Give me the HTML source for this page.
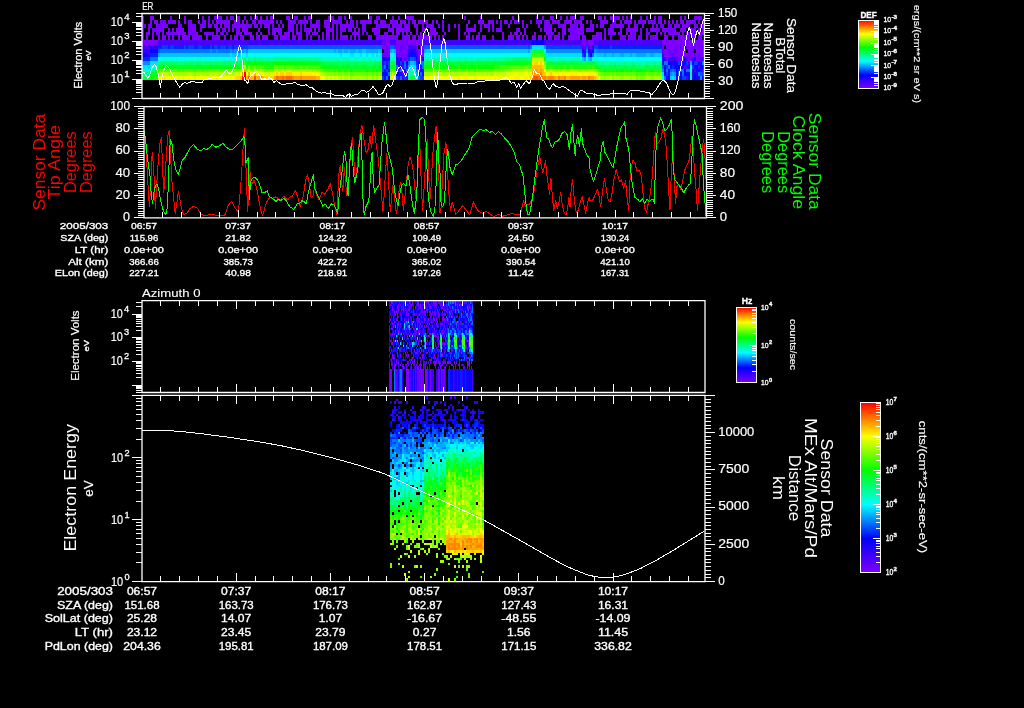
<!DOCTYPE html>
<html><head><meta charset="utf-8"><title>plot</title>
<style>html,body{margin:0;padding:0;background:#000;overflow:hidden}svg{display:block}text{font-family:"Liberation Sans",sans-serif}</style></head><body>
<svg width="1024" height="708" viewBox="0 0 1024 708">
<defs><linearGradient id="rb" x1="0" y1="0" x2="0" y2="1"><stop offset="0" stop-color="#ff0000"/><stop offset="0.2" stop-color="#ffff00"/><stop offset="0.4" stop-color="#00ff00"/><stop offset="0.6" stop-color="#00ffff"/><stop offset="0.8" stop-color="#0000ff"/><stop offset="1" stop-color="#8000ff"/></linearGradient></defs>
<rect width="1024" height="708" fill="#000"/>
<g shape-rendering="crispEdges">
<path fill="#8000ff" d="M142 15.7H144V19.7H142zM150 15.7H154V19.7H150zM184 15.7H186V19.7H184zM208 15.7H210V19.7H208zM236 15.7H240V19.7H236zM256 15.7H258V19.7H256zM260 15.7H262V19.7H260zM266 15.7H268V19.7H266zM270 15.7H272V19.7H270zM286 15.7H290V19.7H286zM308 15.7H310V19.7H308zM328 15.7H332V19.7H328zM344 15.7H346V19.7H344zM368 15.7H370V19.7H368zM410 15.7H412V19.7H410zM480 15.7H482V19.7H480zM512 15.7H514V19.7H512zM542 15.7H544V19.7H542zM550 15.7H552V19.7H550zM560 15.7H562V19.7H560zM566 15.7H568V19.7H566zM572 15.7H574V19.7H572zM580 15.7H584V19.7H580zM598 15.7H600V19.7H598zM604 15.7H606V19.7H604zM612 15.7H614V19.7H612zM618 15.7H620V19.7H618zM622 15.7H624V19.7H622zM626 15.7H628V19.7H626zM630 15.7H632V19.7H630zM654 15.7H656V19.7H654zM660 15.7H662V19.7H660zM680 15.7H682V19.7H680zM684 15.7H686V19.7H684zM696 15.7H700V19.7H696zM142 19.7H144V23.6H142zM150 19.7H152V23.6H150zM154 19.7H158V23.6H154zM168 19.7H170V23.6H168zM172 19.7H176V23.6H172zM178 19.7H180V23.6H178zM184 19.7H186V23.6H184zM198 19.7H200V23.6H198zM204 19.7H206V23.6H204zM216 19.7H218V23.6H216zM220 19.7H222V23.6H220zM224 19.7H226V23.6H224zM228 19.7H230V23.6H228zM234 19.7H236V23.6H234zM238 19.7H240V23.6H238zM242 19.7H244V23.6H242zM254 19.7H256V23.6H254zM258 19.7H262V23.6H258zM270 19.7H274V23.6H270zM290 19.7H292V23.6H290zM306 19.7H308V23.6H306zM310 19.7H312V23.6H310zM316 19.7H318V23.6H316zM324 19.7H326V23.6H324zM328 19.7H330V23.6H328zM334 19.7H336V23.6H334zM346 19.7H348V23.6H346zM356 19.7H358V23.6H356zM360 19.7H366V23.6H360zM368 19.7H372V23.6H368zM374 19.7H378V23.6H374zM380 19.7H384V23.6H380zM390 19.7H392V23.6H390zM396 19.7H398V23.6H396zM400 19.7H402V23.6H400zM404 19.7H406V23.6H404zM414 19.7H416V23.6H414zM418 19.7H420V23.6H418zM422 19.7H424V23.6H422zM426 19.7H428V23.6H426zM468 19.7H470V23.6H468zM478 19.7H480V23.6H478zM482 19.7H484V23.6H482zM488 19.7H490V23.6H488zM504 19.7H506V23.6H504zM522 19.7H524V23.6H522zM540 19.7H542V23.6H540zM546 19.7H548V23.6H546zM552 19.7H554V23.6H552zM558 19.7H560V23.6H558zM566 19.7H572V23.6H566zM574 19.7H576V23.6H574zM580 19.7H582V23.6H580zM586 19.7H588V23.6H586zM600 19.7H604V23.6H600zM606 19.7H608V23.6H606zM620 19.7H622V23.6H620zM626 19.7H628V23.6H626zM630 19.7H632V23.6H630zM644 19.7H646V23.6H644zM648 19.7H650V23.6H648zM660 19.7H662V23.6H660zM664 19.7H666V23.6H664zM668 19.7H670V23.6H668zM672 19.7H674V23.6H672zM676 19.7H678V23.6H676zM680 19.7H684V23.6H680zM686 19.7H688V23.6H686zM690 19.7H692V23.6H690zM156 23.6H158V27.5H156zM162 23.6H166V27.5H162zM178 23.6H180V27.5H178zM190 23.6H192V27.5H190zM194 23.6H196V27.5H194zM202 23.6H204V27.5H202zM208 23.6H210V27.5H208zM214 23.6H216V27.5H214zM220 23.6H222V27.5H220zM228 23.6H230V27.5H228zM234 23.6H236V27.5H234zM238 23.6H240V27.5H238zM242 23.6H246V27.5H242zM256 23.6H258V27.5H256zM268 23.6H270V27.5H268zM282 23.6H284V27.5H282zM288 23.6H290V27.5H288zM296 23.6H298V27.5H296zM312 23.6H314V27.5H312zM316 23.6H318V27.5H316zM326 23.6H330V27.5H326zM332 23.6H334V27.5H332zM340 23.6H342V27.5H340zM344 23.6H346V27.5H344zM362 23.6H364V27.5H362zM376 23.6H378V27.5H376zM382 23.6H386V27.5H382zM388 23.6H390V27.5H388zM392 23.6H394V27.5H392zM400 23.6H402V27.5H400zM406 23.6H408V27.5H406zM416 23.6H418V27.5H416zM426 23.6H428V27.5H426zM430 23.6H432V27.5H430zM442 23.6H444V27.5H442zM448 23.6H450V27.5H448zM454 23.6H456V27.5H454zM466 23.6H468V27.5H466zM484 23.6H486V27.5H484zM492 23.6H494V27.5H492zM508 23.6H510V27.5H508zM526 23.6H528V27.5H526zM538 23.6H540V27.5H538zM546 23.6H548V27.5H546zM562 23.6H566V27.5H562zM572 23.6H574V27.5H572zM580 23.6H584V27.5H580zM592 23.6H594V27.5H592zM600 23.6H604V27.5H600zM616 23.6H622V27.5H616zM628 23.6H630V27.5H628zM634 23.6H636V27.5H634zM642 23.6H644V27.5H642zM656 23.6H658V27.5H656zM674 23.6H680V27.5H674zM682 23.6H684V27.5H682zM686 23.6H688V27.5H686zM694 23.6H696V27.5H694zM700 23.6H704V27.5H700zM158 27.5H164V31.5H158zM168 27.5H170V31.5H168zM172 27.5H174V31.5H172zM176 27.5H184V31.5H176zM192 27.5H196V31.5H192zM216 27.5H218V31.5H216zM228 27.5H230V31.5H228zM232 27.5H234V31.5H232zM238 27.5H240V31.5H238zM242 27.5H248V31.5H242zM274 27.5H282V31.5H274zM292 27.5H294V31.5H292zM306 27.5H312V31.5H306zM314 27.5H316V31.5H314zM318 27.5H320V31.5H318zM328 27.5H330V31.5H328zM332 27.5H334V31.5H332zM344 27.5H346V31.5H344zM350 27.5H352V31.5H350zM354 27.5H356V31.5H354zM358 27.5H360V31.5H358zM372 27.5H380V31.5H372zM390 27.5H394V31.5H390zM396 27.5H404V31.5H396zM406 27.5H410V31.5H406zM416 27.5H418V31.5H416zM422 27.5H424V31.5H422zM430 27.5H432V31.5H430zM434 27.5H436V31.5H434zM448 27.5H450V31.5H448zM470 27.5H476V31.5H470zM480 27.5H482V31.5H480zM488 27.5H490V31.5H488zM498 27.5H500V31.5H498zM518 27.5H520V31.5H518zM540 27.5H542V31.5H540zM544 27.5H546V31.5H544zM548 27.5H552V31.5H548zM554 27.5H556V31.5H554zM562 27.5H566V31.5H562zM572 27.5H574V31.5H572zM576 27.5H582V31.5H576zM586 27.5H590V31.5H586zM592 27.5H594V31.5H592zM610 27.5H612V31.5H610zM620 27.5H622V31.5H620zM628 27.5H636V31.5H628zM652 27.5H656V31.5H652zM662 27.5H668V31.5H662zM674 27.5H676V31.5H674zM680 27.5H684V31.5H680zM694 27.5H696V31.5H694zM702 27.5H704V31.5H702zM146 31.5H150V35.4H146zM152 31.5H154V35.4H152zM162 31.5H164V35.4H162zM168 31.5H170V35.4H168zM172 31.5H174V35.4H172zM176 31.5H180V35.4H176zM182 31.5H184V35.4H182zM188 31.5H190V35.4H188zM196 31.5H198V35.4H196zM206 31.5H208V35.4H206zM236 31.5H238V35.4H236zM240 31.5H242V35.4H240zM244 31.5H248V35.4H244zM250 31.5H252V35.4H250zM256 31.5H258V35.4H256zM268 31.5H270V35.4H268zM274 31.5H276V35.4H274zM284 31.5H286V35.4H284zM288 31.5H290V35.4H288zM296 31.5H300V35.4H296zM314 31.5H318V35.4H314zM322 31.5H324V35.4H322zM326 31.5H330V35.4H326zM332 31.5H334V35.4H332zM340 31.5H342V35.4H340zM354 31.5H358V35.4H354zM374 31.5H376V35.4H374zM392 31.5H394V35.4H392zM398 31.5H400V35.4H398zM406 31.5H408V35.4H406zM410 31.5H412V35.4H410zM416 31.5H418V35.4H416zM420 31.5H422V35.4H420zM424 31.5H426V35.4H424zM432 31.5H438V35.4H432zM458 31.5H460V35.4H458zM464 31.5H466V35.4H464zM514 31.5H518V35.4H514zM520 31.5H522V35.4H520zM524 31.5H526V35.4H524zM534 31.5H536V35.4H534zM546 31.5H548V35.4H546zM558 31.5H560V35.4H558zM564 31.5H566V35.4H564zM574 31.5H580V35.4H574zM582 31.5H584V35.4H582zM596 31.5H598V35.4H596zM600 31.5H602V35.4H600zM608 31.5H610V35.4H608zM614 31.5H616V35.4H614zM620 31.5H622V35.4H620zM626 31.5H628V35.4H626zM630 31.5H632V35.4H630zM634 31.5H636V35.4H634zM640 31.5H642V35.4H640zM656 31.5H658V35.4H656zM660 31.5H662V35.4H660zM668 31.5H670V35.4H668zM674 31.5H676V35.4H674zM678 31.5H680V35.4H678zM682 31.5H684V35.4H682zM686 31.5H688V35.4H686zM690 31.5H692V35.4H690zM700 31.5H704V35.4H700zM146 35.4H148V40.4H146zM152 35.4H154V40.4H152zM158 35.4H160V40.4H158zM162 35.4H166V40.4H162zM168 35.4H170V40.4H168zM172 35.4H174V40.4H172zM178 35.4H180V40.4H178zM182 35.4H188V40.4H182zM194 35.4H200V40.4H194zM206 35.4H208V40.4H206zM218 35.4H220V40.4H218zM224 35.4H226V40.4H224zM230 35.4H232V40.4H230zM242 35.4H244V40.4H242zM250 35.4H254V40.4H250zM258 35.4H260V40.4H258zM262 35.4H268V40.4H262zM276 35.4H278V40.4H276zM280 35.4H282V40.4H280zM292 35.4H294V40.4H292zM298 35.4H300V40.4H298zM322 35.4H324V40.4H322zM344 35.4H348V40.4H344zM354 35.4H356V40.4H354zM368 35.4H370V40.4H368zM382 35.4H384V40.4H382zM386 35.4H390V40.4H386zM404 35.4H410V40.4H404zM414 35.4H416V40.4H414zM426 35.4H432V40.4H426zM442 35.4H444V40.4H442zM466 35.4H468V40.4H466zM476 35.4H478V40.4H476zM482 35.4H484V40.4H482zM502 35.4H504V40.4H502zM508 35.4H512V40.4H508zM522 35.4H524V40.4H522zM532 35.4H534V40.4H532zM538 35.4H540V40.4H538zM544 35.4H546V40.4H544zM548 35.4H550V40.4H548zM554 35.4H556V40.4H554zM558 35.4H560V40.4H558zM572 35.4H574V40.4H572zM578 35.4H580V40.4H578zM582 35.4H584V40.4H582zM600 35.4H602V40.4H600zM604 35.4H606V40.4H604zM622 35.4H624V40.4H622zM628 35.4H630V40.4H628zM646 35.4H648V40.4H646zM656 35.4H658V40.4H656zM664 35.4H668V40.4H664zM672 35.4H674V40.4H672zM680 35.4H684V40.4H680zM686 35.4H688V40.4H686zM142 40.4H158V45H142zM386 40.4H388V45H386zM396 40.4H400V45H396zM404 40.4H406V45H404zM408 40.4H420V45H408zM582 40.4H586V45H582zM588 40.4H594V45H588zM662 40.4H666V45H662zM668 40.4H680V45H668zM682 40.4H684V45H682zM688 40.4H698V45H688zM700 40.4H704V45H700zM382 45H386V49H382zM388 45H390V49H388zM396 45H400V49H396zM406 45H408V49H406zM422 45H424V49H422zM666 45H676V49H666zM678 45H680V49H678zM682 45H684V49H682zM688 45H692V49H688zM696 45H698V49H696zM700 45H702V49H700zM388 49H390V52.9H388zM396 49H400V52.9H396zM402 49H406V52.9H402zM418 49H420V52.9H418zM664 49H668V52.9H664zM678 49H680V52.9H678zM682 49H684V52.9H682zM688 49H692V52.9H688zM696 49H698V52.9H696zM700 49H704V52.9H700zM388 52.9H390V56.8H388zM400 52.9H402V56.8H400zM404 52.9H406V56.8H404zM418 52.9H420V56.8H418zM422 52.9H424V56.8H422zM664 52.9H670V56.8H664zM676 52.9H688V56.8H676zM690 52.9H694V56.8H690zM696 52.9H698V56.8H696zM702 52.9H704V56.8H702z"/>
<path fill="#7300ff" d="M170 15.7H172V19.7H170zM202 15.7H204V19.7H202zM214 15.7H222V19.7H214zM226 15.7H228V19.7H226zM230 15.7H234V19.7H230zM244 15.7H246V19.7H244zM250 15.7H252V19.7H250zM254 15.7H256V19.7H254zM272 15.7H274V19.7H272zM294 15.7H298V19.7H294zM304 15.7H306V19.7H304zM310 15.7H312V19.7H310zM332 15.7H334V19.7H332zM338 15.7H342V19.7H338zM350 15.7H352V19.7H350zM370 15.7H372V19.7H370zM376 15.7H380V19.7H376zM392 15.7H394V19.7H392zM398 15.7H400V19.7H398zM406 15.7H410V19.7H406zM412 15.7H414V19.7H412zM464 15.7H466V19.7H464zM518 15.7H520V19.7H518zM536 15.7H538V19.7H536zM552 15.7H554V19.7H552zM570 15.7H572V19.7H570zM574 15.7H576V19.7H574zM600 15.7H602V19.7H600zM610 15.7H612V19.7H610zM614 15.7H618V19.7H614zM640 15.7H642V19.7H640zM646 15.7H648V19.7H646zM658 15.7H660V19.7H658zM694 15.7H696V19.7H694zM700 15.7H702V19.7H700zM160 19.7H166V23.6H160zM170 19.7H172V23.6H170zM188 19.7H192V23.6H188zM202 19.7H204V23.6H202zM208 19.7H210V23.6H208zM212 19.7H214V23.6H212zM218 19.7H220V23.6H218zM222 19.7H224V23.6H222zM226 19.7H228V23.6H226zM236 19.7H238V23.6H236zM246 19.7H248V23.6H246zM252 19.7H254V23.6H252zM262 19.7H270V23.6H262zM276 19.7H278V23.6H276zM280 19.7H282V23.6H280zM288 19.7H290V23.6H288zM292 19.7H296V23.6H292zM298 19.7H306V23.6H298zM318 19.7H320V23.6H318zM326 19.7H328V23.6H326zM332 19.7H334V23.6H332zM336 19.7H342V23.6H336zM350 19.7H354V23.6H350zM366 19.7H368V23.6H366zM384 19.7H386V23.6H384zM392 19.7H396V23.6H392zM402 19.7H404V23.6H402zM408 19.7H410V23.6H408zM412 19.7H414V23.6H412zM420 19.7H422V23.6H420zM424 19.7H426V23.6H424zM432 19.7H434V23.6H432zM436 19.7H438V23.6H436zM442 19.7H444V23.6H442zM480 19.7H482V23.6H480zM490 19.7H494V23.6H490zM496 19.7H498V23.6H496zM500 19.7H502V23.6H500zM506 19.7H508V23.6H506zM510 19.7H512V23.6H510zM514 19.7H520V23.6H514zM530 19.7H532V23.6H530zM536 19.7H540V23.6H536zM544 19.7H546V23.6H544zM548 19.7H550V23.6H548zM554 19.7H558V23.6H554zM564 19.7H566V23.6H564zM576 19.7H580V23.6H576zM590 19.7H592V23.6H590zM604 19.7H606V23.6H604zM612 19.7H616V23.6H612zM624 19.7H626V23.6H624zM628 19.7H630V23.6H628zM634 19.7H636V23.6H634zM638 19.7H644V23.6H638zM650 19.7H656V23.6H650zM658 19.7H660V23.6H658zM688 19.7H690V23.6H688zM692 19.7H696V23.6H692zM698 19.7H700V23.6H698zM702 19.7H704V23.6H702zM142 23.6H146V27.5H142zM148 23.6H152V27.5H148zM158 23.6H162V27.5H158zM166 23.6H168V27.5H166zM180 23.6H182V27.5H180zM188 23.6H190V27.5H188zM192 23.6H194V27.5H192zM200 23.6H202V27.5H200zM204 23.6H206V27.5H204zM210 23.6H212V27.5H210zM216 23.6H218V27.5H216zM224 23.6H228V27.5H224zM232 23.6H234V27.5H232zM236 23.6H238V27.5H236zM240 23.6H242V27.5H240zM246 23.6H252V27.5H246zM254 23.6H256V27.5H254zM260 23.6H262V27.5H260zM264 23.6H268V27.5H264zM272 23.6H274V27.5H272zM278 23.6H280V27.5H278zM290 23.6H294V27.5H290zM300 23.6H302V27.5H300zM304 23.6H306V27.5H304zM310 23.6H312V27.5H310zM314 23.6H316V27.5H314zM318 23.6H320V27.5H318zM324 23.6H326V27.5H324zM336 23.6H338V27.5H336zM342 23.6H344V27.5H342zM346 23.6H354V27.5H346zM356 23.6H358V27.5H356zM364 23.6H366V27.5H364zM378 23.6H382V27.5H378zM386 23.6H388V27.5H386zM394 23.6H400V27.5H394zM404 23.6H406V27.5H404zM408 23.6H410V27.5H408zM414 23.6H416V27.5H414zM422 23.6H424V27.5H422zM428 23.6H430V27.5H428zM432 23.6H434V27.5H432zM438 23.6H440V27.5H438zM458 23.6H460V27.5H458zM474 23.6H476V27.5H474zM480 23.6H482V27.5H480zM486 23.6H490V27.5H486zM500 23.6H502V27.5H500zM522 23.6H524V27.5H522zM544 23.6H546V27.5H544zM548 23.6H552V27.5H548zM558 23.6H562V27.5H558zM570 23.6H572V27.5H570zM574 23.6H578V27.5H574zM590 23.6H592V27.5H590zM596 23.6H598V27.5H596zM610 23.6H616V27.5H610zM622 23.6H624V27.5H622zM636 23.6H638V27.5H636zM652 23.6H654V27.5H652zM660 23.6H664V27.5H660zM668 23.6H672V27.5H668zM684 23.6H686V27.5H684zM688 23.6H690V27.5H688zM696 23.6H698V27.5H696zM142 27.5H144V31.5H142zM148 27.5H150V31.5H148zM152 27.5H158V31.5H152zM188 27.5H192V31.5H188zM200 27.5H202V31.5H200zM218 27.5H220V31.5H218zM222 27.5H226V31.5H222zM236 27.5H238V31.5H236zM258 27.5H260V31.5H258zM268 27.5H270V31.5H268zM272 27.5H274V31.5H272zM288 27.5H292V31.5H288zM296 27.5H298V31.5H296zM300 27.5H302V31.5H300zM304 27.5H306V31.5H304zM326 27.5H328V31.5H326zM330 27.5H332V31.5H330zM336 27.5H338V31.5H336zM340 27.5H344V31.5H340zM348 27.5H350V31.5H348zM362 27.5H366V31.5H362zM388 27.5H390V31.5H388zM404 27.5H406V31.5H404zM424 27.5H426V31.5H424zM432 27.5H434V31.5H432zM442 27.5H444V31.5H442zM458 27.5H460V31.5H458zM466 27.5H470V31.5H466zM492 27.5H494V31.5H492zM496 27.5H498V31.5H496zM500 27.5H502V31.5H500zM516 27.5H518V31.5H516zM524 27.5H526V31.5H524zM546 27.5H548V31.5H546zM568 27.5H572V31.5H568zM574 27.5H576V31.5H574zM582 27.5H584V31.5H582zM590 27.5H592V31.5H590zM604 27.5H606V31.5H604zM608 27.5H610V31.5H608zM612 27.5H614V31.5H612zM626 27.5H628V31.5H626zM636 27.5H638V31.5H636zM640 27.5H642V31.5H640zM646 27.5H648V31.5H646zM650 27.5H652V31.5H650zM656 27.5H660V31.5H656zM668 27.5H674V31.5H668zM684 27.5H686V31.5H684zM690 27.5H694V31.5H690zM698 27.5H700V31.5H698zM142 31.5H144V35.4H142zM156 31.5H160V35.4H156zM166 31.5H168V35.4H166zM170 31.5H172V35.4H170zM174 31.5H176V35.4H174zM180 31.5H182V35.4H180zM184 31.5H186V35.4H184zM190 31.5H196V35.4H190zM204 31.5H206V35.4H204zM208 31.5H214V35.4H208zM216 31.5H218V35.4H216zM220 31.5H224V35.4H220zM226 31.5H228V35.4H226zM238 31.5H240V35.4H238zM248 31.5H250V35.4H248zM260 31.5H262V35.4H260zM272 31.5H274V35.4H272zM278 31.5H282V35.4H278zM286 31.5H288V35.4H286zM292 31.5H294V35.4H292zM300 31.5H302V35.4H300zM306 31.5H310V35.4H306zM312 31.5H314V35.4H312zM336 31.5H338V35.4H336zM352 31.5H354V35.4H352zM358 31.5H360V35.4H358zM362 31.5H364V35.4H362zM366 31.5H368V35.4H366zM376 31.5H380V35.4H376zM384 31.5H388V35.4H384zM396 31.5H398V35.4H396zM402 31.5H404V35.4H402zM428 31.5H432V35.4H428zM444 31.5H446V35.4H444zM468 31.5H470V35.4H468zM478 31.5H480V35.4H478zM502 31.5H504V35.4H502zM510 31.5H512V35.4H510zM548 31.5H554V35.4H548zM562 31.5H564V35.4H562zM570 31.5H574V35.4H570zM580 31.5H582V35.4H580zM598 31.5H600V35.4H598zM604 31.5H606V35.4H604zM610 31.5H614V35.4H610zM618 31.5H620V35.4H618zM632 31.5H634V35.4H632zM646 31.5H650V35.4H646zM664 31.5H666V35.4H664zM670 31.5H674V35.4H670zM676 31.5H678V35.4H676zM688 31.5H690V35.4H688zM692 31.5H696V35.4H692zM142 35.4H144V40.4H142zM188 35.4H190V40.4H188zM192 35.4H194V40.4H192zM200 35.4H202V40.4H200zM212 35.4H218V40.4H212zM234 35.4H238V40.4H234zM240 35.4H242V40.4H240zM256 35.4H258V40.4H256zM274 35.4H276V40.4H274zM282 35.4H290V40.4H282zM294 35.4H296V40.4H294zM300 35.4H302V40.4H300zM306 35.4H308V40.4H306zM310 35.4H312V40.4H310zM318 35.4H320V40.4H318zM326 35.4H330V40.4H326zM332 35.4H334V40.4H332zM336 35.4H338V40.4H336zM340 35.4H344V40.4H340zM350 35.4H352V40.4H350zM358 35.4H360V40.4H358zM370 35.4H372V40.4H370zM376 35.4H382V40.4H376zM384 35.4H386V40.4H384zM390 35.4H398V40.4H390zM402 35.4H404V40.4H402zM412 35.4H414V40.4H412zM418 35.4H426V40.4H418zM434 35.4H436V40.4H434zM438 35.4H440V40.4H438zM458 35.4H460V40.4H458zM468 35.4H470V40.4H468zM472 35.4H474V40.4H472zM478 35.4H480V40.4H478zM484 35.4H486V40.4H484zM492 35.4H494V40.4H492zM512 35.4H514V40.4H512zM516 35.4H520V40.4H516zM526 35.4H528V40.4H526zM534 35.4H536V40.4H534zM540 35.4H542V40.4H540zM550 35.4H552V40.4H550zM556 35.4H558V40.4H556zM562 35.4H564V40.4H562zM568 35.4H572V40.4H568zM574 35.4H578V40.4H574zM584 35.4H586V40.4H584zM592 35.4H600V40.4H592zM610 35.4H612V40.4H610zM620 35.4H622V40.4H620zM624 35.4H626V40.4H624zM630 35.4H636V40.4H630zM638 35.4H642V40.4H638zM650 35.4H656V40.4H650zM678 35.4H680V40.4H678zM684 35.4H686V40.4H684zM688 35.4H690V40.4H688zM692 35.4H696V40.4H692zM698 35.4H702V40.4H698zM388 40.4H390V45H388zM400 40.4H404V45H400zM420 40.4H422V45H420zM666 40.4H668V45H666zM680 40.4H682V45H680zM684 40.4H688V45H684zM404 45H406V49H404zM416 45H418V49H416zM590 45H592V49H590zM662 45H664V49H662zM676 45H678V49H676zM686 45H688V49H686zM698 45H700V49H698zM386 49H388V52.9H386zM406 49H408V52.9H406zM670 49H676V52.9H670zM680 49H682V52.9H680zM684 49H686V52.9H684zM698 49H700V52.9H698zM420 52.9H422V56.8H420zM688 52.9H690V56.8H688zM700 52.9H702V56.8H700zM402 56.8H404V60.7H402zM406 56.8H408V60.7H406zM418 56.8H422V60.7H418zM666 56.8H668V60.7H666zM678 56.8H684V60.7H678zM688 56.8H692V60.7H688zM696 56.8H700V60.7H696z"/>
<path fill="#6500ff" d="M382 40.4H386V45H382zM406 40.4H408V45H406zM422 40.4H424V45H422zM698 40.4H700V45H698zM386 45H388V49H386zM400 45H404V49H400zM420 45H422V49H420zM584 45H586V49H584zM680 45H682V49H680zM692 45H696V49H692zM702 45H704V49H702zM384 49H386V52.9H384zM400 49H402V52.9H400zM420 49H424V52.9H420zM668 49H670V52.9H668zM676 49H678V52.9H676zM692 49H694V52.9H692zM382 52.9H388V56.8H382zM396 52.9H400V56.8H396zM402 52.9H404V56.8H402zM406 52.9H408V56.8H406zM670 52.9H672V56.8H670zM694 52.9H696V56.8H694zM698 52.9H700V56.8H698z"/>
<path fill="#5800ff" d="M582 45H584V49H582zM662 49H664V52.9H662zM672 52.9H676V56.8H672zM700 56.8H702V60.7H700z"/>
<path fill="#4b00ff" d="M158 40.4H246V45H158zM546 40.4H582V45H546zM586 40.4H588V45H586zM594 40.4H662V45H594zM142 45H150V49H142zM408 45H410V49H408zM588 45H590V49H588zM416 49H418V52.9H416zM382 60.7H384V64.6H382zM386 60.7H388V64.6H386zM688 60.7H690V64.6H688zM402 64.6H404V68.5H402zM406 64.6H408V68.5H406zM420 64.6H422V68.5H420zM684 64.6H688V68.5H684zM698 64.6H700V68.5H698zM396 68.5H400V72.4H396zM402 68.5H404V72.4H402zM694 68.5H696V72.4H694zM702 68.5H704V72.4H702zM402 72.4H408V76.3H402zM398 76.3H400V79.7H398zM402 76.3H404V79.7H402zM406 76.3H408V79.7H406zM686 76.3H688V79.7H686z"/>
<path fill="#3d00ff" d="M246 40.4H382V45H246zM390 40.4H396V45H390zM424 40.4H530V45H424zM410 45H416V49H410zM416 52.9H418V56.8H416zM662 52.9H664V56.8H662zM398 56.8H400V60.7H398zM404 56.8H406V60.7H404zM668 56.8H678V60.7H668zM686 56.8H688V60.7H686zM692 56.8H694V60.7H692z"/>
<path fill="#3000ff" d="M530 40.4H532V45H530zM544 40.4H546V45H544zM150 45H158V49H150zM592 45H594V49H592zM142 49H150V52.9H142zM584 49H586V52.9H584zM590 49H592V52.9H590zM700 60.7H702V64.6H700z"/>
<path fill="#2300ff" d="M408 49H410V52.9H408zM582 49H584V52.9H582zM416 56.8H418V60.7H416zM662 56.8H664V60.7H662zM396 60.7H400V64.6H396zM402 60.7H404V64.6H402zM676 60.7H678V64.6H676zM682 60.7H684V64.6H682zM692 60.7H694V64.6H692zM688 64.6H690V68.5H688zM694 64.6H696V68.5H694zM388 68.5H390V72.4H388zM404 68.5H406V72.4H404zM420 68.5H422V72.4H420zM400 72.4H402V76.3H400zM680 72.4H682V76.3H680zM692 72.4H694V76.3H692zM696 72.4H698V76.3H696zM666 76.3H668V79.7H666zM676 76.3H678V79.7H676zM688 76.3H690V79.7H688zM698 76.3H700V79.7H698z"/>
<path fill="#1500ff" d="M152 49H154V52.9H152zM410 49H416V52.9H410zM588 49H590V52.9H588zM146 52.9H150V56.8H146zM408 52.9H410V56.8H408zM382 56.8H390V60.7H382zM396 56.8H398V60.7H396zM400 56.8H402V60.7H400zM422 56.8H424V60.7H422zM664 56.8H666V60.7H664zM684 56.8H686V60.7H684zM694 56.8H696V60.7H694zM702 56.8H704V60.7H702zM670 60.7H676V64.6H670zM700 64.6H702V68.5H700z"/>
<path fill="#0800ff" d="M532 40.4H544V45H532zM150 49H152V52.9H150zM154 49H158V52.9H154zM142 52.9H146V56.8H142zM406 60.7H408V64.6H406zM668 60.7H670V64.6H668zM680 60.7H682V64.6H680zM386 64.6H388V68.5H386zM418 64.6H420V68.5H418zM664 64.6H666V68.5H664zM676 64.6H680V68.5H676zM682 64.6H684V68.5H682zM668 68.5H670V72.4H668zM676 68.5H678V72.4H676zM684 68.5H686V72.4H684zM382 72.4H386V76.3H382zM396 72.4H398V76.3H396zM418 72.4H420V76.3H418zM664 72.4H666V76.3H664zM676 72.4H678V76.3H676zM684 72.4H686V76.3H684zM694 72.4H696V76.3H694zM388 76.3H390V79.7H388zM694 76.3H696V79.7H694zM702 76.3H704V79.7H702z"/>
<path fill="#000bff" d="M592 49H594V52.9H592zM410 52.9H416V56.8H410zM590 52.9H592V56.8H590zM418 60.7H420V64.6H418zM662 60.7H664V64.6H662zM684 60.7H686V64.6H684zM698 60.7H700V64.6H698zM398 64.6H402V68.5H398zM670 64.6H672V68.5H670zM674 64.6H676V68.5H674zM680 64.6H682V68.5H680zM696 64.6H698V68.5H696zM702 64.6H704V68.5H702zM384 68.5H386V72.4H384zM422 68.5H424V72.4H422zM664 68.5H666V72.4H664zM692 68.5H694V72.4H692zM696 68.5H700V72.4H696zM386 72.4H388V76.3H386zM398 72.4H400V76.3H398zM422 72.4H424V76.3H422zM668 72.4H670V76.3H668zM686 72.4H690V76.3H686zM384 76.3H386V79.7H384zM668 76.3H670V79.7H668zM680 76.3H682V79.7H680zM692 76.3H694V79.7H692zM696 76.3H698V79.7H696z"/>
<path fill="#0025ff" d="M158 45H162V49H158zM168 45H170V49H168zM174 45H184V49H174zM186 45H188V49H186zM194 45H198V49H194zM202 45H210V49H202zM212 45H214V49H212zM218 45H220V49H218zM226 45H228V49H226zM232 45H234V49H232zM598 45H610V49H598zM612 45H662V49H612zM150 52.9H158V56.8H150zM584 52.9H586V56.8H584zM142 56.8H150V60.7H142zM408 56.8H410V60.7H408zM416 60.7H418V64.6H416zM672 64.6H674V68.5H672zM700 68.5H702V72.4H700z"/>
<path fill="#0040ff" d="M162 45H168V49H162zM170 45H174V49H170zM184 45H186V49H184zM188 45H194V49H188zM198 45H202V49H198zM210 45H212V49H210zM214 45H218V49H214zM220 45H226V49H220zM228 45H232V49H228zM234 45H248V49H234zM394 45H396V49H394zM528 45H530V49H528zM546 45H582V49H546zM586 45H588V49H586zM594 45H598V49H594zM610 45H612V49H610zM582 52.9H584V56.8H582zM588 52.9H590V56.8H588zM414 56.8H416V60.7H414zM384 60.7H386V64.6H384zM388 60.7H390V64.6H388zM400 60.7H402V64.6H400zM678 60.7H680V64.6H678zM686 60.7H688V64.6H686zM694 60.7H698V64.6H694zM382 64.6H384V68.5H382zM388 64.6H390V68.5H388zM416 64.6H418V68.5H416zM666 64.6H668V68.5H666zM692 64.6H694V68.5H692zM382 68.5H384V72.4H382zM386 68.5H388V72.4H386zM678 68.5H680V72.4H678zM666 72.4H668V76.3H666zM702 72.4H704V76.3H702zM382 76.3H384V79.7H382zM396 76.3H398V79.7H396zM404 76.3H406V79.7H404zM420 76.3H424V79.7H420zM678 76.3H680V79.7H678zM682 76.3H686V79.7H682z"/>
<path fill="#005aff" d="M248 45H382V49H248zM390 45H394V49H390zM424 45H528V49H424zM158 49H160V52.9H158zM410 56.8H414V60.7H410zM662 64.6H664V68.5H662zM670 68.5H672V72.4H670zM674 68.5H676V72.4H674zM700 72.4H702V76.3H700z"/>
<path fill="#0075ff" d="M530 45H532V49H530zM160 49H210V52.9H160zM212 49H216V52.9H212zM218 49H230V52.9H218zM232 49H234V52.9H232zM238 49H240V52.9H238zM596 49H662V52.9H596zM592 52.9H594V56.8H592zM150 56.8H158V60.7H150zM404 60.7H406V64.6H404zM408 60.7H410V64.6H408zM420 60.7H424V64.6H420zM664 60.7H668V64.6H664zM702 60.7H704V64.6H702zM384 64.6H386V68.5H384zM396 64.6H398V68.5H396zM404 64.6H406V68.5H404zM422 64.6H424V68.5H422zM668 64.6H670V68.5H668zM400 68.5H402V72.4H400zM406 68.5H408V72.4H406zM416 68.5H420V72.4H416zM666 68.5H668V72.4H666zM672 68.5H674V72.4H672zM680 68.5H684V72.4H680zM686 68.5H690V72.4H686zM388 72.4H390V76.3H388zM420 72.4H422V76.3H420zM678 72.4H680V76.3H678zM682 72.4H684V76.3H682zM698 72.4H700V76.3H698zM386 76.3H388V79.7H386zM400 76.3H402V79.7H400zM418 76.3H420V79.7H418zM664 76.3H666V79.7H664z"/>
<path fill="#008fff" d="M544 45H546V49H544zM210 49H212V52.9H210zM216 49H218V52.9H216zM230 49H232V52.9H230zM234 49H238V52.9H234zM240 49H244V52.9H240zM246 49H248V52.9H246zM546 49H582V52.9H546zM586 49H588V52.9H586zM594 49H596V52.9H594zM142 60.7H150V64.6H142zM662 68.5H664V72.4H662zM670 72.4H672V76.3H670zM674 72.4H676V76.3H674zM700 76.3H702V79.7H700z"/>
<path fill="#00aaff" d="M244 49H246V52.9H244zM334 49H336V52.9H334zM338 49H342V52.9H338zM344 49H348V52.9H344zM350 49H356V52.9H350zM358 49H362V52.9H358zM366 49H378V52.9H366zM380 49H382V52.9H380zM390 49H392V52.9H390zM394 49H396V52.9H394zM424 49H426V52.9H424zM528 49H530V52.9H528zM158 52.9H160V56.8H158zM604 52.9H606V56.8H604zM612 52.9H614V56.8H612zM620 52.9H624V56.8H620zM630 52.9H632V56.8H630zM636 52.9H646V56.8H636zM650 52.9H654V56.8H650zM584 56.8H586V60.7H584zM590 56.8H592V60.7H590zM414 60.7H416V64.6H414zM690 60.7H692V64.6H690zM408 64.6H410V68.5H408zM416 72.4H418V76.3H416zM672 72.4H674V76.3H672z"/>
<path fill="#00c5ff" d="M248 49H334V52.9H248zM336 49H338V52.9H336zM342 49H344V52.9H342zM348 49H350V52.9H348zM356 49H358V52.9H356zM362 49H366V52.9H362zM378 49H380V52.9H378zM392 49H394V52.9H392zM426 49H528V52.9H426zM160 52.9H230V56.8H160zM232 52.9H236V56.8H232zM238 52.9H240V56.8H238zM596 52.9H604V56.8H596zM606 52.9H612V56.8H606zM614 52.9H620V56.8H614zM624 52.9H630V56.8H624zM632 52.9H636V56.8H632zM646 52.9H650V56.8H646zM654 52.9H662V56.8H654zM582 56.8H584V60.7H582zM588 56.8H590V60.7H588zM410 60.7H414V64.6H410zM148 64.6H150V68.5H148zM670 76.3H672V79.7H670zM674 76.3H676V79.7H674z"/>
<path fill="#00dfff" d="M532 45H544V49H532zM530 49H532V52.9H530zM230 52.9H232V56.8H230zM236 52.9H238V56.8H236zM240 52.9H242V56.8H240zM246 52.9H248V56.8H246zM340 52.9H342V56.8H340zM350 52.9H354V56.8H350zM360 52.9H362V56.8H360zM366 52.9H368V56.8H366zM372 52.9H374V56.8H372zM376 52.9H378V56.8H376zM380 52.9H382V56.8H380zM394 52.9H396V56.8H394zM546 52.9H582V56.8H546zM586 52.9H588V56.8H586zM594 52.9H596V56.8H594zM150 60.7H158V64.6H150zM142 64.6H148V68.5H142zM410 64.6H416V68.5H410zM408 68.5H410V72.4H408zM662 72.4H664V76.3H662zM416 76.3H418V79.7H416zM672 76.3H674V79.7H672z"/>
<path fill="#00faff" d="M242 52.9H244V56.8H242zM264 52.9H266V56.8H264zM268 52.9H272V56.8H268zM320 52.9H340V56.8H320zM342 52.9H350V56.8H342zM354 52.9H360V56.8H354zM362 52.9H366V56.8H362zM368 52.9H372V56.8H368zM374 52.9H376V56.8H374zM378 52.9H380V56.8H378zM390 52.9H394V56.8H390zM424 52.9H458V56.8H424zM460 52.9H494V56.8H460zM496 52.9H498V56.8H496zM528 52.9H530V56.8H528zM158 56.8H160V60.7H158zM592 56.8H594V60.7H592zM604 56.8H606V60.7H604zM612 56.8H614V60.7H612zM616 56.8H624V60.7H616zM626 56.8H628V60.7H626zM630 56.8H632V60.7H630zM634 56.8H646V60.7H634zM650 56.8H654V60.7H650zM662 76.3H664V79.7H662z"/>
<path fill="#00ffea" d="M244 52.9H246V56.8H244zM248 52.9H264V56.8H248zM266 52.9H268V56.8H266zM272 52.9H320V56.8H272zM458 52.9H460V56.8H458zM494 52.9H496V56.8H494zM498 52.9H528V56.8H498zM160 56.8H162V60.7H160zM168 56.8H170V60.7H168zM174 56.8H176V60.7H174zM178 56.8H184V60.7H178zM186 56.8H188V60.7H186zM194 56.8H196V60.7H194zM202 56.8H204V60.7H202zM206 56.8H210V60.7H206zM212 56.8H214V60.7H212zM218 56.8H220V60.7H218zM226 56.8H228V60.7H226zM232 56.8H234V60.7H232zM598 56.8H604V60.7H598zM606 56.8H612V60.7H606zM614 56.8H616V60.7H614zM624 56.8H626V60.7H624zM628 56.8H630V60.7H628zM632 56.8H634V60.7H632zM646 56.8H650V60.7H646zM654 56.8H662V60.7H654zM152 64.6H154V68.5H152zM690 64.6H692V68.5H690zM414 68.5H416V72.4H414z"/>
<path fill="#00ffcf" d="M544 49H546V52.9H544zM162 56.8H168V60.7H162zM170 56.8H174V60.7H170zM176 56.8H178V60.7H176zM184 56.8H186V60.7H184zM188 56.8H194V60.7H188zM196 56.8H202V60.7H196zM204 56.8H206V60.7H204zM210 56.8H212V60.7H210zM214 56.8H218V60.7H214zM220 56.8H226V60.7H220zM228 56.8H232V60.7H228zM234 56.8H240V60.7H234zM340 56.8H342V60.7H340zM350 56.8H354V60.7H350zM358 56.8H362V60.7H358zM366 56.8H368V60.7H366zM372 56.8H374V60.7H372zM376 56.8H378V60.7H376zM554 56.8H558V60.7H554zM566 56.8H570V60.7H566zM580 56.8H582V60.7H580zM586 56.8H588V60.7H586zM594 56.8H598V60.7H594zM150 64.6H152V68.5H150zM154 64.6H158V68.5H154zM142 68.5H150V72.4H142zM410 68.5H414V72.4H410zM690 68.5H692V72.4H690zM408 72.4H410V76.3H408z"/>
<path fill="#00ffb5" d="M530 52.9H532V56.8H530zM240 56.8H242V60.7H240zM246 56.8H248V60.7H246zM322 56.8H340V60.7H322zM342 56.8H350V60.7H342zM354 56.8H358V60.7H354zM362 56.8H366V60.7H362zM368 56.8H372V60.7H368zM374 56.8H376V60.7H374zM378 56.8H382V60.7H378zM390 56.8H392V60.7H390zM394 56.8H396V60.7H394zM424 56.8H426V60.7H424zM428 56.8H434V60.7H428zM442 56.8H448V60.7H442zM450 56.8H458V60.7H450zM460 56.8H464V60.7H460zM468 56.8H470V60.7H468zM472 56.8H476V60.7H472zM482 56.8H484V60.7H482zM546 56.8H554V60.7H546zM558 56.8H566V60.7H558zM570 56.8H580V60.7H570zM642 60.7H644V64.6H642zM690 76.3H692V79.7H690z"/>
<path fill="#00ff9a" d="M242 56.8H244V60.7H242zM250 56.8H254V60.7H250zM256 56.8H258V60.7H256zM262 56.8H274V60.7H262zM312 56.8H314V60.7H312zM316 56.8H322V60.7H316zM392 56.8H394V60.7H392zM426 56.8H428V60.7H426zM434 56.8H442V60.7H434zM448 56.8H450V60.7H448zM458 56.8H460V60.7H458zM464 56.8H468V60.7H464zM470 56.8H472V60.7H470zM476 56.8H482V60.7H476zM484 56.8H504V60.7H484zM604 60.7H610V64.6H604zM612 60.7H614V64.6H612zM616 60.7H624V64.6H616zM626 60.7H632V64.6H626zM634 60.7H642V64.6H634zM644 60.7H646V64.6H644zM648 60.7H654V64.6H648zM656 60.7H660V64.6H656zM148 72.4H150V76.3H148zM410 72.4H412V76.3H410zM414 72.4H416V76.3H414zM408 76.3H410V79.7H408z"/>
<path fill="#00ff80" d="M248 56.8H250V60.7H248zM254 56.8H256V60.7H254zM258 56.8H262V60.7H258zM274 56.8H312V60.7H274zM314 56.8H316V60.7H314zM504 56.8H514V60.7H504zM528 56.8H530V60.7H528zM158 60.7H160V64.6H158zM178 60.7H180V64.6H178zM182 60.7H184V64.6H182zM194 60.7H196V64.6H194zM202 60.7H204V64.6H202zM232 60.7H234V64.6H232zM598 60.7H604V64.6H598zM610 60.7H612V64.6H610zM614 60.7H616V64.6H614zM624 60.7H626V64.6H624zM632 60.7H634V64.6H632zM646 60.7H648V64.6H646zM654 60.7H656V64.6H654zM660 60.7H662V64.6H660zM150 68.5H156V72.4H150zM142 72.4H148V76.3H142zM412 72.4H414V76.3H412z"/>
<path fill="#00ff65" d="M544 52.9H546V56.8H544zM244 56.8H246V60.7H244zM514 56.8H528V60.7H514zM160 60.7H178V64.6H160zM180 60.7H182V64.6H180zM184 60.7H194V64.6H184zM196 60.7H202V64.6H196zM204 60.7H232V64.6H204zM234 60.7H236V64.6H234zM238 60.7H240V64.6H238zM340 60.7H342V64.6H340zM344 60.7H346V64.6H344zM350 60.7H354V64.6H350zM358 60.7H362V64.6H358zM366 60.7H374V64.6H366zM376 60.7H378V64.6H376zM596 60.7H598V64.6H596zM636 64.6H638V68.5H636zM640 64.6H644V68.5H640zM156 68.5H158V72.4H156zM690 72.4H692V76.3H690zM148 76.3H150V79.7H148zM414 76.3H416V79.7H414z"/>
<path fill="#00ff4a" d="M532 49H534V52.9H532zM538 49H540V52.9H538zM542 49H544V52.9H542zM530 56.8H532V60.7H530zM236 60.7H238V64.6H236zM240 60.7H242V64.6H240zM324 60.7H340V64.6H324zM342 60.7H344V64.6H342zM346 60.7H350V64.6H346zM354 60.7H358V64.6H354zM362 60.7H366V64.6H362zM374 60.7H376V64.6H374zM378 60.7H382V64.6H378zM390 60.7H392V64.6H390zM394 60.7H396V64.6H394zM424 60.7H426V64.6H424zM432 60.7H434V64.6H432zM454 60.7H456V64.6H454zM468 60.7H470V64.6H468zM474 60.7H476V64.6H474zM546 60.7H548V64.6H546zM554 60.7H558V64.6H554zM560 60.7H562V64.6H560zM566 60.7H570V64.6H566zM574 60.7H576V64.6H574zM578 60.7H588V64.6H578zM594 60.7H596V64.6H594zM602 64.6H610V68.5H602zM612 64.6H614V68.5H612zM616 64.6H624V68.5H616zM626 64.6H632V68.5H626zM634 64.6H636V68.5H634zM638 64.6H640V68.5H638zM644 64.6H646V68.5H644zM648 64.6H654V68.5H648zM656 64.6H660V68.5H656zM142 76.3H148V79.7H142zM410 76.3H414V79.7H410z"/>
<path fill="#00ff30" d="M534 49H538V52.9H534zM540 49H542V52.9H540zM246 60.7H248V64.6H246zM264 60.7H266V64.6H264zM268 60.7H272V64.6H268zM320 60.7H324V64.6H320zM392 60.7H394V64.6H392zM426 60.7H432V64.6H426zM434 60.7H454V64.6H434zM456 60.7H468V64.6H456zM470 60.7H474V64.6H470zM476 60.7H494V64.6H476zM496 60.7H506V64.6H496zM528 60.7H530V64.6H528zM548 60.7H554V64.6H548zM558 60.7H560V64.6H558zM562 60.7H566V64.6H562zM570 60.7H574V64.6H570zM576 60.7H578V64.6H576zM588 60.7H594V64.6H588zM158 64.6H160V68.5H158zM194 64.6H196V68.5H194zM340 64.6H342V68.5H340zM344 64.6H346V68.5H344zM350 64.6H356V68.5H350zM358 64.6H362V68.5H358zM366 64.6H378V68.5H366zM598 64.6H602V68.5H598zM610 64.6H612V68.5H610zM614 64.6H616V68.5H614zM624 64.6H626V68.5H624zM632 64.6H634V68.5H632zM646 64.6H648V68.5H646zM654 64.6H656V68.5H654zM660 64.6H662V68.5H660zM150 72.4H156V76.3H150z"/>
<path fill="#00ff15" d="M242 60.7H244V64.6H242zM250 60.7H254V64.6H250zM256 60.7H260V64.6H256zM262 60.7H264V64.6H262zM266 60.7H268V64.6H266zM272 60.7H274V64.6H272zM284 60.7H286V64.6H284zM294 60.7H300V64.6H294zM302 60.7H306V64.6H302zM308 60.7H320V64.6H308zM494 60.7H496V64.6H494zM506 60.7H524V64.6H506zM526 60.7H528V64.6H526zM160 64.6H162V68.5H160zM164 64.6H172V68.5H164zM174 64.6H194V68.5H174zM196 64.6H210V68.5H196zM212 64.6H216V68.5H212zM218 64.6H230V68.5H218zM232 64.6H234V68.5H232zM326 64.6H328V68.5H326zM330 64.6H340V68.5H330zM342 64.6H344V68.5H342zM346 64.6H350V68.5H346zM356 64.6H358V68.5H356zM362 64.6H366V68.5H362zM378 64.6H382V68.5H378zM390 64.6H392V68.5H390zM394 64.6H396V68.5H394zM642 68.5H644V72.4H642zM156 72.4H158V76.3H156z"/>
<path fill="#05ff00" d="M544 56.8H546V60.7H544zM248 60.7H250V64.6H248zM254 60.7H256V64.6H254zM260 60.7H262V64.6H260zM274 60.7H284V64.6H274zM286 60.7H294V64.6H286zM300 60.7H302V64.6H300zM306 60.7H308V64.6H306zM524 60.7H526V64.6H524zM162 64.6H164V68.5H162zM172 64.6H174V68.5H172zM210 64.6H212V68.5H210zM216 64.6H218V68.5H216zM230 64.6H232V68.5H230zM234 64.6H240V68.5H234zM322 64.6H326V68.5H322zM328 64.6H330V68.5H328zM392 64.6H394V68.5H392zM424 64.6H434V68.5H424zM436 64.6H438V68.5H436zM440 64.6H458V68.5H440zM460 64.6H466V68.5H460zM468 64.6H476V68.5H468zM478 64.6H494V68.5H478zM596 64.6H598V68.5H596zM350 68.5H352V72.4H350zM366 68.5H368V72.4H366zM372 68.5H374V72.4H372zM376 68.5H378V72.4H376zM604 68.5H606V72.4H604zM612 68.5H614V72.4H612zM616 68.5H618V72.4H616zM620 68.5H624V72.4H620zM626 68.5H628V72.4H626zM630 68.5H632V72.4H630zM636 68.5H642V72.4H636zM644 68.5H646V72.4H644zM650 68.5H654V72.4H650zM150 76.3H154V79.7H150z"/>
<path fill="#20ff00" d="M530 60.7H532V64.6H530zM240 64.6H242V68.5H240zM246 64.6H248V68.5H246zM264 64.6H274V68.5H264zM320 64.6H322V68.5H320zM434 64.6H436V68.5H434zM438 64.6H440V68.5H438zM458 64.6H460V68.5H458zM466 64.6H468V68.5H466zM476 64.6H478V68.5H476zM494 64.6H500V68.5H494zM546 64.6H548V68.5H546zM554 64.6H558V68.5H554zM560 64.6H564V68.5H560zM566 64.6H570V68.5H566zM572 64.6H588V68.5H572zM590 64.6H592V68.5H590zM594 64.6H596V68.5H594zM334 68.5H336V72.4H334zM338 68.5H342V72.4H338zM344 68.5H348V72.4H344zM352 68.5H366V72.4H352zM368 68.5H372V72.4H368zM374 68.5H376V72.4H374zM378 68.5H382V72.4H378zM600 68.5H604V72.4H600zM606 68.5H612V72.4H606zM614 68.5H616V72.4H614zM618 68.5H620V72.4H618zM624 68.5H626V72.4H624zM628 68.5H630V72.4H628zM632 68.5H636V72.4H632zM646 68.5H650V72.4H646zM654 68.5H662V72.4H654zM154 76.3H158V79.7H154z"/>
<path fill="#3aff00" d="M532 52.9H544V56.8H532zM244 60.7H246V64.6H244zM250 64.6H254V68.5H250zM256 64.6H260V68.5H256zM262 64.6H264V68.5H262zM284 64.6H286V68.5H284zM294 64.6H300V68.5H294zM302 64.6H306V68.5H302zM308 64.6H320V68.5H308zM500 64.6H510V68.5H500zM548 64.6H554V68.5H548zM558 64.6H560V68.5H558zM564 64.6H566V68.5H564zM570 64.6H572V68.5H570zM588 64.6H590V68.5H588zM592 64.6H594V68.5H592zM158 68.5H160V72.4H158zM178 68.5H180V72.4H178zM182 68.5H184V72.4H182zM194 68.5H196V72.4H194zM202 68.5H204V72.4H202zM232 68.5H234V72.4H232zM324 68.5H334V72.4H324zM336 68.5H338V72.4H336zM342 68.5H344V72.4H342zM348 68.5H350V72.4H348zM390 68.5H392V72.4H390zM394 68.5H396V72.4H394zM424 68.5H426V72.4H424zM474 68.5H476V72.4H474zM598 68.5H600V72.4H598zM636 72.4H638V76.3H636zM640 72.4H644V76.3H640z"/>
<path fill="#55ff00" d="M260 64.6H262V68.5H260zM274 64.6H284V68.5H274zM286 64.6H294V68.5H286zM300 64.6H302V68.5H300zM306 64.6H308V68.5H306zM510 64.6H524V68.5H510zM528 64.6H532V68.5H528zM160 68.5H178V72.4H160zM180 68.5H182V72.4H180zM184 68.5H194V72.4H184zM196 68.5H202V72.4H196zM204 68.5H210V72.4H204zM212 68.5H216V72.4H212zM218 68.5H230V72.4H218zM322 68.5H324V72.4H322zM392 68.5H394V72.4H392zM426 68.5H434V72.4H426zM436 68.5H438V72.4H436zM440 68.5H458V72.4H440zM460 68.5H466V72.4H460zM468 68.5H474V72.4H468zM476 68.5H494V72.4H476zM350 72.4H354V76.3H350zM366 72.4H368V76.3H366zM372 72.4H374V76.3H372zM376 72.4H378V76.3H376zM604 72.4H610V76.3H604zM612 72.4H614V76.3H612zM616 72.4H624V76.3H616zM626 72.4H632V76.3H626zM634 72.4H636V76.3H634zM638 72.4H640V76.3H638zM644 72.4H646V76.3H644zM648 72.4H654V76.3H648zM656 72.4H660V76.3H656z"/>
<path fill="#70ff00" d="M544 60.7H546V64.6H544zM242 64.6H244V68.5H242zM248 64.6H250V68.5H248zM254 64.6H256V68.5H254zM524 64.6H528V68.5H524zM210 68.5H212V72.4H210zM216 68.5H218V72.4H216zM230 68.5H232V72.4H230zM234 68.5H240V72.4H234zM264 68.5H274V72.4H264zM320 68.5H322V72.4H320zM434 68.5H436V72.4H434zM438 68.5H440V72.4H438zM458 68.5H460V72.4H458zM466 68.5H468V72.4H466zM494 68.5H504V72.4H494zM596 68.5H598V72.4H596zM334 72.4H336V76.3H334zM338 72.4H342V76.3H338zM344 72.4H348V76.3H344zM354 72.4H366V76.3H354zM368 72.4H372V76.3H368zM374 72.4H376V76.3H374zM378 72.4H382V76.3H378zM600 72.4H604V76.3H600zM610 72.4H612V76.3H610zM614 72.4H616V76.3H614zM624 72.4H626V76.3H624zM632 72.4H634V76.3H632zM646 72.4H648V76.3H646zM654 72.4H656V76.3H654zM660 72.4H662V76.3H660zM636 76.3H638V79.7H636zM640 76.3H644V79.7H640z"/>
<path fill="#8aff00" d="M240 68.5H242V72.4H240zM246 68.5H248V72.4H246zM250 68.5H254V72.4H250zM256 68.5H258V72.4H256zM262 68.5H264V72.4H262zM312 68.5H314V72.4H312zM316 68.5H320V72.4H316zM504 68.5H512V72.4H504zM546 68.5H548V72.4H546zM554 68.5H558V72.4H554zM560 68.5H562V72.4H560zM566 68.5H570V72.4H566zM578 68.5H582V72.4H578zM584 68.5H588V72.4H584zM594 68.5H596V72.4H594zM158 72.4H160V76.3H158zM194 72.4H196V76.3H194zM326 72.4H334V76.3H326zM336 72.4H338V76.3H336zM342 72.4H344V76.3H342zM348 72.4H350V76.3H348zM390 72.4H392V76.3H390zM394 72.4H396V76.3H394zM598 72.4H600V76.3H598zM350 76.3H352V79.7H350zM366 76.3H368V79.7H366zM372 76.3H374V79.7H372zM376 76.3H378V79.7H376zM604 76.3H606V79.7H604zM612 76.3H614V79.7H612zM620 76.3H624V79.7H620zM630 76.3H632V79.7H630zM638 76.3H640V79.7H638zM644 76.3H646V79.7H644zM650 76.3H654V79.7H650z"/>
<path fill="#a5ff00" d="M544 64.6H546V68.5H544zM258 68.5H262V72.4H258zM274 68.5H276V72.4H274zM278 68.5H282V72.4H278zM284 68.5H286V72.4H284zM292 68.5H312V72.4H292zM314 68.5H316V72.4H314zM512 68.5H524V72.4H512zM528 68.5H532V72.4H528zM548 68.5H550V72.4H548zM552 68.5H554V72.4H552zM558 68.5H560V72.4H558zM562 68.5H566V72.4H562zM570 68.5H578V72.4H570zM582 68.5H584V72.4H582zM588 68.5H594V72.4H588zM160 72.4H162V76.3H160zM168 72.4H170V76.3H168zM174 72.4H188V76.3H174zM192 72.4H194V76.3H192zM196 72.4H200V76.3H196zM202 72.4H210V76.3H202zM212 72.4H214V76.3H212zM218 72.4H222V76.3H218zM226 72.4H228V76.3H226zM232 72.4H234V76.3H232zM322 72.4H326V76.3H322zM424 72.4H434V76.3H424zM436 72.4H438V76.3H436zM442 72.4H448V76.3H442zM450 72.4H458V76.3H450zM460 72.4H464V76.3H460zM468 72.4H476V76.3H468zM482 72.4H484V76.3H482zM486 72.4H488V76.3H486zM490 72.4H494V76.3H490zM340 76.3H342V79.7H340zM344 76.3H348V79.7H344zM352 76.3H366V79.7H352zM368 76.3H372V79.7H368zM374 76.3H376V79.7H374zM600 76.3H604V79.7H600zM606 76.3H610V79.7H606zM614 76.3H620V79.7H614zM624 76.3H630V79.7H624zM632 76.3H636V79.7H632zM646 76.3H650V79.7H646zM654 76.3H662V79.7H654z"/>
<path fill="#bfff00" d="M532 56.8H544V60.7H532zM244 64.6H246V68.5H244zM254 68.5H256V72.4H254zM276 68.5H278V72.4H276zM282 68.5H284V72.4H282zM286 68.5H292V72.4H286zM524 68.5H528V72.4H524zM550 68.5H552V72.4H550zM162 72.4H168V76.3H162zM170 72.4H174V76.3H170zM188 72.4H192V76.3H188zM200 72.4H202V76.3H200zM210 72.4H212V76.3H210zM214 72.4H218V76.3H214zM222 72.4H226V76.3H222zM228 72.4H232V76.3H228zM234 72.4H236V76.3H234zM238 72.4H240V76.3H238zM268 72.4H270V76.3H268zM320 72.4H322V76.3H320zM392 72.4H394V76.3H392zM434 72.4H436V76.3H434zM438 72.4H442V76.3H438zM448 72.4H450V76.3H448zM458 72.4H460V76.3H458zM464 72.4H468V76.3H464zM476 72.4H482V76.3H476zM484 72.4H486V76.3H484zM488 72.4H490V76.3H488zM496 72.4H506V76.3H496zM326 76.3H328V79.7H326zM330 76.3H332V79.7H330zM334 76.3H336V79.7H334zM338 76.3H340V79.7H338zM342 76.3H344V79.7H342zM348 76.3H350V79.7H348zM378 76.3H382V79.7H378zM610 76.3H612V79.7H610z"/>
<path fill="#daff00" d="M248 68.5H250V72.4H248zM236 72.4H238V76.3H236zM264 72.4H268V76.3H264zM270 72.4H274V76.3H270zM494 72.4H496V76.3H494zM506 72.4H514V76.3H506zM518 72.4H524V76.3H518zM528 72.4H530V76.3H528zM596 72.4H598V76.3H596zM158 76.3H160V79.7H158zM178 76.3H180V79.7H178zM182 76.3H184V79.7H182zM194 76.3H196V79.7H194zM324 76.3H326V79.7H324zM328 76.3H330V79.7H328zM332 76.3H334V79.7H332zM336 76.3H338V79.7H336zM390 76.3H392V79.7H390zM394 76.3H396V79.7H394zM474 76.3H476V79.7H474zM598 76.3H600V79.7H598z"/>
<path fill="#f4ff00" d="M242 68.5H244V72.4H242zM544 68.5H546V72.4H544zM240 72.4H242V76.3H240zM246 72.4H248V76.3H246zM250 72.4H254V76.3H250zM256 72.4H260V76.3H256zM262 72.4H264V76.3H262zM312 72.4H314V76.3H312zM316 72.4H320V76.3H316zM514 72.4H518V76.3H514zM524 72.4H528V76.3H524zM530 72.4H532V76.3H530zM546 72.4H548V76.3H546zM554 72.4H558V76.3H554zM560 72.4H562V76.3H560zM566 72.4H570V76.3H566zM578 72.4H582V76.3H578zM584 72.4H588V76.3H584zM594 72.4H596V76.3H594zM160 76.3H162V79.7H160zM166 76.3H172V79.7H166zM174 76.3H178V79.7H174zM180 76.3H182V79.7H180zM184 76.3H188V79.7H184zM190 76.3H194V79.7H190zM196 76.3H210V79.7H196zM212 76.3H216V79.7H212zM218 76.3H230V79.7H218zM232 76.3H234V79.7H232zM322 76.3H324V79.7H322zM424 76.3H434V79.7H424zM436 76.3H438V79.7H436zM440 76.3H458V79.7H440zM460 76.3H464V79.7H460zM468 76.3H474V79.7H468zM478 76.3H484V79.7H478zM486 76.3H494V79.7H486zM496 76.3H498V79.7H496zM500 76.3H506V79.7H500zM508 76.3H514V79.7H508zM520 76.3H524V79.7H520zM528 76.3H530V79.7H528z"/>
<path fill="#ffef00" d="M532 60.7H534V64.6H532zM538 60.7H540V64.6H538zM542 60.7H544V64.6H542zM260 72.4H262V76.3H260zM274 72.4H276V76.3H274zM278 72.4H280V76.3H278zM284 72.4H286V76.3H284zM292 72.4H300V76.3H292zM302 72.4H312V76.3H302zM314 72.4H316V76.3H314zM548 72.4H550V76.3H548zM552 72.4H554V76.3H552zM558 72.4H560V76.3H558zM562 72.4H566V76.3H562zM570 72.4H578V76.3H570zM582 72.4H584V76.3H582zM588 72.4H594V76.3H588zM162 76.3H166V79.7H162zM172 76.3H174V79.7H172zM188 76.3H190V79.7H188zM210 76.3H212V79.7H210zM216 76.3H218V79.7H216zM230 76.3H232V79.7H230zM234 76.3H236V79.7H234zM268 76.3H270V79.7H268zM320 76.3H322V79.7H320zM392 76.3H394V79.7H392zM434 76.3H436V79.7H434zM438 76.3H440V79.7H438zM458 76.3H460V79.7H458zM464 76.3H468V79.7H464zM476 76.3H478V79.7H476zM484 76.3H486V79.7H484zM494 76.3H496V79.7H494zM498 76.3H500V79.7H498zM506 76.3H508V79.7H506zM514 76.3H520V79.7H514zM524 76.3H528V79.7H524z"/>
<path fill="#ffd400" d="M534 60.7H538V64.6H534zM540 60.7H542V64.6H540zM542 64.6H544V68.5H542zM276 72.4H278V76.3H276zM280 72.4H284V76.3H280zM286 72.4H292V76.3H286zM300 72.4H302V76.3H300zM544 72.4H546V76.3H544zM550 72.4H552V76.3H550zM236 76.3H240V79.7H236zM264 76.3H268V79.7H264zM270 76.3H274V79.7H270zM530 76.3H532V79.7H530zM596 76.3H598V79.7H596z"/>
<path fill="#ffba00" d="M532 64.6H542V68.5H532zM532 68.5H534V72.4H532zM538 68.5H540V72.4H538zM542 68.5H544V72.4H542zM248 72.4H250V76.3H248zM254 72.4H256V76.3H254zM542 72.4H544V76.3H542zM240 76.3H242V79.7H240zM246 76.3H248V79.7H246zM250 76.3H254V79.7H250zM256 76.3H258V79.7H256zM262 76.3H264V79.7H262zM316 76.3H320V79.7H316zM556 76.3H558V79.7H556zM566 76.3H570V79.7H566zM580 76.3H582V79.7H580zM586 76.3H588V79.7H586zM594 76.3H596V79.7H594z"/>
<path fill="#ff9f00" d="M244 68.5H246V72.4H244zM534 68.5H538V72.4H534zM540 68.5H542V72.4H540zM532 72.4H540V76.3H532zM258 76.3H260V79.7H258zM274 76.3H276V79.7H274zM294 76.3H300V79.7H294zM302 76.3H316V79.7H302zM546 76.3H548V79.7H546zM554 76.3H556V79.7H554zM560 76.3H564V79.7H560zM570 76.3H580V79.7H570zM582 76.3H586V79.7H582zM590 76.3H594V79.7H590z"/>
<path fill="#ff8500" d="M242 72.4H244V76.3H242zM540 72.4H542V76.3H540zM260 76.3H262V79.7H260zM278 76.3H282V79.7H278zM284 76.3H286V79.7H284zM292 76.3H294V79.7H292zM300 76.3H302V79.7H300zM542 76.3H546V79.7H542zM548 76.3H554V79.7H548zM558 76.3H560V79.7H558zM564 76.3H566V79.7H564zM588 76.3H590V79.7H588z"/>
<path fill="#ff6a00" d="M276 76.3H278V79.7H276zM282 76.3H284V79.7H282zM286 76.3H292V79.7H286zM532 76.3H534V79.7H532zM538 76.3H540V79.7H538z"/>
<path fill="#ff5000" d="M248 76.3H250V79.7H248zM254 76.3H256V79.7H254zM534 76.3H538V79.7H534zM540 76.3H542V79.7H540z"/>
<path fill="#ff1b00" d="M242 76.3H244V79.7H242z"/>
<path fill="#ff0000" d="M244 72.4H246V76.3H244zM244 76.3H246V79.7H244z"/>
<path fill="#8000ff" d="M391 301.4H392V303.8H391zM409 301.4H410V303.8H409zM412 301.4H413V303.8H412zM418 301.4H419V303.8H418zM424 301.4H425V303.8H424zM428 301.4H429V303.8H428zM433 301.4H435V303.8H433zM441 301.4H442V303.8H441zM403 303.8H404V306.21H403zM407 303.8H408V306.21H407zM411 303.8H412V306.21H411zM417 303.8H419V306.21H417zM420 303.8H421V306.21H420zM429 303.8H430V306.21H429zM434 303.8H435V306.21H434zM440 303.8H441V306.21H440zM392 306.21H393V308.61H392zM398 306.21H399V308.61H398zM403 306.21H404V308.61H403zM405 306.21H406V308.61H405zM420 306.21H421V308.61H420zM425 306.21H426V308.61H425zM429 306.21H431V308.61H429zM442 306.21H443V308.61H442zM392 308.61H393V311.01H392zM398 308.61H399V311.01H398zM401 308.61H402V311.01H401zM408 308.61H410V311.01H408zM413 308.61H414V311.01H413zM427 308.61H428V311.01H427zM437 308.61H438V311.01H437zM444 308.61H445V311.01H444zM394 311.01H395V313.42H394zM396 311.01H397V313.42H396zM411 311.01H412V313.42H411zM413 311.01H414V313.42H413zM424 311.01H426V313.42H424zM430 311.01H431V313.42H430zM406 313.42H407V315.82H406zM408 313.42H409V315.82H408zM414 313.42H415V315.82H414zM431 313.42H432V315.82H431zM435 313.42H436V315.82H435zM445 313.42H446V315.82H445zM393 315.82H394V318.22H393zM401 315.82H402V318.22H401zM410 315.82H411V318.22H410zM421 315.82H422V318.22H421zM423 315.82H424V318.22H423zM430 315.82H431V318.22H430zM396 318.22H397V320.63H396zM401 318.22H402V320.63H401zM408 318.22H409V320.63H408zM424 318.22H426V320.63H424zM428 318.22H429V320.63H428zM433 318.22H435V320.63H433zM442 318.22H443V320.63H442zM394 320.63H395V323.03H394zM407 320.63H408V323.03H407zM412 320.63H413V323.03H412zM431 320.63H432V323.03H431zM437 320.63H438V323.03H437zM392 323.03H393V325.44H392zM397 323.03H398V325.44H397zM405 323.03H406V325.44H405zM417 323.03H418V325.44H417zM436 323.03H437V325.44H436zM441 323.03H442V325.44H441zM393 325.44H394V327.84H393zM412 325.44H413V327.84H412zM419 325.44H420V327.84H419zM426 325.44H427V327.84H426zM432 325.44H433V327.84H432zM437 325.44H438V327.84H437zM391 327.84H393V330.24H391zM397 327.84H398V330.24H397zM399 327.84H400V330.24H399zM403 327.84H404V330.24H403zM406 327.84H407V330.24H406zM410 327.84H411V330.24H410zM434 327.84H435V330.24H434zM445 327.84H446V330.24H445zM389 330.24H390V332.65H389zM395 330.24H396V332.65H395zM398 330.24H399V332.65H398zM415 330.24H416V332.65H415zM442 330.24H443V332.65H442zM392 332.65H393V335.05H392zM403 332.65H404V335.05H403zM413 332.65H414V335.05H413zM430 332.65H431V335.05H430zM434 332.65H435V335.05H434zM442 332.65H444V335.05H442zM397 335.05H398V337.45H397zM415 335.05H416V337.45H415zM426 335.05H427V337.45H426zM429 335.05H430V337.45H429zM434 335.05H437V337.45H434zM444 335.05H445V337.45H444zM411 337.45H412V339.86H411zM438 337.45H439V339.86H438zM445 337.45H446V339.86H445zM416 339.86H417V342.26H416zM427 339.86H428V342.26H427zM431 339.86H432V342.26H431zM439 339.86H440V342.26H439zM401 342.26H402V344.66H401zM403 342.26H404V344.66H403zM407 342.26H408V344.66H407zM421 342.26H422V344.66H421zM426 342.26H427V344.66H426zM439 342.26H440V344.66H439zM442 342.26H443V344.66H442zM399 344.66H400V347.07H399zM409 344.66H410V347.07H409zM417 344.66H418V347.07H417zM438 344.66H439V347.07H438zM389 347.07H390V349.47H389zM407 347.07H408V349.47H407zM436 347.07H437V349.47H436zM442 347.07H443V349.47H442zM445 347.07H446V349.47H445zM391 349.47H392V351.88H391zM411 349.47H412V351.88H411zM414 349.47H415V351.88H414zM417 349.47H418V351.88H417zM421 349.47H422V351.88H421zM423 349.47H424V351.88H423zM431 349.47H432V351.88H431zM434 349.47H435V351.88H434zM397 351.88H398V354.28H397zM405 351.88H406V354.28H405zM415 351.88H416V354.28H415zM417 351.88H418V354.28H417zM420 351.88H421V354.28H420zM426 351.88H428V354.28H426zM392 354.28H393V356.68H392zM397 354.28H398V356.68H397zM400 354.28H401V356.68H400zM408 354.28H409V356.68H408zM422 354.28H423V356.68H422zM434 354.28H435V356.68H434zM442 354.28H443V356.68H442zM393 356.68H395V359.09H393zM412 356.68H413V359.09H412zM433 356.68H434V359.09H433zM403 359.09H404V361.49H403zM409 359.09H410V361.49H409zM411 359.09H412V361.49H411zM414 359.09H415V361.49H414zM431 359.09H432V361.49H431zM396 361.49H397V363.89H396zM398 361.49H399V363.89H398zM407 361.49H408V363.89H407zM414 361.49H415V363.89H414zM420 361.49H421V363.89H420zM435 361.49H436V363.89H435zM439 361.49H440V363.89H439zM443 361.49H444V363.89H443zM447 361.49H451V363.89H447zM454 361.49H455V363.89H454zM456 361.49H457V363.89H456zM467 361.49H468V363.89H467zM469 361.49H470V363.89H469zM471 361.49H472V363.89H471zM389 363.89H390V366.3H389zM394 363.89H396V366.3H394zM400 363.89H401V366.3H400zM406 363.89H407V366.3H406zM411 363.89H412V366.3H411zM420 363.89H421V366.3H420zM423 363.89H424V366.3H423zM425 363.89H426V366.3H425zM434 363.89H436V366.3H434zM439 363.89H440V366.3H439zM441 363.89H443V366.3H441zM451 363.89H453V366.3H451zM459 363.89H460V366.3H459zM468 363.89H470V366.3H468zM394 366.3H395V368.7H394zM403 366.3H404V368.7H403zM417 366.3H419V368.7H417zM420 366.3H421V368.7H420zM440 366.3H441V368.7H440zM445 366.3H446V368.7H445zM453 366.3H454V368.7H453zM390 368.7H392V391.8H390zM399 368.7H400V391.8H399zM406 368.7H409V391.8H406zM419 368.7H420V391.8H419zM421 368.7H422V391.8H421zM425 368.7H427V391.8H425zM430 368.7H431V391.8H430zM438 368.7H440V391.8H438zM441 368.7H442V391.8H441zM444 368.7H445V391.8H444z"/>
<path fill="#7300ff" d="M392 301.4H393V303.8H392zM403 301.4H404V303.8H403zM417 301.4H418V303.8H417zM426 301.4H427V303.8H426zM435 301.4H437V303.8H435zM439 301.4H440V303.8H439zM390 303.8H391V306.21H390zM398 303.8H399V306.21H398zM405 303.8H406V306.21H405zM410 303.8H411V306.21H410zM412 303.8H413V306.21H412zM423 303.8H425V306.21H423zM436 303.8H437V306.21H436zM441 303.8H442V306.21H441zM397 306.21H398V308.61H397zM409 306.21H410V308.61H409zM415 306.21H416V308.61H415zM441 306.21H442V308.61H441zM393 308.61H394V311.01H393zM403 308.61H404V311.01H403zM406 308.61H407V311.01H406zM421 308.61H423V311.01H421zM424 308.61H425V311.01H424zM426 308.61H427V311.01H426zM445 308.61H446V311.01H445zM397 311.01H398V313.42H397zM406 311.01H407V313.42H406zM421 311.01H422V313.42H421zM427 311.01H428V313.42H427zM429 311.01H430V313.42H429zM432 311.01H433V313.42H432zM434 311.01H436V313.42H434zM438 311.01H439V313.42H438zM442 311.01H443V313.42H442zM394 313.42H396V315.82H394zM397 313.42H398V315.82H397zM400 313.42H401V315.82H400zM413 313.42H414V315.82H413zM419 313.42H420V315.82H419zM424 313.42H425V315.82H424zM434 313.42H435V315.82H434zM438 313.42H440V315.82H438zM442 313.42H443V315.82H442zM444 313.42H445V315.82H444zM397 315.82H398V318.22H397zM417 315.82H418V318.22H417zM433 315.82H434V318.22H433zM438 315.82H439V318.22H438zM443 315.82H444V318.22H443zM390 318.22H391V320.63H390zM397 318.22H398V320.63H397zM404 318.22H405V320.63H404zM411 318.22H412V320.63H411zM417 318.22H419V320.63H417zM436 318.22H437V320.63H436zM443 318.22H446V320.63H443zM389 320.63H390V323.03H389zM411 320.63H412V323.03H411zM417 320.63H420V323.03H417zM421 320.63H422V323.03H421zM432 320.63H433V323.03H432zM398 323.03H399V325.44H398zM400 323.03H401V325.44H400zM407 323.03H408V325.44H407zM411 323.03H412V325.44H411zM415 323.03H416V325.44H415zM420 323.03H421V325.44H420zM427 323.03H428V325.44H427zM429 323.03H430V325.44H429zM440 323.03H441V325.44H440zM442 323.03H443V325.44H442zM397 325.44H398V327.84H397zM407 325.44H408V327.84H407zM417 325.44H418V327.84H417zM421 325.44H422V327.84H421zM424 325.44H425V327.84H424zM444 325.44H445V327.84H444zM389 327.84H390V330.24H389zM413 327.84H415V330.24H413zM428 327.84H429V330.24H428zM443 327.84H444V330.24H443zM399 330.24H400V332.65H399zM405 330.24H406V332.65H405zM409 330.24H410V332.65H409zM416 330.24H417V332.65H416zM418 330.24H419V332.65H418zM439 330.24H440V332.65H439zM390 332.65H391V335.05H390zM394 332.65H395V335.05H394zM406 332.65H407V335.05H406zM410 332.65H412V335.05H410zM415 332.65H416V335.05H415zM423 332.65H424V335.05H423zM429 332.65H430V335.05H429zM431 332.65H432V335.05H431zM437 332.65H438V335.05H437zM414 335.05H415V337.45H414zM423 335.05H424V337.45H423zM428 335.05H429V337.45H428zM438 335.05H439V337.45H438zM393 337.45H394V339.86H393zM407 337.45H408V339.86H407zM419 337.45H420V339.86H419zM431 337.45H432V339.86H431zM437 337.45H438V339.86H437zM390 339.86H391V342.26H390zM394 339.86H395V342.26H394zM413 339.86H414V342.26H413zM423 339.86H424V342.26H423zM445 339.86H446V342.26H445zM391 342.26H393V344.66H391zM411 342.26H412V344.66H411zM415 342.26H416V344.66H415zM418 342.26H419V344.66H418zM429 342.26H430V344.66H429zM435 342.26H436V344.66H435zM438 342.26H439V344.66H438zM444 342.26H445V344.66H444zM393 344.66H394V347.07H393zM413 344.66H414V347.07H413zM435 344.66H436V347.07H435zM401 347.07H402V349.47H401zM411 347.07H412V349.47H411zM427 347.07H428V349.47H427zM430 347.07H431V349.47H430zM389 349.47H390V351.88H389zM400 349.47H401V351.88H400zM419 349.47H420V351.88H419zM428 349.47H429V351.88H428zM437 349.47H438V351.88H437zM439 349.47H440V351.88H439zM390 351.88H391V354.28H390zM411 351.88H412V354.28H411zM416 351.88H417V354.28H416zM431 351.88H432V354.28H431zM444 351.88H445V354.28H444zM393 354.28H394V356.68H393zM406 354.28H407V356.68H406zM413 354.28H414V356.68H413zM423 354.28H424V356.68H423zM392 356.68H393V359.09H392zM413 356.68H414V359.09H413zM420 356.68H421V359.09H420zM422 356.68H423V359.09H422zM431 356.68H432V359.09H431zM435 356.68H436V359.09H435zM391 359.09H392V361.49H391zM396 359.09H397V361.49H396zM429 359.09H431V361.49H429zM436 359.09H437V361.49H436zM438 359.09H439V361.49H438zM395 368.7H396V391.8H395zM417 368.7H418V391.8H417zM420 368.7H421V391.8H420zM422 368.7H424V391.8H422zM427 368.7H428V391.8H427zM443 368.7H444V391.8H443z"/>
<path fill="#6500ff" d="M446 301.4H447V303.8H446zM449 301.4H450V303.8H449zM451 301.4H452V303.8H451zM458 301.4H459V303.8H458zM464 301.4H465V303.8H464zM471 301.4H472V303.8H471zM449 303.8H450V306.21H449zM460 303.8H461V306.21H460zM467 303.8H468V306.21H467zM469 303.8H470V306.21H469zM447 306.21H448V308.61H447zM449 306.21H451V308.61H449zM457 306.21H458V308.61H457zM468 306.21H469V308.61H468zM470 306.21H471V308.61H470zM451 308.61H452V311.01H451zM453 308.61H454V311.01H453zM461 308.61H462V311.01H461zM465 308.61H466V311.01H465zM467 308.61H468V311.01H467zM471 308.61H472V311.01H471zM446 311.01H448V313.42H446zM450 311.01H451V313.42H450zM459 311.01H460V313.42H459zM468 311.01H469V313.42H468zM449 313.42H450V315.82H449zM452 313.42H453V315.82H452zM452 315.82H453V318.22H452zM456 315.82H458V318.22H456zM459 315.82H460V318.22H459zM459 318.22H460V320.63H459zM455 320.63H457V323.03H455zM460 320.63H461V323.03H460zM448 323.03H449V325.44H448zM451 323.03H452V325.44H451zM455 323.03H456V325.44H455zM458 323.03H459V325.44H458zM463 323.03H464V325.44H463zM468 323.03H469V325.44H468zM458 325.44H459V327.84H458zM458 327.84H459V330.24H458zM467 327.84H468V330.24H467zM447 330.24H448V332.65H447zM468 330.24H469V332.65H468zM447 332.65H448V335.05H447zM460 332.65H461V335.05H460zM465 332.65H466V335.05H465zM457 335.05H458V337.45H457zM459 337.45H460V339.86H459zM466 337.45H467V339.86H466zM447 339.86H448V342.26H447zM453 339.86H454V342.26H453zM458 339.86H459V342.26H458zM465 342.26H466V344.66H465zM468 342.26H469V344.66H468zM466 344.66H467V347.07H466zM447 347.07H448V349.47H447zM451 347.07H453V349.47H451zM466 347.07H467V349.47H466zM451 349.47H452V351.88H451zM450 351.88H451V354.28H450zM452 356.68H453V359.09H452zM455 356.68H456V359.09H455zM457 356.68H458V359.09H457zM466 356.68H467V359.09H466zM469 356.68H470V359.09H469zM466 359.09H467V361.49H466zM391 361.49H392V363.89H391zM408 361.49H409V363.89H408zM410 361.49H411V363.89H410zM412 361.49H413V363.89H412zM417 361.49H418V363.89H417zM426 361.49H427V363.89H426zM428 361.49H429V363.89H428zM430 361.49H431V363.89H430zM433 361.49H435V363.89H433zM436 361.49H437V363.89H436zM438 361.49H439V363.89H438zM440 361.49H441V363.89H440zM444 361.49H446V363.89H444zM459 361.49H460V363.89H459zM468 361.49H469V363.89H468zM391 363.89H393V366.3H391zM402 363.89H403V366.3H402zM408 363.89H409V366.3H408zM414 363.89H415V366.3H414zM416 363.89H417V366.3H416zM419 363.89H420V366.3H419zM421 363.89H422V366.3H421zM429 363.89H430V366.3H429zM446 363.89H447V366.3H446zM455 363.89H456V366.3H455zM458 363.89H459V366.3H458zM462 363.89H463V366.3H462zM467 363.89H468V366.3H467zM389 366.3H390V368.7H389zM395 366.3H396V368.7H395zM402 366.3H403V368.7H402zM406 366.3H407V368.7H406zM411 366.3H412V368.7H411zM415 366.3H416V368.7H415zM423 366.3H424V368.7H423zM425 366.3H426V368.7H425zM427 366.3H428V368.7H427zM435 366.3H436V368.7H435zM444 366.3H445V368.7H444zM449 366.3H450V368.7H449zM455 366.3H456V368.7H455zM459 366.3H460V368.7H459zM463 366.3H465V368.7H463zM467 366.3H468V368.7H467zM469 366.3H470V368.7H469zM471 366.3H472V368.7H471zM389 368.7H390V391.8H389zM396 368.7H397V391.8H396zM413 368.7H414V391.8H413zM415 368.7H416V391.8H415zM418 368.7H419V391.8H418zM442 368.7H443V391.8H442z"/>
<path fill="#4b00ff" d="M393 301.4H394V303.8H393zM395 301.4H396V303.8H395zM399 301.4H400V303.8H399zM401 301.4H402V303.8H401zM404 301.4H405V303.8H404zM410 301.4H411V303.8H410zM427 301.4H428V303.8H427zM431 301.4H432V303.8H431zM438 301.4H439V303.8H438zM440 301.4H441V303.8H440zM443 301.4H444V303.8H443zM389 303.8H390V306.21H389zM393 303.8H394V306.21H393zM400 303.8H401V306.21H400zM408 303.8H409V306.21H408zM413 303.8H414V306.21H413zM416 303.8H417V306.21H416zM421 303.8H423V306.21H421zM426 303.8H427V306.21H426zM430 303.8H431V306.21H430zM432 303.8H434V306.21H432zM435 303.8H436V306.21H435zM442 303.8H444V306.21H442zM401 306.21H403V308.61H401zM408 306.21H409V308.61H408zM410 306.21H412V308.61H410zM418 306.21H420V308.61H418zM426 306.21H428V308.61H426zM431 306.21H432V308.61H431zM434 306.21H435V308.61H434zM436 306.21H437V308.61H436zM444 306.21H445V308.61H444zM394 308.61H395V311.01H394zM396 308.61H397V311.01H396zM402 308.61H403V311.01H402zM404 308.61H405V311.01H404zM417 308.61H418V311.01H417zM435 308.61H436V311.01H435zM439 308.61H440V311.01H439zM443 308.61H444V311.01H443zM395 311.01H396V313.42H395zM398 311.01H399V313.42H398zM400 311.01H401V313.42H400zM403 311.01H404V313.42H403zM407 311.01H408V313.42H407zM416 311.01H417V313.42H416zM420 311.01H421V313.42H420zM422 311.01H424V313.42H422zM437 311.01H438V313.42H437zM390 313.42H391V315.82H390zM407 313.42H408V315.82H407zM409 313.42H410V315.82H409zM415 313.42H417V315.82H415zM418 313.42H419V315.82H418zM420 313.42H421V315.82H420zM422 313.42H423V315.82H422zM425 313.42H426V315.82H425zM429 313.42H431V315.82H429zM432 313.42H433V315.82H432zM437 313.42H438V315.82H437zM443 313.42H444V315.82H443zM391 315.82H392V318.22H391zM398 315.82H399V318.22H398zM436 315.82H437V318.22H436zM439 315.82H440V318.22H439zM442 315.82H443V318.22H442zM393 318.22H394V320.63H393zM413 318.22H414V320.63H413zM416 318.22H417V320.63H416zM419 318.22H420V320.63H419zM431 318.22H432V320.63H431zM437 318.22H438V320.63H437zM439 318.22H440V320.63H439zM398 320.63H399V323.03H398zM404 320.63H405V323.03H404zM422 320.63H423V323.03H422zM424 320.63H425V323.03H424zM426 320.63H427V323.03H426zM428 320.63H429V323.03H428zM435 320.63H436V323.03H435zM444 320.63H445V323.03H444zM393 323.03H395V325.44H393zM409 323.03H410V325.44H409zM437 323.03H438V325.44H437zM389 325.44H390V327.84H389zM398 325.44H399V327.84H398zM400 325.44H401V327.84H400zM422 325.44H423V327.84H422zM428 325.44H429V327.84H428zM438 325.44H439V327.84H438zM440 325.44H441V327.84H440zM405 327.84H406V330.24H405zM419 327.84H420V330.24H419zM393 330.24H394V332.65H393zM397 330.24H398V332.65H397zM407 330.24H408V332.65H407zM414 330.24H415V332.65H414zM419 330.24H421V332.65H419zM422 330.24H424V332.65H422zM434 330.24H436V332.65H434zM443 330.24H446V332.65H443zM395 332.65H396V335.05H395zM397 332.65H398V335.05H397zM399 332.65H400V335.05H399zM405 332.65H406V335.05H405zM408 332.65H409V335.05H408zM414 332.65H415V335.05H414zM416 332.65H417V335.05H416zM439 332.65H440V335.05H439zM391 335.05H392V337.45H391zM402 335.05H403V337.45H402zM404 335.05H405V337.45H404zM427 335.05H428V337.45H427zM399 337.45H400V339.86H399zM404 337.45H405V339.86H404zM415 337.45H416V339.86H415zM391 339.86H392V342.26H391zM396 339.86H397V342.26H396zM417 339.86H420V342.26H417zM398 342.26H399V344.66H398zM410 342.26H411V344.66H410zM443 342.26H444V344.66H443zM445 342.26H446V344.66H445zM422 344.66H424V347.07H422zM395 347.07H396V349.47H395zM400 347.07H401V349.47H400zM410 347.07H411V349.47H410zM421 347.07H422V349.47H421zM393 349.47H394V351.88H393zM395 349.47H396V351.88H395zM397 349.47H398V351.88H397zM399 349.47H400V351.88H399zM403 349.47H405V351.88H403zM406 349.47H407V351.88H406zM438 349.47H439V351.88H438zM444 349.47H446V351.88H444zM407 351.88H408V354.28H407zM429 351.88H430V354.28H429zM435 351.88H436V354.28H435zM442 351.88H443V354.28H442zM389 354.28H390V356.68H389zM438 354.28H439V356.68H438zM403 356.68H404V359.09H403zM417 356.68H418V359.09H417zM434 356.68H435V359.09H434zM437 356.68H438V359.09H437zM390 359.09H391V361.49H390zM412 359.09H413V361.49H412zM417 359.09H418V361.49H417zM423 359.09H424V361.49H423zM437 359.09H438V361.49H437zM443 359.09H444V361.49H443zM445 359.09H446V361.49H445zM453 368.7H454V391.8H453zM457 368.7H458V391.8H457zM461 368.7H462V391.8H461zM472 368.7H473V391.8H472z"/>
<path fill="#3d00ff" d="M454 301.4H455V303.8H454zM456 301.4H457V303.8H456zM459 301.4H461V303.8H459zM463 301.4H464V303.8H463zM465 301.4H466V303.8H465zM468 301.4H469V303.8H468zM472 301.4H473V303.8H472zM447 303.8H448V306.21H447zM451 303.8H452V306.21H451zM456 303.8H457V306.21H456zM462 303.8H463V306.21H462zM468 303.8H469V306.21H468zM446 306.21H447V308.61H446zM453 306.21H454V308.61H453zM455 306.21H456V308.61H455zM458 306.21H459V308.61H458zM460 306.21H461V308.61H460zM471 306.21H472V308.61H471zM448 308.61H449V311.01H448zM450 308.61H451V311.01H450zM452 308.61H453V311.01H452zM454 308.61H455V311.01H454zM456 308.61H457V311.01H456zM460 308.61H461V311.01H460zM462 308.61H464V311.01H462zM470 308.61H471V311.01H470zM461 311.01H462V313.42H461zM469 311.01H470V313.42H469zM447 313.42H448V315.82H447zM451 313.42H452V315.82H451zM462 313.42H463V315.82H462zM465 313.42H466V315.82H465zM468 313.42H470V315.82H468zM471 313.42H472V315.82H471zM448 315.82H449V318.22H448zM468 315.82H469V318.22H468zM446 318.22H447V320.63H446zM448 318.22H449V320.63H448zM455 318.22H456V320.63H455zM465 318.22H467V320.63H465zM472 318.22H473V320.63H472zM446 320.63H449V323.03H446zM468 320.63H469V323.03H468zM471 320.63H472V323.03H471zM454 323.03H455V325.44H454zM457 323.03H458V325.44H457zM459 323.03H461V325.44H459zM447 325.44H448V327.84H447zM450 325.44H451V327.84H450zM453 325.44H454V327.84H453zM464 325.44H465V327.84H464zM467 325.44H468V327.84H467zM470 325.44H471V327.84H470zM450 327.84H451V330.24H450zM460 327.84H461V330.24H460zM466 327.84H467V330.24H466zM452 330.24H454V332.65H452zM457 330.24H458V332.65H457zM467 330.24H468V332.65H467zM457 332.65H458V335.05H457zM459 335.05H460V337.45H459zM466 335.05H467V337.45H466zM447 337.45H448V339.86H447zM460 337.45H461V339.86H460zM466 339.86H467V342.26H466zM468 339.86H469V342.26H468zM452 342.26H453V344.66H452zM457 342.26H458V344.66H457zM468 344.66H469V347.07H468zM460 347.07H461V349.47H460zM468 347.07H469V349.47H468zM465 349.47H466V351.88H465zM467 349.47H468V351.88H467zM459 351.88H461V354.28H459zM467 351.88H468V354.28H467zM447 354.28H448V356.68H447zM455 354.28H456V356.68H455zM465 354.28H467V356.68H465zM446 356.68H447V359.09H446zM458 356.68H459V359.09H458zM471 356.68H473V359.09H471zM448 359.09H449V361.49H448zM451 359.09H452V361.49H451zM389 361.49H390V363.89H389zM392 361.49H393V363.89H392zM394 361.49H395V363.89H394zM401 361.49H402V363.89H401zM413 361.49H414V363.89H413zM423 361.49H426V363.89H423zM442 361.49H443V363.89H442zM396 363.89H397V366.3H396zM398 363.89H399V366.3H398zM403 363.89H404V366.3H403zM405 363.89H406V366.3H405zM413 363.89H414V366.3H413zM417 363.89H418V366.3H417zM424 363.89H425V366.3H424zM440 363.89H441V366.3H440zM461 363.89H462V366.3H461zM463 363.89H464V366.3H463zM392 366.3H393V368.7H392zM398 366.3H399V368.7H398zM404 366.3H405V368.7H404zM407 366.3H408V368.7H407zM410 366.3H411V368.7H410zM414 366.3H415V368.7H414zM416 366.3H417V368.7H416zM424 366.3H425V368.7H424zM429 366.3H430V368.7H429zM438 366.3H439V368.7H438zM441 366.3H442V368.7H441zM397 368.7H398V391.8H397zM402 368.7H403V391.8H402zM409 368.7H412V391.8H409zM416 368.7H417V391.8H416zM429 368.7H430V391.8H429zM431 368.7H434V391.8H431zM436 368.7H438V391.8H436zM445 368.7H446V391.8H445z"/>
<path fill="#3000ff" d="M449 327.84H450V330.24H449zM425 330.24H426V332.65H425zM470 354.28H471V356.68H470zM454 368.7H455V391.8H454zM462 368.7H463V391.8H462z"/>
<path fill="#2300ff" d="M390 301.4H391V303.8H390zM396 301.4H397V303.8H396zM407 301.4H408V303.8H407zM413 301.4H414V303.8H413zM422 301.4H423V303.8H422zM432 301.4H433V303.8H432zM442 301.4H443V303.8H442zM394 303.8H395V306.21H394zM397 303.8H398V306.21H397zM409 303.8H410V306.21H409zM425 303.8H426V306.21H425zM428 303.8H429V306.21H428zM431 303.8H432V306.21H431zM444 303.8H446V306.21H444zM389 306.21H390V308.61H389zM396 306.21H397V308.61H396zM407 306.21H408V308.61H407zM413 306.21H414V308.61H413zM416 306.21H417V308.61H416zM421 306.21H423V308.61H421zM428 308.61H430V311.01H428zM432 308.61H433V311.01H432zM441 308.61H442V311.01H441zM391 311.01H393V313.42H391zM402 311.01H403V313.42H402zM404 311.01H405V313.42H404zM433 311.01H434V313.42H433zM436 311.01H437V313.42H436zM392 313.42H393V315.82H392zM406 315.82H407V318.22H406zM408 315.82H409V318.22H408zM418 315.82H419V318.22H418zM424 315.82H427V318.22H424zM437 315.82H438V318.22H437zM394 318.22H395V320.63H394zM405 318.22H407V320.63H405zM420 318.22H422V320.63H420zM427 318.22H428V320.63H427zM430 318.22H431V320.63H430zM432 318.22H433V320.63H432zM391 320.63H393V323.03H391zM395 320.63H396V323.03H395zM399 320.63H400V323.03H399zM416 320.63H417V323.03H416zM420 320.63H421V323.03H420zM427 320.63H428V323.03H427zM430 320.63H431V323.03H430zM442 320.63H443V323.03H442zM391 323.03H392V325.44H391zM414 323.03H415V325.44H414zM419 323.03H420V325.44H419zM422 323.03H423V325.44H422zM428 323.03H429V325.44H428zM431 323.03H433V325.44H431zM434 323.03H435V325.44H434zM438 323.03H439V325.44H438zM444 323.03H445V325.44H444zM399 325.44H400V327.84H399zM403 325.44H404V327.84H403zM405 325.44H406V327.84H405zM411 325.44H412V327.84H411zM418 325.44H419V327.84H418zM420 325.44H421V327.84H420zM431 325.44H432V327.84H431zM443 325.44H444V327.84H443zM402 327.84H403V330.24H402zM407 327.84H408V330.24H407zM411 327.84H412V330.24H411zM418 327.84H419V330.24H418zM431 327.84H432V330.24H431zM436 327.84H437V330.24H436zM444 327.84H445V330.24H444zM392 330.24H393V332.65H392zM402 330.24H403V332.65H402zM404 330.24H405V332.65H404zM406 330.24H407V332.65H406zM410 330.24H411V332.65H410zM427 330.24H429V332.65H427zM430 330.24H431V332.65H430zM432 330.24H433V332.65H432zM436 330.24H437V332.65H436zM393 332.65H394V335.05H393zM412 332.65H413V335.05H412zM421 332.65H423V335.05H421zM438 332.65H439V335.05H438zM445 332.65H446V335.05H445zM410 335.05H411V337.45H410zM418 335.05H419V337.45H418zM431 335.05H432V337.45H431zM396 337.45H397V339.86H396zM408 337.45H409V339.86H408zM412 337.45H413V339.86H412zM414 337.45H415V339.86H414zM389 339.86H390V342.26H389zM393 339.86H394V342.26H393zM400 339.86H401V342.26H400zM408 339.86H409V342.26H408zM411 339.86H412V342.26H411zM429 339.86H430V342.26H429zM434 339.86H435V342.26H434zM436 339.86H439V342.26H436zM443 339.86H444V342.26H443zM430 342.26H431V344.66H430zM396 344.66H397V347.07H396zM419 344.66H420V347.07H419zM436 344.66H437V347.07H436zM442 344.66H444V347.07H442zM390 347.07H391V349.47H390zM393 347.07H395V349.47H393zM404 347.07H405V349.47H404zM428 347.07H429V349.47H428zM431 347.07H432V349.47H431zM434 347.07H435V349.47H434zM418 349.47H419V351.88H418zM422 349.47H423V351.88H422zM430 349.47H431V351.88H430zM403 351.88H404V354.28H403zM412 351.88H413V354.28H412zM418 351.88H419V354.28H418zM436 351.88H437V354.28H436zM438 351.88H439V354.28H438zM394 354.28H395V356.68H394zM405 354.28H406V356.68H405zM417 354.28H419V356.68H417zM429 354.28H430V356.68H429zM437 354.28H438V356.68H437zM469 354.28H470V356.68H469zM391 356.68H392V359.09H391zM398 356.68H399V359.09H398zM405 356.68H406V359.09H405zM407 356.68H408V359.09H407zM409 356.68H410V359.09H409zM411 356.68H412V359.09H411zM419 356.68H420V359.09H419zM424 356.68H425V359.09H424zM438 356.68H439V359.09H438zM441 356.68H442V359.09H441zM445 356.68H446V359.09H445zM393 359.09H394V361.49H393zM402 359.09H403V361.49H402zM404 359.09H406V361.49H404zM420 359.09H422V361.49H420zM434 359.09H435V361.49H434zM444 359.09H445V361.49H444z"/>
<path fill="#1500ff" d="M457 301.4H458V303.8H457zM469 301.4H470V303.8H469zM450 303.8H451V306.21H450zM453 303.8H455V306.21H453zM458 303.8H459V306.21H458zM463 303.8H466V306.21H463zM470 303.8H471V306.21H470zM463 306.21H464V308.61H463zM466 306.21H467V308.61H466zM446 308.61H447V311.01H446zM459 308.61H460V311.01H459zM464 308.61H465V311.01H464zM448 311.01H449V313.42H448zM456 311.01H457V313.42H456zM455 313.42H456V315.82H455zM450 315.82H451V318.22H450zM453 315.82H454V318.22H453zM455 315.82H456V318.22H455zM465 315.82H466V318.22H465zM450 318.22H451V320.63H450zM460 318.22H462V320.63H460zM464 318.22H465V320.63H464zM469 318.22H470V320.63H469zM459 320.63H460V323.03H459zM463 320.63H465V323.03H463zM467 320.63H468V323.03H467zM446 323.03H447V325.44H446zM452 323.03H453V325.44H452zM465 323.03H466V325.44H465zM454 325.44H455V327.84H454zM460 325.44H462V327.84H460zM463 325.44H464V327.84H463zM472 325.44H473V327.84H472zM432 327.84H433V330.24H432zM451 327.84H452V330.24H451zM455 327.84H456V330.24H455zM463 327.84H465V330.24H463zM472 327.84H473V330.24H472zM446 330.24H447V332.65H446zM461 330.24H462V332.65H461zM452 335.05H453V337.45H452zM460 335.05H461V337.45H460zM468 335.05H469V337.45H468zM457 337.45H458V339.86H457zM459 339.86H460V342.26H459zM465 339.86H466V342.26H465zM446 342.26H447V344.66H446zM451 342.26H452V344.66H451zM458 342.26H459V344.66H458zM446 344.66H447V347.07H446zM461 347.07H462V349.47H461zM458 349.47H459V351.88H458zM460 349.47H461V351.88H460zM466 349.47H467V351.88H466zM424 351.88H425V354.28H424zM448 351.88H449V354.28H448zM453 351.88H454V354.28H453zM457 351.88H458V354.28H457zM448 354.28H450V356.68H448zM451 354.28H453V356.68H451zM459 354.28H460V356.68H459zM448 356.68H449V359.09H448zM465 356.68H466V359.09H465zM453 359.09H454V361.49H453zM455 359.09H457V361.49H455zM462 359.09H463V361.49H462zM470 359.09H471V361.49H470zM398 368.7H399V391.8H398zM412 368.7H413V391.8H412zM414 368.7H415V391.8H414zM428 368.7H429V391.8H428zM440 368.7H441V391.8H440zM451 368.7H453V391.8H451zM456 368.7H457V391.8H456zM458 368.7H459V391.8H458zM468 368.7H469V391.8H468z"/>
<path fill="#0800ff" d="M394 301.4H395V303.8H394zM400 301.4H401V303.8H400zM406 301.4H407V303.8H406zM408 301.4H409V303.8H408zM416 301.4H417V303.8H416zM421 301.4H422V303.8H421zM430 301.4H431V303.8H430zM437 301.4H438V303.8H437zM445 301.4H446V303.8H445zM396 303.8H397V306.21H396zM399 303.8H400V306.21H399zM402 303.8H403V306.21H402zM404 303.8H405V306.21H404zM439 303.8H440V306.21H439zM390 306.21H391V308.61H390zM393 306.21H395V308.61H393zM404 306.21H405V308.61H404zM406 306.21H407V308.61H406zM417 306.21H418V308.61H417zM435 306.21H436V308.61H435zM438 306.21H439V308.61H438zM440 306.21H441V308.61H440zM445 306.21H446V308.61H445zM390 308.61H392V311.01H390zM397 308.61H398V311.01H397zM407 308.61H408V311.01H407zM410 308.61H413V311.01H410zM414 308.61H417V311.01H414zM430 308.61H431V311.01H430zM436 308.61H437V311.01H436zM438 308.61H439V311.01H438zM393 311.01H394V313.42H393zM408 311.01H409V313.42H408zM419 311.01H420V313.42H419zM439 311.01H441V313.42H439zM445 311.01H446V313.42H445zM389 313.42H390V315.82H389zM401 313.42H405V315.82H401zM412 313.42H413V315.82H412zM417 313.42H418V315.82H417zM421 313.42H422V315.82H421zM423 313.42H424V315.82H423zM427 313.42H428V315.82H427zM440 313.42H441V315.82H440zM389 315.82H390V318.22H389zM394 315.82H395V318.22H394zM402 315.82H403V318.22H402zM404 315.82H405V318.22H404zM407 315.82H408V318.22H407zM412 315.82H414V318.22H412zM431 315.82H432V318.22H431zM435 315.82H436V318.22H435zM392 318.22H393V320.63H392zM426 318.22H427V320.63H426zM429 318.22H430V320.63H429zM402 320.63H403V323.03H402zM409 320.63H411V323.03H409zM423 320.63H424V323.03H423zM433 320.63H434V323.03H433zM436 320.63H437V323.03H436zM439 320.63H440V323.03H439zM445 320.63H446V323.03H445zM396 323.03H397V325.44H396zM402 323.03H403V325.44H402zM408 323.03H409V325.44H408zM416 323.03H417V325.44H416zM418 323.03H419V325.44H418zM421 323.03H422V325.44H421zM426 323.03H427V325.44H426zM439 323.03H440V325.44H439zM391 325.44H393V327.84H391zM394 325.44H395V327.84H394zM406 325.44H407V327.84H406zM416 325.44H417V327.84H416zM430 325.44H431V327.84H430zM435 325.44H436V327.84H435zM390 327.84H391V330.24H390zM398 327.84H399V330.24H398zM401 327.84H402V330.24H401zM420 327.84H421V330.24H420zM425 327.84H426V330.24H425zM427 327.84H428V330.24H427zM439 327.84H440V330.24H439zM442 327.84H443V330.24H442zM456 327.84H457V330.24H456zM394 330.24H395V332.65H394zM400 330.24H401V332.65H400zM408 330.24H409V332.65H408zM433 330.24H434V332.65H433zM438 330.24H439V332.65H438zM440 330.24H441V332.65H440zM389 332.65H390V335.05H389zM391 332.65H392V335.05H391zM404 332.65H405V335.05H404zM420 332.65H421V335.05H420zM426 332.65H428V335.05H426zM436 332.65H437V335.05H436zM390 335.05H391V337.45H390zM394 335.05H395V337.45H394zM413 335.05H414V337.45H413zM419 335.05H420V337.45H419zM442 335.05H444V337.45H442zM395 337.45H396V339.86H395zM413 337.45H414V339.86H413zM416 337.45H417V339.86H416zM420 337.45H421V339.86H420zM423 337.45H424V339.86H423zM430 337.45H431V339.86H430zM435 337.45H436V339.86H435zM439 337.45H440V339.86H439zM443 337.45H444V339.86H443zM399 339.86H400V342.26H399zM404 342.26H405V344.66H404zM408 342.26H409V344.66H408zM427 342.26H429V344.66H427zM389 344.66H390V347.07H389zM398 344.66H399V347.07H398zM404 344.66H405V347.07H404zM410 344.66H411V347.07H410zM415 344.66H416V347.07H415zM409 347.07H410V349.47H409zM412 347.07H413V349.47H412zM418 347.07H420V349.47H418zM396 349.47H397V351.88H396zM402 349.47H403V351.88H402zM409 349.47H410V351.88H409zM413 349.47H414V351.88H413zM416 349.47H417V351.88H416zM429 349.47H430V351.88H429zM454 349.47H455V351.88H454zM400 351.88H401V354.28H400zM425 351.88H426V354.28H425zM430 351.88H431V354.28H430zM434 351.88H435V354.28H434zM439 351.88H440V354.28H439zM454 351.88H455V354.28H454zM403 354.28H404V356.68H403zM411 354.28H412V356.68H411zM414 354.28H415V356.68H414zM416 354.28H417V356.68H416zM421 354.28H422V356.68H421zM424 354.28H426V356.68H424zM428 354.28H429V356.68H428zM432 354.28H434V356.68H432zM389 356.68H390V359.09H389zM397 356.68H398V359.09H397zM399 356.68H401V359.09H399zM416 356.68H417V359.09H416zM426 356.68H427V359.09H426zM436 356.68H437V359.09H436zM440 356.68H441V359.09H440zM394 359.09H395V361.49H394zM400 359.09H402V361.49H400zM427 359.09H428V361.49H427zM439 359.09H440V361.49H439z"/>
<path fill="#000bff" d="M389 301.4H390V303.8H389zM397 301.4H399V303.8H397zM402 301.4H403V303.8H402zM405 301.4H406V303.8H405zM415 301.4H416V303.8H415zM420 301.4H421V303.8H420zM423 301.4H424V303.8H423zM425 301.4H426V303.8H425zM429 301.4H430V303.8H429zM447 301.4H448V303.8H447zM467 301.4H468V303.8H467zM391 303.8H393V306.21H391zM395 303.8H396V306.21H395zM406 303.8H407V306.21H406zM419 303.8H420V306.21H419zM452 303.8H453V306.21H452zM466 303.8H467V306.21H466zM471 303.8H472V306.21H471zM399 306.21H401V308.61H399zM423 306.21H424V308.61H423zM428 306.21H429V308.61H428zM432 306.21H434V308.61H432zM443 306.21H444V308.61H443zM448 306.21H449V308.61H448zM451 306.21H452V308.61H451zM454 306.21H455V308.61H454zM456 306.21H457V308.61H456zM459 306.21H460V308.61H459zM461 306.21H463V308.61H461zM464 306.21H466V308.61H464zM399 308.61H400V311.01H399zM405 308.61H406V311.01H405zM418 308.61H421V311.01H418zM433 308.61H435V311.01H433zM449 308.61H450V311.01H449zM466 308.61H467V311.01H466zM389 311.01H391V313.42H389zM401 311.01H402V313.42H401zM409 311.01H411V313.42H409zM412 311.01H413V313.42H412zM414 311.01H415V313.42H414zM417 311.01H419V313.42H417zM426 311.01H427V313.42H426zM444 311.01H445V313.42H444zM452 311.01H455V313.42H452zM457 311.01H458V313.42H457zM460 311.01H461V313.42H460zM464 311.01H465V313.42H464zM466 311.01H468V313.42H466zM470 311.01H471V313.42H470zM391 313.42H392V315.82H391zM393 313.42H394V315.82H393zM405 313.42H406V315.82H405zM433 313.42H434V315.82H433zM436 313.42H437V315.82H436zM441 313.42H442V315.82H441zM448 313.42H449V315.82H448zM453 313.42H454V315.82H453zM456 313.42H458V315.82H456zM459 313.42H461V315.82H459zM463 313.42H465V315.82H463zM472 313.42H473V315.82H472zM400 315.82H401V318.22H400zM405 315.82H406V318.22H405zM411 315.82H412V318.22H411zM420 315.82H421V318.22H420zM422 315.82H423V318.22H422zM434 315.82H435V318.22H434zM447 315.82H448V318.22H447zM460 315.82H461V318.22H460zM462 315.82H463V318.22H462zM466 315.82H467V318.22H466zM472 315.82H473V318.22H472zM389 318.22H390V320.63H389zM400 318.22H401V320.63H400zM402 318.22H403V320.63H402zM410 318.22H411V320.63H410zM414 318.22H415V320.63H414zM422 318.22H424V320.63H422zM452 318.22H453V320.63H452zM458 318.22H459V320.63H458zM462 318.22H464V320.63H462zM467 318.22H468V320.63H467zM396 320.63H397V323.03H396zM400 320.63H401V323.03H400zM403 320.63H404V323.03H403zM414 320.63H416V323.03H414zM440 320.63H442V323.03H440zM443 320.63H444V323.03H443zM449 320.63H450V323.03H449zM470 320.63H471V323.03H470zM390 323.03H391V325.44H390zM401 323.03H402V325.44H401zM410 323.03H411V325.44H410zM423 323.03H424V325.44H423zM425 323.03H426V325.44H425zM435 323.03H436V325.44H435zM443 323.03H444V325.44H443zM447 323.03H448V325.44H447zM449 323.03H450V325.44H449zM453 323.03H454V325.44H453zM464 323.03H465V325.44H464zM466 323.03H468V325.44H466zM470 323.03H471V325.44H470zM396 325.44H397V327.84H396zM413 325.44H415V327.84H413zM425 325.44H426V327.84H425zM427 325.44H428V327.84H427zM433 325.44H435V327.84H433zM436 325.44H437V327.84H436zM441 325.44H443V327.84H441zM445 325.44H447V327.84H445zM451 325.44H452V327.84H451zM455 325.44H456V327.84H455zM457 325.44H458V327.84H457zM462 325.44H463V327.84H462zM468 325.44H470V327.84H468zM471 325.44H472V327.84H471zM395 327.84H397V330.24H395zM400 327.84H401V330.24H400zM415 327.84H416V330.24H415zM422 327.84H423V330.24H422zM424 327.84H425V330.24H424zM429 327.84H431V330.24H429zM433 327.84H434V330.24H433zM441 327.84H442V330.24H441zM446 327.84H447V330.24H446zM459 327.84H460V330.24H459zM468 327.84H469V330.24H468zM396 330.24H397V332.65H396zM401 330.24H402V332.65H401zM403 330.24H404V332.65H403zM412 330.24H413V332.65H412zM421 330.24H422V332.65H421zM449 330.24H450V332.65H449zM456 330.24H457V332.65H456zM463 330.24H465V332.65H463zM396 332.65H397V335.05H396zM407 332.65H408V335.05H407zM435 332.65H436V335.05H435zM444 332.65H445V335.05H444zM453 332.65H454V335.05H453zM389 335.05H390V337.45H389zM392 335.05H393V337.45H392zM400 335.05H402V337.45H400zM417 335.05H418V337.45H417zM422 335.05H423V337.45H422zM437 335.05H438V337.45H437zM447 335.05H448V337.45H447zM467 335.05H468V337.45H467zM389 337.45H390V339.86H389zM391 337.45H392V339.86H391zM406 337.45H407V339.86H406zM410 337.45H411V339.86H410zM427 337.45H428V339.86H427zM444 337.45H445V339.86H444zM446 337.45H447V339.86H446zM450 337.45H451V339.86H450zM452 337.45H453V339.86H452zM461 337.45H462V339.86H461zM468 337.45H469V339.86H468zM401 339.86H402V342.26H401zM403 339.86H404V342.26H403zM405 339.86H407V342.26H405zM409 339.86H410V342.26H409zM430 339.86H431V342.26H430zM460 339.86H461V342.26H460zM389 342.26H390V344.66H389zM393 342.26H395V344.66H393zM397 342.26H398V344.66H397zM409 342.26H410V344.66H409zM417 342.26H418V344.66H417zM431 342.26H432V344.66H431zM437 342.26H438V344.66H437zM453 342.26H454V344.66H453zM459 342.26H461V344.66H459zM466 342.26H467V344.66H466zM390 344.66H391V347.07H390zM407 344.66H408V347.07H407zM414 344.66H415V347.07H414zM428 344.66H429V347.07H428zM444 344.66H445V347.07H444zM453 344.66H454V347.07H453zM458 344.66H459V347.07H458zM396 347.07H397V349.47H396zM402 347.07H404V349.47H402zM426 347.07H427V349.47H426zM429 347.07H430V349.47H429zM437 347.07H438V349.47H437zM444 347.07H445V349.47H444zM446 347.07H447V349.47H446zM458 347.07H460V349.47H458zM467 347.07H468V349.47H467zM392 349.47H393V351.88H392zM394 349.47H395V351.88H394zM401 349.47H402V351.88H401zM410 349.47H411V351.88H410zM424 349.47H427V351.88H424zM433 349.47H434V351.88H433zM435 349.47H437V351.88H435zM443 349.47H444V351.88H443zM453 349.47H454V351.88H453zM392 351.88H393V354.28H392zM396 351.88H397V354.28H396zM399 351.88H400V354.28H399zM413 351.88H415V354.28H413zM419 351.88H420V354.28H419zM423 351.88H424V354.28H423zM432 351.88H433V354.28H432zM446 351.88H447V354.28H446zM452 351.88H453V354.28H452zM462 351.88H463V354.28H462zM465 351.88H466V354.28H465zM398 354.28H400V356.68H398zM407 354.28H408V356.68H407zM415 354.28H416V356.68H415zM430 354.28H431V356.68H430zM444 354.28H446V356.68H444zM453 354.28H454V356.68H453zM457 354.28H458V356.68H457zM460 354.28H463V356.68H460zM423 356.68H424V359.09H423zM432 356.68H433V359.09H432zM454 356.68H455V359.09H454zM462 356.68H463V359.09H462zM397 359.09H399V361.49H397zM406 359.09H407V361.49H406zM410 359.09H411V361.49H410zM415 359.09H416V361.49H415zM435 359.09H436V361.49H435zM440 359.09H441V361.49H440zM449 359.09H451V361.49H449zM452 359.09H453V361.49H452zM457 359.09H458V361.49H457zM460 359.09H461V361.49H460zM465 359.09H466V361.49H465zM450 368.7H451V391.8H450zM455 368.7H456V391.8H455zM459 368.7H460V391.8H459zM463 368.7H465V391.8H463zM466 368.7H468V391.8H466zM469 368.7H472V391.8H469z"/>
<path fill="#0025ff" d="M440 327.84H441V330.24H440zM424 330.24H425V332.65H424zM441 330.24H442V332.65H441zM472 330.24H473V332.65H472zM464 332.65H465V335.05H464zM433 351.88H434V354.28H433zM441 351.88H442V354.28H441zM448 368.7H450V391.8H448zM460 368.7H461V391.8H460zM465 368.7H466V391.8H465z"/>
<path fill="#0040ff" d="M462 301.4H463V303.8H462zM466 301.4H467V303.8H466zM446 303.8H447V306.21H446zM457 303.8H458V306.21H457zM461 303.8H462V306.21H461zM472 303.8H473V306.21H472zM469 306.21H470V308.61H469zM447 308.61H448V311.01H447zM457 308.61H458V311.01H457zM451 311.01H452V313.42H451zM463 311.01H464V313.42H463zM450 313.42H451V315.82H450zM449 315.82H450V318.22H449zM454 315.82H455V318.22H454zM463 315.82H465V318.22H463zM469 315.82H471V318.22H469zM453 318.22H454V320.63H453zM405 320.63H406V323.03H405zM450 320.63H451V323.03H450zM454 320.63H455V323.03H454zM458 320.63H459V323.03H458zM461 320.63H462V323.03H461zM465 320.63H467V323.03H465zM469 320.63H470V323.03H469zM406 323.03H407V325.44H406zM461 323.03H463V325.44H461zM415 325.44H416V327.84H415zM449 325.44H450V327.84H449zM452 325.44H453V327.84H452zM456 325.44H457V327.84H456zM465 325.44H467V327.84H465zM408 327.84H409V330.24H408zM423 327.84H424V330.24H423zM447 327.84H448V330.24H447zM454 327.84H455V330.24H454zM457 327.84H458V330.24H457zM461 327.84H463V330.24H461zM470 327.84H472V330.24H470zM458 330.24H461V332.65H458zM462 330.24H463V332.65H462zM400 332.65H401V335.05H400zM418 332.65H419V335.05H418zM424 332.65H425V335.05H424zM441 332.65H442V335.05H441zM446 332.65H447V335.05H446zM451 332.65H453V335.05H451zM459 332.65H460V335.05H459zM407 335.05H408V337.45H407zM421 335.05H422V337.45H421zM451 335.05H452V337.45H451zM458 335.05H459V337.45H458zM461 335.05H462V337.45H461zM465 337.45H466V339.86H465zM415 339.86H416V342.26H415zM420 339.86H421V342.26H420zM446 339.86H447V342.26H446zM452 339.86H453V342.26H452zM396 342.26H397V344.66H396zM416 342.26H417V344.66H416zM424 342.26H425V344.66H424zM450 342.26H451V344.66H450zM461 342.26H462V344.66H461zM447 344.66H448V347.07H447zM461 344.66H462V347.07H461zM397 347.07H398V349.47H397zM406 347.07H407V349.47H406zM416 347.07H417V349.47H416zM450 347.07H451V349.47H450zM453 347.07H454V349.47H453zM452 349.47H453V351.88H452zM461 349.47H463V351.88H461zM449 351.88H450V354.28H449zM451 351.88H452V354.28H451zM458 351.88H459V354.28H458zM463 351.88H465V354.28H463zM468 351.88H469V354.28H468zM440 354.28H441V356.68H440zM446 354.28H447V356.68H446zM450 354.28H451V356.68H450zM463 354.28H465V356.68H463zM472 354.28H473V356.68H472zM450 356.68H451V359.09H450zM467 356.68H469V359.09H467zM470 356.68H471V359.09H470zM459 359.09H460V361.49H459zM463 359.09H465V361.49H463z"/>
<path fill="#005aff" d="M448 327.84H449V330.24H448zM433 332.65H434V335.05H433zM425 335.05H426V337.45H425zM469 347.07H470V349.47H469zM440 349.47H441V351.88H440zM440 351.88H441V354.28H440zM469 351.88H470V354.28H469zM456 354.28H457V356.68H456z"/>
<path fill="#0075ff" d="M448 301.4H449V303.8H448zM450 301.4H451V303.8H450zM452 301.4H454V303.8H452zM455 301.4H456V303.8H455zM470 301.4H471V303.8H470zM448 303.8H449V306.21H448zM455 303.8H456V306.21H455zM459 303.8H460V306.21H459zM452 306.21H453V308.61H452zM467 306.21H468V308.61H467zM472 306.21H473V308.61H472zM455 308.61H456V311.01H455zM458 308.61H459V311.01H458zM468 308.61H469V311.01H468zM472 308.61H473V311.01H472zM449 311.01H450V313.42H449zM455 311.01H456V313.42H455zM458 311.01H459V313.42H458zM465 311.01H466V313.42H465zM471 311.01H473V313.42H471zM461 313.42H462V315.82H461zM466 313.42H468V315.82H466zM470 313.42H471V315.82H470zM446 315.82H447V318.22H446zM451 315.82H452V318.22H451zM461 315.82H462V318.22H461zM467 315.82H468V318.22H467zM471 315.82H472V318.22H471zM447 318.22H448V320.63H447zM454 318.22H455V320.63H454zM468 318.22H469V320.63H468zM470 318.22H472V320.63H470zM452 320.63H454V323.03H452zM457 320.63H458V323.03H457zM472 320.63H473V323.03H472zM450 323.03H451V325.44H450zM456 323.03H457V325.44H456zM471 323.03H473V325.44H471zM452 327.84H454V330.24H452zM448 330.24H449V332.65H448zM450 330.24H452V332.65H450zM454 330.24H456V332.65H454zM465 330.24H467V332.65H465zM471 330.24H472V332.65H471zM450 332.65H451V335.05H450zM456 332.65H457V335.05H456zM458 332.65H459V335.05H458zM461 332.65H462V335.05H461zM466 332.65H469V335.05H466zM472 332.65H473V335.05H472zM446 335.05H447V337.45H446zM453 337.45H454V339.86H453zM450 339.86H451V342.26H450zM461 339.86H462V342.26H461zM467 339.86H468V342.26H467zM447 342.26H448V344.66H447zM451 344.66H453V347.07H451zM457 344.66H458V347.07H457zM459 344.66H461V347.07H459zM465 344.66H466V347.07H465zM424 347.07H425V349.47H424zM457 347.07H458V349.47H457zM465 347.07H466V349.47H465zM447 349.47H448V351.88H447zM449 349.47H450V351.88H449zM459 349.47H460V351.88H459zM455 351.88H457V354.28H455zM461 351.88H462V354.28H461zM470 351.88H472V354.28H470zM441 354.28H442V356.68H441zM454 354.28H455V356.68H454zM458 354.28H459V356.68H458zM471 354.28H472V356.68H471zM456 356.68H457V359.09H456zM464 356.68H465V359.09H464zM461 359.09H462V361.49H461zM469 359.09H470V361.49H469zM471 359.09H473V361.49H471zM394 368.7H395V391.8H394zM400 368.7H402V391.8H400z"/>
<path fill="#008fff" d="M406 320.63H407V323.03H406zM413 320.63H414V323.03H413zM412 323.03H413V325.44H412zM395 325.44H396V327.84H395zM408 325.44H409V327.84H408zM404 327.84H405V330.24H404zM409 327.84H410V330.24H409zM469 327.84H470V330.24H469zM398 332.65H399V335.05H398zM401 332.65H402V335.05H401zM425 332.65H426V335.05H425zM463 332.65H464V335.05H463zM409 335.05H410V337.45H409zM414 342.26H415V344.66H414zM406 344.66H407V347.07H406zM408 347.07H409V349.47H408zM420 347.07H421V349.47H420zM454 347.07H455V349.47H454zM432 349.47H433V351.88H432zM456 349.47H457V351.88H456z"/>
<path fill="#00aaff" d="M470 330.24H471V332.65H470zM432 332.65H433V335.05H432zM440 332.65H441V335.05H440zM449 332.65H450V335.05H449zM449 335.05H450V337.45H449zM424 344.66H425V347.07H424zM440 347.07H441V349.47H440zM448 349.47H449V351.88H448zM455 349.47H456V351.88H455zM469 349.47H470V351.88H469z"/>
<path fill="#00c5ff" d="M441 349.47H442V351.88H441zM463 349.47H464V351.88H463zM470 349.47H471V351.88H470zM472 351.88H473V354.28H472z"/>
<path fill="#00dfff" d="M408 320.63H409V323.03H408zM404 323.03H405V325.44H404zM404 325.44H405V327.84H404zM409 325.44H410V327.84H409zM416 327.84H418V330.24H416zM419 332.65H420V335.05H419zM471 332.65H472V335.05H471zM396 335.05H397V337.45H396zM412 335.05H413V337.45H412zM433 335.05H434V337.45H433zM441 335.05H442V337.45H441zM464 335.05H465V337.45H464zM402 337.45H403V339.86H402zM417 337.45H418V339.86H417zM425 337.45H426V339.86H425zM395 339.86H396V342.26H395zM397 339.86H398V342.26H397zM421 339.86H422V342.26H421zM400 342.26H401V344.66H400zM412 342.26H414V344.66H412zM403 344.66H404V347.07H403zM412 344.66H413V347.07H412zM398 347.07H399V349.47H398zM432 347.07H433V349.47H432z"/>
<path fill="#00faff" d="M454 332.65H456V335.05H454zM462 332.65H463V335.05H462zM424 335.05H425V337.45H424zM440 335.05H441V337.45H440zM455 335.05H456V337.45H455zM433 347.07H434V349.47H433zM441 347.07H442V349.47H441zM448 347.07H449V349.47H448z"/>
<path fill="#00ffea" d="M469 330.24H470V332.65H469zM448 332.65H449V335.05H448zM456 335.05H457V337.45H456zM425 347.07H426V349.47H425zM462 347.07H463V349.47H462zM471 349.47H472V351.88H471z"/>
<path fill="#00ffcf" d="M472 335.05H473V337.45H472zM441 337.45H442V339.86H441z"/>
<path fill="#00ffb5" d="M424 337.45H425V339.86H424zM469 344.66H470V347.07H469zM463 347.07H464V349.47H463zM470 347.07H471V349.47H470zM464 349.47H465V351.88H464z"/>
<path fill="#00ff9a" d="M432 335.05H433V337.45H432zM448 335.05H449V337.45H448zM463 335.05H464V337.45H463zM471 335.05H472V337.45H471zM432 337.45H433V339.86H432zM464 337.45H465V339.86H464zM433 344.66H434V347.07H433zM454 344.66H455V347.07H454zM449 347.07H450V349.47H449zM455 347.07H456V349.47H455zM472 349.47H473V351.88H472z"/>
<path fill="#00ff80" d="M470 332.65H471V335.05H470zM433 337.45H434V339.86H433zM456 337.45H457V339.86H456zM432 342.26H433V344.66H432zM425 344.66H426V347.07H425zM456 347.07H457V349.47H456z"/>
<path fill="#00ff65" d="M424 339.86H425V342.26H424zM433 342.26H434V344.66H433zM440 342.26H441V344.66H440zM432 344.66H433V347.07H432zM448 344.66H449V347.07H448zM462 344.66H463V347.07H462z"/>
<path fill="#00ff4a" d="M472 337.45H473V339.86H472zM433 339.86H434V342.26H433z"/>
<path fill="#00ff30" d="M440 337.45H441V339.86H440zM425 339.86H426V342.26H425zM425 342.26H426V344.66H425zM440 344.66H441V347.07H440zM455 344.66H456V347.07H455z"/>
<path fill="#00ff15" d="M469 332.65H470V335.05H469zM449 337.45H450V339.86H449zM440 339.86H441V342.26H440zM448 342.26H449V344.66H448zM454 342.26H455V344.66H454zM449 344.66H450V347.07H449zM470 344.66H471V347.07H470zM471 347.07H472V349.47H471z"/>
<path fill="#05ff00" d="M454 335.05H455V337.45H454zM462 335.05H463V337.45H462zM448 337.45H449V339.86H448zM455 337.45H456V339.86H455zM449 342.26H450V344.66H449zM456 344.66H457V347.07H456zM463 344.66H464V347.07H463z"/>
<path fill="#20ff00" d="M470 335.05H471V337.45H470zM463 337.45H464V339.86H463zM471 337.45H472V339.86H471zM432 339.86H433V342.26H432zM441 339.86H442V342.26H441zM441 342.26H442V344.66H441zM441 344.66H442V347.07H441zM464 347.07H465V349.47H464zM472 347.07H473V349.47H472z"/>
<path fill="#3aff00" d="M454 337.45H455V339.86H454z"/>
<path fill="#55ff00" d="M469 335.05H470V337.45H469zM462 337.45H463V339.86H462zM469 337.45H471V339.86H469zM448 339.86H450V342.26H448zM454 339.86H457V342.26H454zM462 339.86H465V342.26H462zM469 339.86H473V342.26H469zM455 342.26H457V344.66H455zM462 342.26H465V344.66H462zM469 342.26H473V344.66H469zM464 344.66H465V347.07H464zM471 344.66H473V347.07H471z"/>
<path fill="#4b00ff" d="M450 396.2H452V398.73H450zM396 398.73H398V401.25H396zM394 401.25H396V403.78H394zM404 411.36H406V413.88H404zM398 416.41H400V418.93H398z"/>
<path fill="#3d00ff" d="M398 401.25H400V403.78H398zM406 401.25H408V403.78H406zM428 401.25H430V403.78H428zM444 403.78H446V406.3H444zM422 406.3H424V408.83H422zM452 406.3H454V408.83H452zM466 406.3H468V408.83H466zM420 408.83H422V411.36H420zM428 408.83H430V411.36H428zM444 408.83H446V411.36H444zM446 411.36H448V413.88H446zM472 411.36H474V413.88H472zM418 416.41H420V418.93H418zM442 418.93H446V421.46H442z"/>
<path fill="#3000ff" d="M426 396.2H428V398.73H426zM454 396.2H456V398.73H454zM400 401.25H402V403.78H400zM440 401.25H442V403.78H440zM476 401.25H478V403.78H476zM412 406.3H414V408.83H412zM436 408.83H438V411.36H436zM460 408.83H464V411.36H460zM392 411.36H394V413.88H392zM422 411.36H424V413.88H422zM438 411.36H442V413.88H438zM482 411.36H484V413.88H482zM390 413.88H392V416.41H390zM402 413.88H404V416.41H402zM430 413.88H432V416.41H430zM462 413.88H464V416.41H462zM472 413.88H474V416.41H472zM450 416.41H452V418.93H450zM394 418.93H396V421.46H394zM398 418.93H400V421.46H398zM444 421.46H446V423.99H444z"/>
<path fill="#2300ff" d="M466 396.2H468V398.73H466zM434 401.25H438V403.78H434zM474 401.25H476V403.78H474zM434 403.78H436V406.3H434zM450 403.78H452V406.3H450zM462 403.78H464V406.3H462zM394 406.3H396V408.83H394zM424 406.3H426V408.83H424zM448 406.3H450V408.83H448zM394 408.83H396V411.36H394zM410 408.83H412V411.36H410zM426 408.83H428V411.36H426zM452 408.83H454V411.36H452zM414 411.36H416V413.88H414zM470 411.36H472V413.88H470zM474 411.36H476V413.88H474zM392 413.88H394V416.41H392zM414 413.88H416V416.41H414zM420 413.88H422V416.41H420zM428 413.88H430V416.41H428zM434 413.88H436V416.41H434zM442 413.88H444V416.41H442zM440 416.41H442V418.93H440zM472 416.41H474V418.93H472zM478 416.41H480V418.93H478zM416 418.93H418V421.46H416zM428 418.93H430V421.46H428zM452 418.93H454V421.46H452zM420 421.46H422V423.99H420zM464 423.99H466V426.51H464zM468 423.99H470V426.51H468z"/>
<path fill="#1500ff" d="M458 401.25H460V403.78H458zM464 406.3H466V408.83H464zM392 408.83H394V411.36H392zM396 408.83H398V411.36H396zM422 408.83H424V411.36H422zM464 408.83H466V411.36H464zM472 408.83H474V411.36H472zM394 411.36H396V413.88H394zM398 411.36H402V413.88H398zM454 411.36H456V413.88H454zM408 413.88H410V416.41H408zM436 413.88H438V416.41H436zM440 413.88H442V416.41H440zM450 413.88H452V416.41H450zM460 413.88H462V416.41H460zM464 413.88H466V416.41H464zM478 413.88H480V416.41H478zM392 416.41H396V418.93H392zM410 416.41H412V418.93H410zM414 416.41H416V418.93H414zM422 416.41H424V418.93H422zM426 416.41H428V418.93H426zM432 416.41H434V418.93H432zM442 416.41H444V418.93H442zM470 416.41H472V418.93H470zM400 418.93H402V421.46H400zM406 418.93H408V421.46H406zM412 418.93H416V421.46H412zM418 418.93H422V421.46H418zM448 418.93H452V421.46H448zM470 418.93H472V421.46H470zM480 418.93H482V421.46H480zM402 421.46H404V423.99H402zM406 421.46H408V423.99H406zM410 421.46H412V423.99H410zM426 421.46H428V423.99H426zM432 421.46H434V423.99H432zM402 423.99H404V426.51H402zM438 423.99H440V426.51H438zM480 423.99H482V426.51H480zM470 431.56H472V434.09H470z"/>
<path fill="#0800ff" d="M390 401.25H392V403.78H390zM444 401.25H446V403.78H444zM398 406.3H400V408.83H398zM404 408.83H406V411.36H404zM440 408.83H442V411.36H440zM446 408.83H448V411.36H446zM456 408.83H458V411.36H456zM468 408.83H470V411.36H468zM478 408.83H480V411.36H478zM426 411.36H428V413.88H426zM462 411.36H466V413.88H462zM426 413.88H428V416.41H426zM454 413.88H456V416.41H454zM412 416.41H414V418.93H412zM420 416.41H422V418.93H420zM434 416.41H436V418.93H434zM456 416.41H458V418.93H456zM464 416.41H466V418.93H464zM410 418.93H412V421.46H410zM426 418.93H428V421.46H426zM434 418.93H438V421.46H434zM440 418.93H442V421.46H440zM460 418.93H462V421.46H460zM466 418.93H468V421.46H466zM482 418.93H484V421.46H482zM404 421.46H406V423.99H404zM408 421.46H410V423.99H408zM422 421.46H424V423.99H422zM454 421.46H458V423.99H454zM464 421.46H466V423.99H464zM390 423.99H392V426.51H390zM396 423.99H398V426.51H396zM406 423.99H408V426.51H406zM436 423.99H438V426.51H436zM440 423.99H444V426.51H440zM478 423.99H480V426.51H478zM406 426.51H408V429.04H406zM418 426.51H420V429.04H418zM424 426.51H426V429.04H424zM434 426.51H436V429.04H434zM468 426.51H472V429.04H468zM392 429.04H396V431.56H392zM414 429.04H416V431.56H414zM420 429.04H422V431.56H420zM480 429.04H482V431.56H480zM396 431.56H398V434.09H396zM404 431.56H406V434.09H404zM418 431.56H420V434.09H418zM430 431.56H432V434.09H430zM450 431.56H452V434.09H450zM454 431.56H456V434.09H454z"/>
<path fill="#000bff" d="M438 408.83H440V411.36H438zM412 411.36H414V413.88H412zM432 411.36H434V413.88H432zM478 411.36H482V413.88H478zM404 413.88H406V416.41H404zM422 413.88H424V416.41H422zM438 413.88H440V416.41H438zM444 413.88H446V416.41H444zM400 416.41H402V418.93H400zM404 416.41H406V418.93H404zM454 416.41H456V418.93H454zM462 416.41H464V418.93H462zM430 418.93H432V421.46H430zM454 418.93H456V421.46H454zM464 418.93H466V421.46H464zM474 418.93H476V421.46H474zM390 421.46H392V423.99H390zM400 421.46H402V423.99H400zM416 421.46H418V423.99H416zM424 421.46H426V423.99H424zM452 421.46H454V423.99H452zM466 421.46H470V423.99H466zM474 421.46H476V423.99H474zM478 421.46H480V423.99H478zM404 423.99H406V426.51H404zM416 423.99H418V426.51H416zM422 423.99H424V426.51H422zM426 423.99H432V426.51H426zM434 423.99H436V426.51H434zM448 423.99H450V426.51H448zM454 423.99H456V426.51H454zM472 423.99H474V426.51H472zM482 423.99H484V426.51H482zM396 426.51H400V429.04H396zM436 426.51H438V429.04H436zM446 426.51H448V429.04H446zM466 426.51H468V429.04H466zM478 426.51H480V429.04H478zM482 426.51H484V429.04H482zM400 429.04H402V431.56H400zM412 429.04H414V431.56H412zM424 429.04H426V431.56H424zM428 429.04H430V431.56H428zM438 429.04H440V431.56H438zM456 429.04H458V431.56H456zM460 429.04H462V431.56H460zM468 429.04H470V431.56H468zM474 429.04H476V431.56H474zM422 431.56H424V434.09H422zM402 434.09H404V436.62H402zM404 436.62H406V439.14H404zM420 441.67H422V444.19H420z"/>
<path fill="#0025ff" d="M432 406.3H434V408.83H432zM458 408.83H460V411.36H458zM396 413.88H398V416.41H396zM392 418.93H394V421.46H392zM462 418.93H464V421.46H462zM476 418.93H478V421.46H476zM476 421.46H478V423.99H476zM398 423.99H400V426.51H398zM408 423.99H410V426.51H408zM414 423.99H416V426.51H414zM432 423.99H434V426.51H432zM444 423.99H446V426.51H444zM456 423.99H462V426.51H456zM474 423.99H478V426.51H474zM400 426.51H402V429.04H400zM408 426.51H410V429.04H408zM416 426.51H418V429.04H416zM440 426.51H442V429.04H440zM444 426.51H446V429.04H444zM454 426.51H456V429.04H454zM396 429.04H400V431.56H396zM448 429.04H450V431.56H448zM462 429.04H464V431.56H462zM390 431.56H392V434.09H390zM394 431.56H396V434.09H394zM438 431.56H440V434.09H438zM446 431.56H448V434.09H446zM474 431.56H476V434.09H474zM478 431.56H480V434.09H478zM396 434.09H402V436.62H396zM430 434.09H432V436.62H430zM438 434.09H440V436.62H438zM448 434.09H450V436.62H448zM452 434.09H454V436.62H452zM390 436.62H396V439.14H390zM410 436.62H412V439.14H410zM452 436.62H454V439.14H452zM406 444.19H408V446.72H406z"/>
<path fill="#0040ff" d="M424 423.99H426V426.51H424zM466 423.99H468V426.51H466zM412 426.51H414V429.04H412zM426 426.51H430V429.04H426zM448 426.51H450V429.04H448zM474 426.51H476V429.04H474zM410 429.04H412V431.56H410zM422 429.04H424V431.56H422zM426 429.04H428V431.56H426zM432 429.04H434V431.56H432zM436 429.04H438V431.56H436zM450 429.04H452V431.56H450zM458 429.04H460V431.56H458zM466 429.04H468V431.56H466zM472 429.04H474V431.56H472zM476 429.04H478V431.56H476zM482 429.04H484V431.56H482zM412 431.56H414V434.09H412zM436 431.56H438V434.09H436zM440 431.56H442V434.09H440zM456 431.56H458V434.09H456zM464 431.56H466V434.09H464zM404 434.09H410V436.62H404zM412 434.09H414V436.62H412zM446 434.09H448V436.62H446zM474 434.09H476V436.62H474zM396 436.62H398V439.14H396zM408 436.62H410V439.14H408zM420 436.62H422V439.14H420zM390 439.14H392V441.67H390zM416 439.14H422V441.67H416zM432 439.14H434V441.67H432zM460 439.14H462V441.67H460zM394 441.67H396V444.19H394zM418 441.67H420V444.19H418zM400 444.19H402V446.72H400zM410 444.19H412V446.72H410zM416 446.72H418V449.25H416zM400 449.25H402V451.77H400zM392 451.77H394V454.3H392zM422 451.77H424V454.3H422zM392 456.82H394V459.35H392z"/>
<path fill="#005aff" d="M402 426.51H404V429.04H402zM414 426.51H416V429.04H414zM432 426.51H434V429.04H432zM442 426.51H444V429.04H442zM450 426.51H452V429.04H450zM460 426.51H462V429.04H460zM480 426.51H482V429.04H480zM408 429.04H410V431.56H408zM434 429.04H436V431.56H434zM464 429.04H466V431.56H464zM470 429.04H472V431.56H470zM414 431.56H418V434.09H414zM424 431.56H426V434.09H424zM428 431.56H430V434.09H428zM432 431.56H436V434.09H432zM442 431.56H444V434.09H442zM472 431.56H474V434.09H472zM482 431.56H484V434.09H482zM392 434.09H396V436.62H392zM414 434.09H418V436.62H414zM426 434.09H428V436.62H426zM432 434.09H434V436.62H432zM440 434.09H442V436.62H440zM454 434.09H458V436.62H454zM468 434.09H470V436.62H468zM476 434.09H478V436.62H476zM480 434.09H482V436.62H480zM402 436.62H404V439.14H402zM418 436.62H420V439.14H418zM428 436.62H430V439.14H428zM432 436.62H434V439.14H432zM436 436.62H438V439.14H436zM472 436.62H474V439.14H472zM478 436.62H480V439.14H478zM396 439.14H398V441.67H396zM414 439.14H416V441.67H414zM430 439.14H432V441.67H430zM482 439.14H484V441.67H482zM390 441.67H394V444.19H390zM402 441.67H404V444.19H402zM410 441.67H412V444.19H410zM436 441.67H438V444.19H436zM390 444.19H392V446.72H390zM398 444.19H400V446.72H398zM414 444.19H416V446.72H414zM396 446.72H400V449.25H396zM404 446.72H406V449.25H404zM400 451.77H402V454.3H400zM406 461.88H408V464.4H406zM398 464.4H400V466.93H398z"/>
<path fill="#0075ff" d="M442 429.04H444V431.56H442zM408 431.56H412V434.09H408zM420 431.56H422V434.09H420zM448 431.56H450V434.09H448zM452 431.56H454V434.09H452zM458 431.56H462V434.09H458zM466 431.56H470V434.09H466zM390 434.09H392V436.62H390zM410 434.09H412V436.62H410zM418 434.09H420V436.62H418zM422 434.09H424V436.62H422zM428 434.09H430V436.62H428zM436 434.09H438V436.62H436zM442 434.09H444V436.62H442zM450 434.09H452V436.62H450zM464 434.09H468V436.62H464zM470 434.09H474V436.62H470zM406 436.62H408V439.14H406zM426 436.62H428V439.14H426zM430 436.62H432V439.14H430zM438 436.62H440V439.14H438zM448 436.62H452V439.14H448zM454 436.62H458V439.14H454zM462 436.62H466V439.14H462zM468 436.62H472V439.14H468zM480 436.62H482V439.14H480zM392 439.14H396V441.67H392zM400 439.14H406V441.67H400zM410 439.14H412V441.67H410zM424 439.14H428V441.67H424zM434 439.14H438V441.67H434zM442 439.14H444V441.67H442zM446 439.14H448V441.67H446zM462 439.14H464V441.67H462zM476 439.14H478V441.67H476zM396 441.67H400V444.19H396zM406 441.67H410V444.19H406zM450 441.67H454V444.19H450zM392 444.19H396V446.72H392zM418 444.19H420V446.72H418zM400 446.72H402V449.25H400zM406 446.72H408V449.25H406zM410 446.72H414V449.25H410zM420 446.72H426V449.25H420zM428 446.72H430V449.25H428zM444 446.72H446V449.25H444zM394 449.25H400V451.77H394zM406 449.25H408V451.77H406zM416 449.25H422V451.77H416zM396 451.77H400V454.3H396zM408 451.77H410V454.3H408zM410 454.3H412V456.82H410zM394 456.82H396V459.35H394zM406 456.82H408V459.35H406zM422 456.82H424V459.35H422zM412 459.35H414V461.88H412zM406 464.4H408V466.93H406zM412 464.4H414V466.93H412zM398 471.98H400V474.51H398z"/>
<path fill="#008fff" d="M452 429.04H454V431.56H452zM398 431.56H400V434.09H398zM476 431.56H478V434.09H476zM480 431.56H482V434.09H480zM460 434.09H464V436.62H460zM400 436.62H402V439.14H400zM412 436.62H414V439.14H412zM442 436.62H444V439.14H442zM458 436.62H460V439.14H458zM466 436.62H468V439.14H466zM476 436.62H478V439.14H476zM482 436.62H484V439.14H482zM406 439.14H410V441.67H406zM428 439.14H430V441.67H428zM444 439.14H446V441.67H444zM450 439.14H452V441.67H450zM458 439.14H460V441.67H458zM470 439.14H476V441.67H470zM480 439.14H482V441.67H480zM400 441.67H402V444.19H400zM412 441.67H416V444.19H412zM422 441.67H428V444.19H422zM432 441.67H436V444.19H432zM440 441.67H442V444.19H440zM474 441.67H476V444.19H474zM478 441.67H480V444.19H478zM482 441.67H484V444.19H482zM396 444.19H398V446.72H396zM402 444.19H404V446.72H402zM408 444.19H410V446.72H408zM412 444.19H414V446.72H412zM432 444.19H434V446.72H432zM392 446.72H394V449.25H392zM414 446.72H416V449.25H414zM442 446.72H444V449.25H442zM390 449.25H392V451.77H390zM404 449.25H406V451.77H404zM408 449.25H416V451.77H408zM422 449.25H424V451.77H422zM432 449.25H434V451.77H432zM390 451.77H392V454.3H390zM406 451.77H408V454.3H406zM420 451.77H422V454.3H420zM390 454.3H392V456.82H390zM394 454.3H396V456.82H394zM400 454.3H402V456.82H400zM412 454.3H416V456.82H412zM420 454.3H422V456.82H420zM390 456.82H392V459.35H390zM396 456.82H402V459.35H396zM418 456.82H422V459.35H418zM394 459.35H398V461.88H394zM408 459.35H410V461.88H408zM414 459.35H418V461.88H414zM422 459.35H424V461.88H422zM390 461.88H392V464.4H390zM404 461.88H406V464.4H404zM390 464.4H392V466.93H390zM400 464.4H402V466.93H400zM408 464.4H410V466.93H408zM398 466.93H400V469.45H398zM406 474.51H408V477.03H406zM396 477.03H398V479.56H396z"/>
<path fill="#00aaff" d="M478 434.09H480V436.62H478zM434 436.62H436V439.14H434zM440 436.62H442V439.14H440zM444 436.62H446V439.14H444zM454 439.14H456V441.67H454zM466 439.14H468V441.67H466zM430 441.67H432V444.19H430zM438 441.67H440V444.19H438zM442 441.67H444V444.19H442zM446 441.67H448V444.19H446zM458 441.67H460V444.19H458zM466 441.67H470V444.19H466zM424 444.19H430V446.72H424zM436 444.19H446V446.72H436zM394 446.72H396V449.25H394zM402 446.72H404V449.25H402zM426 446.72H428V449.25H426zM434 446.72H436V449.25H434zM440 446.72H442V449.25H440zM402 449.25H404V451.77H402zM436 449.25H440V451.77H436zM402 451.77H406V454.3H402zM412 451.77H414V454.3H412zM418 451.77H420V454.3H418zM424 451.77H426V454.3H424zM392 454.3H394V456.82H392zM398 454.3H400V456.82H398zM416 454.3H418V456.82H416zM422 454.3H424V456.82H422zM434 454.3H436V456.82H434zM442 454.3H444V456.82H442zM416 456.82H418V459.35H416zM418 459.35H420V461.88H418zM394 461.88H396V464.4H394zM410 461.88H412V464.4H410zM420 461.88H422V464.4H420zM394 464.4H398V466.93H394zM414 464.4H416V466.93H414zM420 464.4H422V466.93H420zM390 466.93H392V469.45H390zM400 466.93H402V469.45H400zM406 466.93H408V469.45H406zM412 466.93H414V469.45H412zM390 469.45H392V471.98H390zM394 469.45H398V471.98H394zM412 469.45H414V471.98H412zM406 471.98H408V474.51H406zM390 474.51H392V477.03H390zM398 474.51H400V477.03H398zM390 477.03H392V479.56H390zM394 477.03H396V479.56H394zM398 477.03H400V479.56H398zM420 479.56H422V482.08H420z"/>
<path fill="#00c5ff" d="M446 436.62H448V439.14H446zM460 436.62H462V439.14H460zM398 439.14H400V441.67H398zM412 439.14H414V441.67H412zM440 439.14H442V441.67H440zM452 439.14H454V441.67H452zM456 439.14H458V441.67H456zM468 439.14H470V441.67H468zM478 439.14H480V441.67H478zM444 441.67H446V444.19H444zM462 441.67H464V444.19H462zM404 444.19H406V446.72H404zM430 444.19H432V446.72H430zM470 444.19H474V446.72H470zM390 446.72H392V449.25H390zM408 446.72H410V449.25H408zM418 446.72H420V449.25H418zM438 446.72H440V449.25H438zM446 446.72H450V449.25H446zM456 446.72H458V449.25H456zM472 446.72H474V449.25H472zM426 449.25H432V451.77H426zM440 449.25H444V451.77H440zM446 449.25H448V451.77H446zM394 451.77H396V454.3H394zM432 451.77H434V454.3H432zM438 451.77H440V454.3H438zM404 454.3H410V456.82H404zM426 454.3H428V456.82H426zM432 454.3H434V456.82H432zM404 456.82H406V459.35H404zM410 456.82H412V459.35H410zM414 456.82H416V459.35H414zM434 456.82H436V459.35H434zM438 456.82H440V459.35H438zM444 456.82H446V459.35H444zM392 459.35H394V461.88H392zM398 459.35H400V461.88H398zM406 459.35H408V461.88H406zM392 461.88H394V464.4H392zM398 461.88H402V464.4H398zM412 461.88H416V464.4H412zM422 461.88H424V464.4H422zM422 464.4H424V466.93H422zM396 466.93H398V469.45H396zM398 469.45H400V471.98H398zM404 469.45H406V471.98H404zM410 469.45H412V471.98H410zM422 469.45H424V471.98H422zM394 471.98H396V474.51H394zM412 471.98H414V474.51H412zM422 479.56H424V482.08H422zM396 482.08H398V484.61H396zM406 482.08H408V484.61H406zM390 489.66H392V492.19H390z"/>
<path fill="#00dfff" d="M464 439.14H466V441.67H464zM428 441.67H430V444.19H428zM448 441.67H450V444.19H448zM454 441.67H458V444.19H454zM460 441.67H462V444.19H460zM464 441.67H466V444.19H464zM480 441.67H482V444.19H480zM446 444.19H450V446.72H446zM456 444.19H458V446.72H456zM466 444.19H470V446.72H466zM474 444.19H478V446.72H474zM480 444.19H484V446.72H480zM432 446.72H434V449.25H432zM436 446.72H438V449.25H436zM462 446.72H466V449.25H462zM470 446.72H472V449.25H470zM480 446.72H482V449.25H480zM434 449.25H436V451.77H434zM444 449.25H446V451.77H444zM466 449.25H468V451.77H466zM416 451.77H418V454.3H416zM426 451.77H428V454.3H426zM430 451.77H432V454.3H430zM408 456.82H410V459.35H408zM426 456.82H428V459.35H426zM400 459.35H404V461.88H400zM430 459.35H432V461.88H430zM396 461.88H398V464.4H396zM416 461.88H418V464.4H416zM402 464.4H404V466.93H402zM418 464.4H420V466.93H418zM394 466.93H396V469.45H394zM408 466.93H412V469.45H408zM416 466.93H418V469.45H416zM400 469.45H404V471.98H400zM414 469.45H416V471.98H414zM420 469.45H422V471.98H420zM390 471.98H392V474.51H390zM408 471.98H410V474.51H408zM420 471.98H422V474.51H420zM392 474.51H394V477.03H392zM412 474.51H414V477.03H412zM420 474.51H422V477.03H420zM412 477.03H414V479.56H412zM420 477.03H422V479.56H420zM396 479.56H398V482.08H396zM408 479.56H410V482.08H408zM414 479.56H416V482.08H414zM398 482.08H400V484.61H398zM404 482.08H406V484.61H404zM420 482.08H422V484.61H420zM398 484.61H402V487.14H398zM410 487.14H412V489.66H410zM422 489.66H424V492.19H422z"/>
<path fill="#00faff" d="M470 441.67H474V444.19H470zM476 441.67H478V444.19H476zM434 444.19H436V446.72H434zM450 444.19H456V446.72H450zM458 444.19H464V446.72H458zM478 444.19H480V446.72H478zM458 446.72H462V449.25H458zM468 446.72H470V449.25H468zM452 449.25H454V451.77H452zM478 449.25H482V451.77H478zM428 451.77H430V454.3H428zM434 451.77H438V454.3H434zM440 451.77H446V454.3H440zM476 451.77H478V454.3H476zM482 451.77H484V454.3H482zM402 454.3H404V456.82H402zM424 454.3H426V456.82H424zM430 454.3H432V456.82H430zM438 454.3H440V456.82H438zM412 456.82H414V459.35H412zM436 456.82H438V459.35H436zM440 456.82H442V459.35H440zM404 459.35H406V461.88H404zM432 459.35H434V461.88H432zM408 461.88H410V464.4H408zM438 461.88H440V464.4H438zM416 464.4H418V466.93H416zM438 464.4H440V466.93H438zM404 466.93H406V469.45H404zM414 466.93H416V469.45H414zM420 466.93H422V469.45H420zM438 466.93H440V469.45H438zM392 469.45H394V471.98H392zM406 469.45H408V471.98H406zM416 469.45H418V471.98H416zM438 469.45H440V471.98H438zM400 471.98H404V474.51H400zM410 471.98H412V474.51H410zM414 471.98H418V474.51H414zM422 471.98H424V474.51H422zM396 474.51H398V477.03H396zM408 474.51H410V477.03H408zM414 474.51H416V477.03H414zM406 477.03H412V479.56H406zM414 477.03H416V479.56H414zM418 477.03H420V479.56H418zM394 479.56H396V482.08H394zM398 479.56H402V482.08H398zM406 479.56H408V482.08H406zM416 479.56H418V482.08H416zM410 482.08H412V484.61H410zM422 482.08H424V484.61H422zM394 484.61H398V487.14H394zM414 484.61H416V487.14H414zM396 487.14H398V489.66H396zM406 487.14H410V489.66H406zM412 487.14H414V489.66H412zM420 487.14H422V489.66H420zM398 489.66H400V492.19H398zM412 489.66H414V492.19H412z"/>
<path fill="#00ffea" d="M448 439.14H450V441.67H448zM450 446.72H452V449.25H450zM466 446.72H468V449.25H466zM474 446.72H478V449.25H474zM482 446.72H484V449.25H482zM424 449.25H426V451.77H424zM454 449.25H456V451.77H454zM458 449.25H460V451.77H458zM470 449.25H476V451.77H470zM410 451.77H412V454.3H410zM446 451.77H448V454.3H446zM460 451.77H464V454.3H460zM436 454.3H438V456.82H436zM474 454.3H476V456.82H474zM442 456.82H444V459.35H442zM424 459.35H426V461.88H424zM436 459.35H440V461.88H436zM442 459.35H444V461.88H442zM418 461.88H420V464.4H418zM436 461.88H438V464.4H436zM440 461.88H442V464.4H440zM444 464.4H446V466.93H444zM402 466.93H404V469.45H402zM408 469.45H410V471.98H408zM418 469.45H420V471.98H418zM392 471.98H394V474.51H392zM418 471.98H420V474.51H418zM410 474.51H412V477.03H410zM416 474.51H418V477.03H416zM400 477.03H402V479.56H400zM416 477.03H418V479.56H416zM422 477.03H424V479.56H422zM402 479.56H404V482.08H402zM410 479.56H412V482.08H410zM390 482.08H396V484.61H390zM400 482.08H404V484.61H400zM392 484.61H394V487.14H392zM404 484.61H408V487.14H404zM422 484.61H424V487.14H422zM392 487.14H394V489.66H392zM402 487.14H404V489.66H402zM396 489.66H398V492.19H396zM420 489.66H422V492.19H420zM396 492.19H398V494.72H396zM396 497.24H398V499.77H396z"/>
<path fill="#00ffcf" d="M464 444.19H466V446.72H464zM454 446.72H456V449.25H454zM448 449.25H452V451.77H448zM460 449.25H462V451.77H460zM468 449.25H470V451.77H468zM476 449.25H478V451.77H476zM482 449.25H484V451.77H482zM450 451.77H452V454.3H450zM454 451.77H460V454.3H454zM472 451.77H474V454.3H472zM440 454.3H442V456.82H440zM444 454.3H446V456.82H444zM472 454.3H474V456.82H472zM478 454.3H480V456.82H478zM402 456.82H404V459.35H402zM424 456.82H426V459.35H424zM470 456.82H472V459.35H470zM434 459.35H436V461.88H434zM444 461.88H446V464.4H444zM426 464.4H428V466.93H426zM432 464.4H434V466.93H432zM424 466.93H428V469.45H424zM434 469.45H436V471.98H434zM438 471.98H440V474.51H438zM444 471.98H446V474.51H444zM394 474.51H396V477.03H394zM400 474.51H402V477.03H400zM404 474.51H406V477.03H404zM418 474.51H420V477.03H418zM422 474.51H424V477.03H422zM438 474.51H440V477.03H438zM392 477.03H394V479.56H392zM402 477.03H406V479.56H402zM392 479.56H394V482.08H392zM418 479.56H420V482.08H418zM412 482.08H418V484.61H412zM416 484.61H418V487.14H416zM394 487.14H396V489.66H394zM398 487.14H400V489.66H398zM418 487.14H420V489.66H418zM422 487.14H424V489.66H422zM392 489.66H394V492.19H392zM402 489.66H404V492.19H402zM406 489.66H408V492.19H406zM414 489.66H416V492.19H414zM390 492.19H394V494.72H390zM400 492.19H402V494.72H400zM406 492.19H408V494.72H406zM420 492.19H422V494.72H420zM390 494.72H394V497.24H390zM398 494.72H402V497.24H398zM422 494.72H424V497.24H422zM398 497.24H400V499.77H398zM420 497.24H422V499.77H420zM420 499.77H422V502.29H420z"/>
<path fill="#00ffb5" d="M452 446.72H454V449.25H452zM478 446.72H480V449.25H478zM464 449.25H466V451.77H464zM448 451.77H450V454.3H448zM466 451.77H472V454.3H466zM478 451.77H480V454.3H478zM428 454.3H430V456.82H428zM450 454.3H452V456.82H450zM458 454.3H460V456.82H458zM466 454.3H468V456.82H466zM432 456.82H434V459.35H432zM426 459.35H430V461.88H426zM444 459.35H446V461.88H444zM426 461.88H432V464.4H426zM442 461.88H444V464.4H442zM424 464.4H426V466.93H424zM428 464.4H430V466.93H428zM434 464.4H436V466.93H434zM442 464.4H444V466.93H442zM432 466.93H436V469.45H432zM440 466.93H444V469.45H440zM428 469.45H430V471.98H428zM402 474.51H404V477.03H402zM436 474.51H438V477.03H436zM432 477.03H434V479.56H432zM404 479.56H406V482.08H404zM408 484.61H410V487.14H408zM390 487.14H392V489.66H390zM414 487.14H416V489.66H414zM402 492.19H404V494.72H402zM410 492.19H412V494.72H410zM414 492.19H416V494.72H414zM396 494.72H398V497.24H396zM402 494.72H404V497.24H402zM406 494.72H408V497.24H406zM420 494.72H422V497.24H420zM396 502.29H398V504.82H396zM406 504.82H408V507.35H406z"/>
<path fill="#00ff9a" d="M456 449.25H458V451.77H456zM452 451.77H454V454.3H452zM446 454.3H448V456.82H446zM452 454.3H454V456.82H452zM456 454.3H458V456.82H456zM462 454.3H466V456.82H462zM468 454.3H472V456.82H468zM476 454.3H478V456.82H476zM450 456.82H454V459.35H450zM458 456.82H462V459.35H458zM472 456.82H474V459.35H472zM476 456.82H478V459.35H476zM460 459.35H462V461.88H460zM482 459.35H484V461.88H482zM424 461.88H426V464.4H424zM434 461.88H436V464.4H434zM444 466.93H446V469.45H444zM442 469.45H446V471.98H442zM424 471.98H428V474.51H424zM440 471.98H442V474.51H440zM438 477.03H440V479.56H438zM412 479.56H414V482.08H412zM438 479.56H440V482.08H438zM408 482.08H410V484.61H408zM418 482.08H420V484.61H418zM402 484.61H404V487.14H402zM400 487.14H402V489.66H400zM404 487.14H406V489.66H404zM400 489.66H402V492.19H400zM404 489.66H406V492.19H404zM408 489.66H410V492.19H408zM416 489.66H418V492.19H416zM412 492.19H414V494.72H412zM422 492.19H424V494.72H422zM410 494.72H412V497.24H410zM414 494.72H416V497.24H414zM394 497.24H396V499.77H394zM406 497.24H408V499.77H406zM394 499.77H396V502.29H394zM408 499.77H410V502.29H408zM392 502.29H394V504.82H392zM406 502.29H408V504.82H406z"/>
<path fill="#00ff80" d="M464 451.77H466V454.3H464zM480 451.77H482V454.3H480zM448 454.3H450V456.82H448zM460 454.3H462V456.82H460zM480 454.3H484V456.82H480zM428 456.82H430V459.35H428zM462 456.82H464V459.35H462zM468 456.82H470V459.35H468zM482 456.82H484V459.35H482zM446 459.35H448V461.88H446zM452 459.35H454V461.88H452zM458 459.35H460V461.88H458zM466 459.35H472V461.88H466zM478 459.35H480V461.88H478zM474 461.88H476V464.4H474zM430 464.4H432V466.93H430zM440 464.4H442V466.93H440zM436 466.93H438V469.45H436zM424 469.45H426V471.98H424zM430 469.45H434V471.98H430zM440 469.45H442V471.98H440zM430 471.98H438V474.51H430zM426 474.51H428V477.03H426zM430 474.51H434V477.03H430zM442 474.51H444V477.03H442zM426 479.56H428V482.08H426zM438 482.08H440V484.61H438zM418 484.61H420V487.14H418zM410 489.66H412V492.19H410zM418 489.66H420V492.19H418zM404 492.19H406V494.72H404zM408 494.72H410V497.24H408zM412 494.72H414V497.24H412zM416 494.72H418V497.24H416zM390 497.24H394V499.77H390zM402 497.24H404V499.77H402zM412 497.24H414V499.77H412zM422 497.24H424V499.77H422zM392 499.77H394V502.29H392zM398 499.77H400V502.29H398zM406 499.77H408V502.29H406zM412 499.77H414V502.29H412zM416 499.77H418V502.29H416zM390 502.29H392V504.82H390zM422 502.29H424V504.82H422zM396 504.82H398V507.35H396zM420 507.35H422V509.87H420z"/>
<path fill="#00ff65" d="M474 451.77H476V454.3H474zM454 454.3H456V456.82H454zM446 456.82H450V459.35H446zM454 456.82H456V459.35H454zM466 456.82H468V459.35H466zM474 456.82H476V459.35H474zM450 459.35H452V461.88H450zM474 459.35H476V461.88H474zM456 461.88H458V464.4H456zM460 461.88H462V464.4H460zM464 461.88H466V464.4H464zM482 461.88H484V464.4H482zM450 464.4H452V466.93H450zM470 464.4H472V466.93H470zM478 464.4H480V466.93H478zM428 466.93H432V469.45H428zM436 469.45H438V471.98H436zM460 471.98H462V474.51H460zM424 474.51H426V477.03H424zM444 474.51H446V477.03H444zM426 477.03H428V479.56H426zM436 479.56H438V482.08H436zM434 484.61H436V487.14H434zM408 492.19H410V494.72H408zM404 494.72H406V497.24H404zM400 497.24H402V499.77H400zM414 497.24H416V499.77H414zM390 499.77H392V502.29H390zM396 499.77H398V502.29H396zM404 499.77H406V502.29H404zM414 499.77H416V502.29H414zM394 502.29H396V504.82H394zM400 504.82H402V507.35H400zM394 507.35H396V509.87H394z"/>
<path fill="#00ff4a" d="M464 456.82H466V459.35H464zM478 456.82H482V459.35H478zM462 459.35H464V461.88H462zM472 459.35H474V461.88H472zM476 459.35H478V461.88H476zM480 459.35H482V461.88H480zM450 461.88H454V464.4H450zM458 461.88H460V464.4H458zM468 461.88H474V464.4H468zM436 464.4H438V466.93H436zM452 464.4H454V466.93H452zM460 464.4H462V466.93H460zM464 464.4H466V466.93H464zM472 464.4H474V466.93H472zM450 466.93H452V469.45H450zM470 466.93H472V469.45H470zM428 471.98H430V474.51H428zM442 471.98H444V474.51H442zM428 474.51H430V477.03H428zM434 474.51H436V477.03H434zM430 477.03H432V479.56H430zM440 477.03H444V479.56H440zM432 479.56H434V482.08H432zM424 482.08H426V484.61H424zM442 482.08H444V484.61H442zM424 484.61H426V487.14H424zM438 492.19H440V494.72H438zM418 494.72H420V497.24H418zM404 497.24H406V499.77H404zM410 497.24H412V499.77H410zM416 497.24H418V499.77H416zM418 499.77H420V502.29H418zM398 502.29H400V504.82H398zM410 502.29H416V504.82H410zM392 504.82H396V507.35H392zM416 504.82H418V507.35H416zM390 507.35H392V509.87H390zM404 507.35H408V509.87H404zM420 509.87H422V512.4H420zM420 512.4H422V514.92H420zM438 512.4H440V514.92H438z"/>
<path fill="#00ff30" d="M448 459.35H450V461.88H448zM454 459.35H458V461.88H454zM464 459.35H466V461.88H464zM454 461.88H456V464.4H454zM466 461.88H468V464.4H466zM446 464.4H448V466.93H446zM458 464.4H460V466.93H458zM466 464.4H468V466.93H466zM474 464.4H476V466.93H474zM482 464.4H484V466.93H482zM452 466.93H454V469.45H452zM456 466.93H462V469.45H456zM464 466.93H466V469.45H464zM472 469.45H474V471.98H472zM476 471.98H480V474.51H476zM440 474.51H442V477.03H440zM424 477.03H426V479.56H424zM428 477.03H430V479.56H428zM434 477.03H436V479.56H434zM444 477.03H446V479.56H444zM444 479.56H446V482.08H444zM428 482.08H430V484.61H428zM432 482.08H434V484.61H432zM428 484.61H430V487.14H428zM442 484.61H446V487.14H442zM426 487.14H428V489.66H426zM432 487.14H436V489.66H432zM434 489.66H436V492.19H434zM438 489.66H440V492.19H438zM432 492.19H434V494.72H432zM432 494.72H434V497.24H432zM408 497.24H410V499.77H408zM418 497.24H420V499.77H418zM400 499.77H404V502.29H400zM422 499.77H424V502.29H422zM400 502.29H402V504.82H400zM404 502.29H406V504.82H404zM416 502.29H418V504.82H416zM390 504.82H392V507.35H390zM402 504.82H404V507.35H402zM408 504.82H410V507.35H408zM412 504.82H416V507.35H412zM420 504.82H422V507.35H420zM392 507.35H394V509.87H392zM396 507.35H398V509.87H396zM412 507.35H414V509.87H412zM416 507.35H418V509.87H416zM406 509.87H408V512.4H406zM420 517.45H422V519.98H420z"/>
<path fill="#00ff15" d="M456 456.82H458V459.35H456zM476 461.88H480V464.4H476zM448 464.4H450V466.93H448zM456 464.4H458V466.93H456zM462 464.4H464V466.93H462zM468 464.4H470V466.93H468zM476 464.4H478V466.93H476zM468 466.93H470V469.45H468zM472 466.93H474V469.45H472zM482 466.93H484V469.45H482zM452 469.45H454V471.98H452zM458 469.45H462V471.98H458zM474 469.45H476V471.98H474zM468 471.98H470V474.51H468zM472 471.98H474V474.51H472zM462 474.51H466V477.03H462zM436 477.03H438V479.56H436zM424 479.56H426V482.08H424zM430 479.56H432V482.08H430zM442 479.56H444V482.08H442zM426 482.08H428V484.61H426zM430 482.08H432V484.61H430zM434 482.08H438V484.61H434zM426 484.61H428V487.14H426zM432 484.61H434V487.14H432zM436 484.61H440V487.14H436zM460 484.61H462V487.14H460zM470 484.61H472V487.14H470zM428 487.14H430V489.66H428zM438 487.14H440V489.66H438zM442 487.14H444V489.66H442zM430 489.66H432V492.19H430zM442 489.66H444V492.19H442zM424 492.19H426V494.72H424zM442 492.19H444V494.72H442zM432 497.24H434V499.77H432zM408 502.29H410V504.82H408zM418 502.29H420V504.82H418zM418 504.82H420V507.35H418zM398 507.35H400V509.87H398zM408 507.35H410V509.87H408zM414 507.35H416V509.87H414zM422 507.35H424V509.87H422zM394 509.87H398V512.4H394zM408 509.87H410V512.4H408zM416 509.87H418V512.4H416zM422 509.87H424V512.4H422zM390 512.4H392V514.92H390zM396 512.4H398V514.92H396zM406 512.4H408V514.92H406zM398 517.45H400V519.98H398zM438 522.5H440V525.03H438z"/>
<path fill="#05ff00" d="M446 461.88H448V464.4H446zM480 461.88H482V464.4H480zM446 466.93H448V469.45H446zM462 466.93H464V469.45H462zM462 469.45H464V471.98H462zM478 469.45H480V471.98H478zM482 469.45H484V471.98H482zM446 471.98H448V474.51H446zM456 471.98H458V474.51H456zM462 471.98H468V474.51H462zM456 474.51H458V477.03H456zM468 474.51H470V477.03H468zM482 474.51H484V477.03H482zM452 477.03H454V479.56H452zM434 479.56H436V482.08H434zM440 479.56H442V482.08H440zM444 482.08H446V484.61H444zM440 487.14H442V489.66H440zM444 487.14H446V489.66H444zM424 489.66H428V492.19H424zM426 492.19H428V494.72H426zM426 494.72H428V497.24H426zM434 494.72H436V497.24H434zM438 494.72H440V497.24H438zM460 494.72H462V497.24H460zM430 497.24H432V499.77H430zM436 497.24H440V499.77H436zM424 499.77H426V502.29H424zM438 499.77H440V502.29H438zM404 504.82H406V507.35H404zM422 504.82H424V507.35H422zM436 504.82H440V507.35H436zM442 504.82H444V507.35H442zM410 507.35H412V509.87H410zM390 509.87H392V512.4H390zM400 509.87H404V512.4H400zM412 509.87H416V512.4H412zM438 509.87H440V512.4H438zM394 512.4H396V514.92H394zM398 512.4H402V514.92H398zM408 512.4H410V514.92H408zM412 512.4H414V514.92H412zM416 512.4H418V514.92H416zM422 512.4H424V514.92H422zM392 514.92H394V517.45H392zM400 514.92H402V517.45H400zM408 514.92H410V517.45H408zM416 514.92H418V517.45H416zM420 514.92H422V517.45H420zM396 519.98H398V522.5H396zM396 527.55H398V530.08H396zM420 530.08H422V532.61H420z"/>
<path fill="#20ff00" d="M448 461.88H450V464.4H448zM462 461.88H464V464.4H462zM454 464.4H456V466.93H454zM454 466.93H456V469.45H454zM466 466.93H468V469.45H466zM474 466.93H480V469.45H474zM446 469.45H448V471.98H446zM450 469.45H452V471.98H450zM454 469.45H458V471.98H454zM464 469.45H466V471.98H464zM468 469.45H470V471.98H468zM476 469.45H478V471.98H476zM458 471.98H460V474.51H458zM474 471.98H476V474.51H474zM482 471.98H484V474.51H482zM470 474.51H474V477.03H470zM456 477.03H458V479.56H456zM468 477.03H470V479.56H468zM472 477.03H480V479.56H472zM428 479.56H430V482.08H428zM458 479.56H462V482.08H458zM472 479.56H474V482.08H472zM456 482.08H462V484.61H456zM430 484.61H432V487.14H430zM440 484.61H442V487.14H440zM424 487.14H426V489.66H424zM428 489.66H430V492.19H428zM432 489.66H434V492.19H432zM436 489.66H438V492.19H436zM430 492.19H432V494.72H430zM436 492.19H438V494.72H436zM444 492.19H446V494.72H444zM428 494.72H430V497.24H428zM444 494.72H446V497.24H444zM426 499.77H428V502.29H426zM440 499.77H442V502.29H440zM426 502.29H428V504.82H426zM438 502.29H442V504.82H438zM444 502.29H446V504.82H444zM400 507.35H402V509.87H400zM392 509.87H394V512.4H392zM426 509.87H428V512.4H426zM436 509.87H438V512.4H436zM402 512.4H406V514.92H402zM414 512.4H416V514.92H414zM432 512.4H434V514.92H432zM394 514.92H396V517.45H394zM398 514.92H400V517.45H398zM422 514.92H424V517.45H422zM392 517.45H394V519.98H392zM432 519.98H434V522.5H432zM482 519.98H484V522.5H482zM392 522.5H394V525.03H392zM396 522.5H398V525.03H396zM396 525.03H398V527.55H396zM420 525.03H422V527.55H420zM422 527.55H424V530.08H422zM398 530.08H400V532.61H398zM412 532.61H414V535.13H412zM460 557.87H462V560.39H460z"/>
<path fill="#3aff00" d="M480 464.4H482V466.93H480zM448 466.93H450V469.45H448zM450 471.98H452V474.51H450zM458 474.51H462V477.03H458zM476 474.51H480V477.03H476zM464 477.03H466V479.56H464zM482 477.03H484V479.56H482zM446 479.56H448V482.08H446zM470 479.56H472V482.08H470zM440 482.08H442V484.61H440zM468 484.61H470V487.14H468zM474 484.61H476V487.14H474zM430 487.14H432V489.66H430zM436 487.14H438V489.66H436zM470 487.14H472V489.66H470zM460 489.66H462V492.19H460zM474 489.66H476V492.19H474zM482 489.66H484V492.19H482zM428 492.19H430V494.72H428zM452 492.19H454V494.72H452zM478 492.19H480V494.72H478zM440 494.72H442V497.24H440zM476 494.72H478V497.24H476zM424 497.24H426V499.77H424zM440 497.24H444V499.77H440zM430 499.77H432V502.29H430zM436 499.77H438V502.29H436zM432 502.29H436V504.82H432zM442 502.29H444V504.82H442zM470 502.29H474V504.82H470zM410 504.82H412V507.35H410zM434 504.82H436V507.35H434zM440 504.82H442V507.35H440zM452 504.82H454V507.35H452zM402 507.35H404V509.87H402zM418 507.35H420V509.87H418zM438 507.35H440V509.87H438zM460 507.35H462V509.87H460zM472 507.35H474V509.87H472zM418 509.87H420V512.4H418zM482 509.87H484V512.4H482zM410 512.4H412V514.92H410zM396 514.92H398V517.45H396zM418 514.92H420V517.45H418zM436 514.92H438V517.45H436zM468 514.92H470V517.45H468zM390 517.45H392V519.98H390zM396 517.45H398V519.98H396zM406 517.45H410V519.98H406zM418 517.45H420V519.98H418zM422 517.45H424V519.98H422zM432 517.45H434V519.98H432zM438 517.45H440V519.98H438zM482 517.45H484V519.98H482zM400 519.98H402V522.5H400zM406 519.98H408V522.5H406zM416 519.98H418V522.5H416zM424 519.98H426V522.5H424zM438 519.98H440V522.5H438zM390 522.5H392V525.03H390zM398 522.5H404V525.03H398zM406 522.5H408V525.03H406zM416 522.5H418V525.03H416zM420 522.5H424V525.03H420zM398 525.03H400V527.55H398zM406 525.03H408V527.55H406zM412 525.03H414V527.55H412zM406 527.55H408V530.08H406zM412 527.55H414V530.08H412zM392 530.08H394V532.61H392zM406 530.08H408V532.61H406zM416 530.08H418V532.61H416zM416 532.61H418V535.13H416zM406 535.13H408V537.66H406zM396 537.66H398V540.18H396zM406 540.18H408V542.71H406zM410 542.71H412V545.24H410zM420 547.76H422V550.29H420zM406 552.81H408V555.34H406zM456 575.55H458V578.07H456z"/>
<path fill="#55ff00" d="M480 466.93H482V469.45H480zM448 469.45H450V471.98H448zM480 469.45H482V471.98H480zM452 471.98H454V474.51H452zM480 471.98H482V474.51H480zM446 474.51H448V477.03H446zM450 474.51H454V477.03H450zM466 474.51H468V477.03H466zM474 474.51H476V477.03H474zM446 477.03H448V479.56H446zM450 477.03H452V479.56H450zM460 477.03H462V479.56H460zM448 479.56H456V482.08H448zM464 479.56H466V482.08H464zM468 479.56H470V482.08H468zM474 479.56H476V482.08H474zM482 479.56H484V482.08H482zM450 482.08H452V484.61H450zM464 482.08H466V484.61H464zM474 482.08H476V484.61H474zM482 482.08H484V484.61H482zM446 484.61H448V487.14H446zM464 484.61H468V487.14H464zM478 484.61H480V487.14H478zM446 487.14H448V489.66H446zM458 487.14H460V489.66H458zM472 487.14H474V489.66H472zM478 487.14H480V489.66H478zM440 489.66H442V492.19H440zM472 489.66H474V492.19H472zM440 492.19H442V494.72H440zM460 492.19H462V494.72H460zM472 492.19H474V494.72H472zM424 494.72H426V497.24H424zM436 494.72H438V497.24H436zM442 494.72H444V497.24H442zM428 497.24H430V499.77H428zM458 497.24H462V499.77H458zM474 497.24H476V499.77H474zM432 499.77H434V502.29H432zM442 499.77H444V502.29H442zM474 499.77H476V502.29H474zM424 502.29H426V504.82H424zM428 502.29H432V504.82H428zM474 502.29H476V504.82H474zM450 504.82H452V507.35H450zM482 504.82H484V507.35H482zM426 507.35H428V509.87H426zM432 507.35H436V509.87H432zM442 507.35H444V509.87H442zM450 507.35H452V509.87H450zM404 509.87H406V512.4H404zM424 509.87H426V512.4H424zM430 509.87H434V512.4H430zM430 512.4H432V514.92H430zM442 512.4H446V514.92H442zM390 514.92H392V517.45H390zM402 514.92H406V517.45H402zM414 514.92H416V517.45H414zM438 514.92H440V517.45H438zM442 514.92H444V517.45H442zM452 514.92H454V517.45H452zM458 514.92H460V517.45H458zM474 514.92H476V517.45H474zM394 517.45H396V519.98H394zM404 517.45H406V519.98H404zM410 517.45H412V519.98H410zM414 517.45H418V519.98H414zM428 517.45H430V519.98H428zM434 517.45H436V519.98H434zM444 517.45H446V519.98H444zM466 517.45H468V519.98H466zM474 517.45H476V519.98H474zM390 519.98H394V522.5H390zM408 519.98H410V522.5H408zM414 519.98H416V522.5H414zM418 519.98H420V522.5H418zM426 519.98H428V522.5H426zM442 519.98H444V522.5H442zM474 519.98H476V522.5H474zM478 519.98H480V522.5H478zM404 522.5H406V525.03H404zM424 522.5H426V525.03H424zM460 522.5H462V525.03H460zM400 525.03H402V527.55H400zM414 525.03H416V527.55H414zM422 525.03H426V527.55H422zM432 525.03H434V527.55H432zM442 525.03H444V527.55H442zM458 525.03H462V527.55H458zM398 527.55H400V530.08H398zM414 527.55H416V530.08H414zM434 527.55H436V530.08H434zM390 530.08H392V532.61H390zM396 530.08H398V532.61H396zM432 530.08H434V532.61H432zM438 530.08H440V532.61H438zM398 532.61H400V535.13H398zM408 532.61H410V535.13H408zM428 532.61H430V535.13H428zM438 532.61H440V535.13H438zM394 535.13H398V537.66H394zM408 535.13H410V537.66H408zM438 535.13H440V537.66H438zM398 537.66H400V540.18H398zM438 540.18H440V542.71H438zM416 542.71H418V545.24H416zM416 545.24H418V547.76H416zM406 547.76H408V550.29H406zM438 547.76H440V550.29H438zM398 557.87H400V560.39H398zM456 557.87H458V560.39H456zM466 567.97H468V570.5H466zM482 570.5H484V573.02H482zM468 573.02H470V575.55H468zM420 575.55H422V578.07H420z"/>
<path fill="#70ff00" d="M470 469.45H472V471.98H470zM454 471.98H456V474.51H454zM470 471.98H472V474.51H470zM448 477.03H450V479.56H448zM462 477.03H464V479.56H462zM466 477.03H468V479.56H466zM470 477.03H472V479.56H470zM456 479.56H458V482.08H456zM476 479.56H480V482.08H476zM446 482.08H448V484.61H446zM466 482.08H468V484.61H466zM470 482.08H474V484.61H470zM476 482.08H480V484.61H476zM452 484.61H454V487.14H452zM456 484.61H458V487.14H456zM482 484.61H484V487.14H482zM452 487.14H454V489.66H452zM456 487.14H458V489.66H456zM466 487.14H468V489.66H466zM474 487.14H476V489.66H474zM452 489.66H454V492.19H452zM468 489.66H470V492.19H468zM458 492.19H460V494.72H458zM464 492.19H466V494.72H464zM470 492.19H472V494.72H470zM446 494.72H448V497.24H446zM452 494.72H454V497.24H452zM458 494.72H460V497.24H458zM472 494.72H476V497.24H472zM478 494.72H480V497.24H478zM426 497.24H428V499.77H426zM434 497.24H436V499.77H434zM446 497.24H448V499.77H446zM452 497.24H454V499.77H452zM456 497.24H458V499.77H456zM464 497.24H468V499.77H464zM472 497.24H474V499.77H472zM476 497.24H480V499.77H476zM434 499.77H436V502.29H434zM452 499.77H454V502.29H452zM456 499.77H460V502.29H456zM468 499.77H474V502.29H468zM478 499.77H480V502.29H478zM482 499.77H484V502.29H482zM436 502.29H438V504.82H436zM450 502.29H452V504.82H450zM456 502.29H458V504.82H456zM482 502.29H484V504.82H482zM424 504.82H432V507.35H424zM444 504.82H446V507.35H444zM458 504.82H466V507.35H458zM472 504.82H476V507.35H472zM478 504.82H480V507.35H478zM428 507.35H430V509.87H428zM436 507.35H438V509.87H436zM444 507.35H446V509.87H444zM448 507.35H450V509.87H448zM456 507.35H458V509.87H456zM466 507.35H468V509.87H466zM474 507.35H476V509.87H474zM428 509.87H430V512.4H428zM434 509.87H436V512.4H434zM440 509.87H442V512.4H440zM444 509.87H446V512.4H444zM452 509.87H454V512.4H452zM460 509.87H462V512.4H460zM464 509.87H466V512.4H464zM470 509.87H472V512.4H470zM418 512.4H420V514.92H418zM426 512.4H428V514.92H426zM434 512.4H438V514.92H434zM472 512.4H474V514.92H472zM482 512.4H484V514.92H482zM410 514.92H412V517.45H410zM424 514.92H426V517.45H424zM430 514.92H436V517.45H430zM460 514.92H462V517.45H460zM464 514.92H466V517.45H464zM476 514.92H478V517.45H476zM482 514.92H484V517.45H482zM400 517.45H402V519.98H400zM412 517.45H414V519.98H412zM424 517.45H426V519.98H424zM440 517.45H442V519.98H440zM450 517.45H452V519.98H450zM456 517.45H458V519.98H456zM472 517.45H474V519.98H472zM402 519.98H406V522.5H402zM462 519.98H464V522.5H462zM470 519.98H472V522.5H470zM412 522.5H416V525.03H412zM426 522.5H430V525.03H426zM468 522.5H470V525.03H468zM390 525.03H392V527.55H390zM408 525.03H410V527.55H408zM416 525.03H418V527.55H416zM426 525.03H428V527.55H426zM434 525.03H436V527.55H434zM470 525.03H472V527.55H470zM474 525.03H476V527.55H474zM482 525.03H484V527.55H482zM390 527.55H396V530.08H390zM402 527.55H406V530.08H402zM420 527.55H422V530.08H420zM426 527.55H428V530.08H426zM432 527.55H434V530.08H432zM394 530.08H396V532.61H394zM404 530.08H406V532.61H404zM408 530.08H410V532.61H408zM442 530.08H444V532.61H442zM460 530.08H462V532.61H460zM406 532.61H408V535.13H406zM410 532.61H412V535.13H410zM420 532.61H424V535.13H420zM398 535.13H402V537.66H398zM404 535.13H406V537.66H404zM414 535.13H420V537.66H414zM422 535.13H424V537.66H422zM428 535.13H432V537.66H428zM444 535.13H446V537.66H444zM390 537.66H394V540.18H390zM420 537.66H424V540.18H420zM432 537.66H434V540.18H432zM444 537.66H446V540.18H444zM392 540.18H394V542.71H392zM396 540.18H398V542.71H396zM432 540.18H434V542.71H432zM396 545.24H398V547.76H396zM406 545.24H408V547.76H406zM432 545.24H434V547.76H432zM446 557.87H448V560.39H446zM458 557.87H460V560.39H458zM458 560.39H460V562.92H458zM390 562.92H392V565.44H390zM448 562.92H450V565.44H448zM390 565.44H392V567.97H390zM414 565.44H416V567.97H414zM420 565.44H422V567.97H420zM458 565.44H460V567.97H458zM456 570.5H458V573.02H456zM434 573.02H436V575.55H434zM468 575.55H470V578.07H468zM454 578.07H456V580.6H454z"/>
<path fill="#8aff00" d="M466 469.45H468V471.98H466zM454 474.51H456V477.03H454zM480 474.51H482V477.03H480zM454 477.03H456V479.56H454zM458 477.03H460V479.56H458zM466 479.56H468V482.08H466zM448 482.08H450V484.61H448zM452 482.08H456V484.61H452zM468 482.08H470V484.61H468zM448 484.61H452V487.14H448zM458 484.61H460V487.14H458zM462 484.61H464V487.14H462zM448 487.14H450V489.66H448zM468 487.14H470V489.66H468zM476 487.14H478V489.66H476zM448 489.66H450V492.19H448zM458 489.66H460V492.19H458zM476 489.66H480V492.19H476zM446 492.19H448V494.72H446zM450 492.19H452V494.72H450zM456 492.19H458V494.72H456zM466 492.19H468V494.72H466zM474 492.19H476V494.72H474zM456 494.72H458V497.24H456zM464 494.72H466V497.24H464zM468 494.72H470V497.24H468zM444 497.24H446V499.77H444zM448 497.24H452V499.77H448zM468 497.24H470V499.77H468zM444 499.77H446V502.29H444zM448 499.77H450V502.29H448zM460 499.77H462V502.29H460zM452 502.29H454V504.82H452zM460 502.29H462V504.82H460zM456 504.82H458V507.35H456zM470 504.82H472V507.35H470zM446 507.35H448V509.87H446zM452 507.35H454V509.87H452zM464 507.35H466V509.87H464zM468 507.35H470V509.87H468zM446 509.87H448V512.4H446zM450 509.87H452V512.4H450zM454 509.87H456V512.4H454zM468 509.87H470V512.4H468zM474 509.87H476V512.4H474zM480 509.87H482V512.4H480zM424 512.4H426V514.92H424zM428 512.4H430V514.92H428zM446 512.4H448V514.92H446zM450 512.4H454V514.92H450zM456 512.4H462V514.92H456zM464 512.4H466V514.92H464zM468 512.4H472V514.92H468zM474 512.4H476V514.92H474zM426 514.92H430V517.45H426zM440 514.92H442V517.45H440zM444 514.92H446V517.45H444zM450 514.92H452V517.45H450zM456 514.92H458V517.45H456zM470 514.92H472V517.45H470zM402 517.45H404V519.98H402zM426 517.45H428V519.98H426zM460 517.45H462V519.98H460zM468 517.45H470V519.98H468zM410 519.98H412V522.5H410zM422 519.98H424V522.5H422zM428 519.98H430V522.5H428zM440 519.98H442V522.5H440zM456 519.98H460V522.5H456zM472 519.98H474V522.5H472zM408 522.5H412V525.03H408zM430 522.5H436V525.03H430zM444 522.5H446V525.03H444zM456 522.5H460V525.03H456zM472 522.5H474V525.03H472zM402 525.03H404V527.55H402zM410 525.03H412V527.55H410zM430 525.03H432V527.55H430zM456 525.03H458V527.55H456zM468 525.03H470V527.55H468zM472 525.03H474V527.55H472zM400 527.55H402V530.08H400zM416 527.55H418V530.08H416zM424 527.55H426V530.08H424zM438 527.55H440V530.08H438zM444 527.55H446V530.08H444zM470 527.55H472V530.08H470zM474 527.55H476V530.08H474zM482 527.55H484V530.08H482zM414 530.08H416V532.61H414zM422 530.08H428V532.61H422zM430 530.08H432V532.61H430zM440 530.08H442V532.61H440zM444 530.08H446V532.61H444zM390 532.61H392V535.13H390zM402 532.61H406V535.13H402zM424 532.61H426V535.13H424zM440 532.61H446V535.13H440zM390 535.13H394V537.66H390zM424 535.13H428V537.66H424zM440 535.13H444V537.66H440zM404 537.66H406V540.18H404zM412 537.66H414V540.18H412zM424 537.66H428V540.18H424zM434 537.66H436V540.18H434zM438 537.66H440V540.18H438zM422 540.18H424V542.71H422zM436 540.18H438V542.71H436zM444 540.18H446V542.71H444zM392 542.71H394V545.24H392zM432 542.71H434V545.24H432zM436 542.71H438V545.24H436zM414 545.24H416V547.76H414zM442 552.81H444V555.34H442zM444 555.34H448V557.87H444zM466 555.34H468V557.87H466zM470 557.87H472V560.39H470zM398 562.92H400V565.44H398zM466 565.44H470V567.97H466zM436 567.97H438V570.5H436zM406 578.07H408V580.6H406z"/>
<path fill="#a5ff00" d="M448 474.51H450V477.03H448zM462 479.56H464V482.08H462zM462 482.08H464V484.61H462zM480 482.08H482V484.61H480zM472 484.61H474V487.14H472zM476 484.61H478V487.14H476zM450 487.14H452V489.66H450zM460 487.14H466V489.66H460zM482 487.14H484V489.66H482zM446 489.66H448V492.19H446zM450 489.66H452V492.19H450zM456 489.66H458V492.19H456zM464 489.66H468V492.19H464zM448 492.19H450V494.72H448zM454 492.19H456V494.72H454zM462 492.19H464V494.72H462zM468 492.19H470V494.72H468zM482 492.19H484V494.72H482zM466 494.72H468V497.24H466zM470 494.72H472V497.24H470zM482 494.72H484V497.24H482zM462 497.24H464V499.77H462zM470 497.24H472V499.77H470zM480 497.24H482V499.77H480zM446 499.77H448V502.29H446zM464 499.77H466V502.29H464zM480 499.77H482V502.29H480zM446 502.29H448V504.82H446zM464 502.29H466V504.82H464zM468 502.29H470V504.82H468zM466 504.82H468V507.35H466zM424 507.35H426V509.87H424zM430 507.35H432V509.87H430zM454 507.35H456V509.87H454zM458 507.35H460V509.87H458zM462 507.35H464V509.87H462zM470 507.35H472V509.87H470zM476 507.35H480V509.87H476zM442 509.87H444V512.4H442zM456 509.87H458V512.4H456zM472 509.87H474V512.4H472zM478 509.87H480V512.4H478zM462 512.4H464V514.92H462zM446 514.92H448V517.45H446zM466 514.92H468V517.45H466zM472 514.92H474V517.45H472zM478 514.92H480V517.45H478zM430 517.45H432V519.98H430zM452 517.45H456V519.98H452zM458 517.45H460V519.98H458zM464 517.45H466V519.98H464zM470 517.45H472V519.98H470zM478 517.45H480V519.98H478zM430 519.98H432V522.5H430zM434 519.98H438V522.5H434zM448 519.98H450V522.5H448zM452 519.98H454V522.5H452zM460 519.98H462V522.5H460zM468 519.98H470V522.5H468zM476 519.98H478V522.5H476zM436 522.5H438V525.03H436zM440 522.5H444V525.03H440zM446 522.5H448V525.03H446zM450 522.5H456V525.03H450zM462 522.5H464V525.03H462zM466 522.5H468V525.03H466zM470 522.5H472V525.03H470zM474 522.5H476V525.03H474zM478 522.5H480V525.03H478zM482 522.5H484V525.03H482zM394 525.03H396V527.55H394zM404 525.03H406V527.55H404zM428 525.03H430V527.55H428zM436 525.03H442V527.55H436zM444 525.03H446V527.55H444zM450 525.03H452V527.55H450zM476 525.03H482V527.55H476zM408 527.55H412V530.08H408zM428 527.55H430V530.08H428zM440 527.55H444V530.08H440zM466 527.55H470V530.08H466zM400 530.08H402V532.61H400zM410 530.08H414V532.61H410zM428 530.08H430V532.61H428zM434 530.08H438V532.61H434zM472 530.08H474V532.61H472zM478 530.08H480V532.61H478zM414 532.61H416V535.13H414zM432 532.61H438V535.13H432zM472 532.61H474V535.13H472zM410 535.13H414V537.66H410zM432 535.13H434V537.66H432zM394 537.66H396V540.18H394zM400 537.66H404V540.18H400zM406 537.66H408V540.18H406zM414 537.66H416V540.18H414zM436 537.66H438V540.18H436zM442 537.66H444V540.18H442zM404 540.18H406V542.71H404zM412 540.18H414V542.71H412zM402 542.71H404V545.24H402zM418 542.71H420V545.24H418zM426 542.71H428V545.24H426zM430 542.71H432V545.24H430zM444 542.71H446V545.24H444zM418 545.24H420V547.76H418zM434 545.24H438V547.76H434zM428 547.76H430V550.29H428zM428 550.29H430V552.81H428zM404 552.81H406V555.34H404zM426 552.81H428V555.34H426zM436 552.81H438V555.34H436zM414 555.34H416V557.87H414zM436 555.34H438V557.87H436zM460 555.34H462V557.87H460zM464 555.34H466V557.87H464zM468 555.34H472V557.87H468zM454 557.87H456V560.39H454zM464 557.87H466V560.39H464zM474 557.87H476V560.39H474zM480 557.87H482V560.39H480zM440 560.39H444V562.92H440zM466 560.39H468V562.92H466zM408 570.5H410V573.02H408zM430 575.55H432V578.07H430z"/>
<path fill="#bfff00" d="M448 471.98H450V474.51H448zM480 477.03H482V479.56H480zM480 479.56H482V482.08H480zM480 484.61H482V487.14H480zM454 487.14H456V489.66H454zM480 487.14H482V489.66H480zM454 489.66H456V492.19H454zM462 489.66H464V492.19H462zM470 489.66H472V492.19H470zM450 494.72H452V497.24H450zM454 494.72H456V497.24H454zM462 494.72H464V497.24H462zM482 497.24H484V499.77H482zM428 499.77H430V502.29H428zM466 499.77H468V502.29H466zM476 499.77H478V502.29H476zM466 502.29H468V504.82H466zM478 502.29H480V504.82H478zM446 504.82H448V507.35H446zM454 504.82H456V507.35H454zM468 504.82H470V507.35H468zM476 504.82H478V507.35H476zM480 504.82H482V507.35H480zM440 507.35H442V509.87H440zM480 507.35H484V509.87H480zM458 509.87H460V512.4H458zM462 509.87H464V512.4H462zM466 509.87H468V512.4H466zM476 509.87H478V512.4H476zM440 512.4H442V514.92H440zM448 512.4H450V514.92H448zM448 514.92H450V517.45H448zM436 517.45H438V519.98H436zM442 517.45H444V519.98H442zM446 517.45H448V519.98H446zM462 517.45H464V519.98H462zM444 519.98H446V522.5H444zM464 519.98H468V522.5H464zM480 519.98H482V522.5H480zM418 522.5H420V525.03H418zM448 522.5H450V525.03H448zM452 525.03H454V527.55H452zM418 527.55H420V530.08H418zM448 527.55H450V530.08H448zM452 527.55H454V530.08H452zM460 527.55H462V530.08H460zM472 527.55H474V530.08H472zM478 527.55H480V530.08H478zM402 530.08H404V532.61H402zM452 530.08H454V532.61H452zM456 530.08H458V532.61H456zM462 530.08H464V532.61H462zM466 530.08H468V532.61H466zM476 530.08H478V532.61H476zM430 532.61H432V535.13H430zM460 532.61H462V535.13H460zM468 532.61H470V535.13H468zM402 535.13H404V537.66H402zM436 535.13H438V537.66H436zM410 537.66H412V540.18H410zM442 540.18H444V542.71H442zM390 542.71H392V545.24H390zM428 542.71H430V545.24H428zM440 542.71H442V545.24H440zM394 547.76H396V550.29H394zM408 547.76H410V550.29H408zM422 547.76H424V550.29H422zM418 550.29H420V552.81H418zM424 550.29H426V552.81H424zM456 552.81H458V555.34H456zM464 552.81H466V555.34H464zM468 552.81H470V555.34H468zM474 552.81H476V555.34H474zM400 555.34H402V557.87H400zM448 557.87H450V560.39H448zM480 560.39H482V562.92H480zM402 565.44H404V567.97H402zM416 565.44H418V567.97H416zM462 565.44H464V567.97H462zM448 578.07H450V580.6H448z"/>
<path fill="#daff00" d="M454 484.61H456V487.14H454zM476 492.19H478V494.72H476zM480 492.19H482V494.72H480zM454 497.24H456V499.77H454zM450 499.77H452V502.29H450zM454 499.77H456V502.29H454zM462 502.29H464V504.82H462zM480 502.29H482V504.82H480zM466 512.4H468V514.92H466zM476 512.4H482V514.92H476zM454 514.92H456V517.45H454zM480 514.92H482V517.45H480zM476 517.45H478V519.98H476zM480 517.45H482V519.98H480zM446 519.98H448V522.5H446zM450 519.98H452V522.5H450zM454 519.98H456V522.5H454zM476 522.5H478V525.03H476zM446 525.03H450V527.55H446zM454 525.03H456V527.55H454zM430 527.55H432V530.08H430zM436 527.55H438V530.08H436zM446 527.55H448V530.08H446zM454 527.55H460V530.08H454zM462 527.55H466V530.08H462zM476 527.55H478V530.08H476zM418 530.08H420V532.61H418zM450 530.08H452V532.61H450zM458 530.08H460V532.61H458zM464 530.08H466V532.61H464zM474 530.08H476V532.61H474zM392 532.61H396V535.13H392zM426 532.61H428V535.13H426zM464 532.61H468V535.13H464zM474 532.61H480V535.13H474zM482 532.61H484V535.13H482zM418 537.66H420V540.18H418zM428 537.66H432V540.18H428zM408 545.24H410V547.76H408zM430 545.24H432V547.76H430zM410 550.29H412V552.81H410zM418 552.81H420V555.34H418zM452 552.81H454V555.34H452zM408 555.34H410V557.87H408zM450 555.34H452V557.87H450zM462 555.34H464V557.87H462zM454 565.44H456V567.97H454zM408 575.55H410V578.07H408z"/>
<path fill="#f4ff00" d="M448 494.72H450V497.24H448zM480 494.72H482V497.24H480zM462 499.77H464V502.29H462zM448 502.29H450V504.82H448zM454 502.29H456V504.82H454zM448 504.82H450V507.35H448zM448 509.87H450V512.4H448zM454 512.4H456V514.92H454zM462 514.92H464V517.45H462zM448 517.45H450V519.98H448zM464 522.5H466V525.03H464zM480 522.5H482V525.03H480zM462 525.03H468V527.55H462zM450 527.55H452V530.08H450zM480 527.55H482V530.08H480zM446 530.08H448V532.61H446zM454 530.08H456V532.61H454zM468 530.08H472V532.61H468zM482 530.08H484V532.61H482zM418 532.61H420V535.13H418zM452 532.61H454V535.13H452zM458 532.61H460V535.13H458zM470 532.61H472V535.13H470zM440 537.66H442V540.18H440zM424 542.71H426V545.24H424zM460 552.81H462V555.34H460zM466 552.81H468V555.34H466zM480 555.34H482V557.87H480zM404 573.02H406V575.55H404z"/>
<path fill="#ffef00" d="M480 489.66H482V492.19H480zM458 502.29H460V504.82H458zM480 530.08H482V532.61H480zM446 532.61H448V535.13H446zM450 532.61H452V535.13H450zM462 532.61H464V535.13H462zM474 535.13H476V537.66H474zM450 550.29H454V552.81H450zM460 550.29H462V552.81H460zM464 550.29H466V552.81H464zM482 550.29H484V552.81H482zM454 552.81H456V555.34H454zM482 552.81H484V555.34H482z"/>
<path fill="#ffd400" d="M448 530.08H450V532.61H448zM454 532.61H456V535.13H454zM480 532.61H482V535.13H480zM450 535.13H454V537.66H450zM456 535.13H462V537.66H456zM470 535.13H474V537.66H470zM476 535.13H478V537.66H476zM482 535.13H484V537.66H482zM460 542.71H462V545.24H460zM446 550.29H448V552.81H446zM456 550.29H460V552.81H456zM462 550.29H464V552.81H462zM466 550.29H472V552.81H466zM474 550.29H480V552.81H474z"/>
<path fill="#ffba00" d="M448 532.61H450V535.13H448zM456 532.61H458V535.13H456zM446 535.13H450V537.66H446zM454 535.13H456V537.66H454zM462 535.13H470V537.66H462zM478 535.13H482V537.66H478zM446 537.66H448V540.18H446zM452 537.66H454V540.18H452zM458 537.66H464V540.18H458zM472 537.66H474V540.18H472zM450 540.18H452V542.71H450zM456 540.18H462V542.71H456zM464 540.18H466V542.71H464zM472 540.18H474V542.71H472zM478 540.18H480V542.71H478zM464 542.71H468V545.24H464zM482 542.71H484V545.24H482zM460 545.24H462V547.76H460zM472 545.24H474V547.76H472zM478 547.76H480V550.29H478zM448 550.29H450V552.81H448zM454 550.29H456V552.81H454zM472 550.29H474V552.81H472zM480 550.29H482V552.81H480z"/>
<path fill="#ff9f00" d="M448 537.66H450V540.18H448zM456 537.66H458V540.18H456zM464 537.66H468V540.18H464zM478 537.66H480V540.18H478zM482 537.66H484V540.18H482zM446 540.18H450V542.71H446zM452 540.18H454V542.71H452zM468 540.18H470V542.71H468zM474 540.18H476V542.71H474zM480 540.18H484V542.71H480zM446 542.71H448V545.24H446zM468 542.71H472V545.24H468zM474 542.71H480V545.24H474zM446 545.24H448V547.76H446zM450 545.24H452V547.76H450zM456 545.24H458V547.76H456zM464 545.24H466V547.76H464zM468 545.24H470V547.76H468zM474 545.24H476V547.76H474zM482 545.24H484V547.76H482zM446 547.76H448V550.29H446zM458 547.76H462V550.29H458zM468 547.76H478V550.29H468zM480 547.76H484V550.29H480z"/>
<path fill="#ff8500" d="M450 537.66H452V540.18H450zM454 537.66H456V540.18H454zM468 537.66H472V540.18H468zM474 537.66H478V540.18H474zM480 537.66H482V540.18H480zM454 540.18H456V542.71H454zM462 540.18H464V542.71H462zM466 540.18H468V542.71H466zM470 540.18H472V542.71H470zM476 540.18H478V542.71H476zM448 542.71H460V545.24H448zM462 542.71H464V545.24H462zM472 542.71H474V545.24H472zM480 542.71H482V545.24H480zM448 545.24H450V547.76H448zM452 545.24H456V547.76H452zM458 545.24H460V547.76H458zM462 545.24H464V547.76H462zM466 545.24H468V547.76H466zM470 545.24H472V547.76H470zM476 545.24H482V547.76H476zM448 547.76H458V550.29H448zM462 547.76H464V550.29H462zM466 547.76H468V550.29H466z"/>
</g>
<path d="M142.5 72.75L144.38 72.75L147.5 78.12L149.38 76.25L151.88 68.12L154.38 64.38L156.25 66.88L158.75 76.25L160.38 87.5L161.88 77.5L163.75 70L166.5 65.38L169.38 68.12L173.75 77.5L176.88 83.12L179.75 87.25L182.5 84L185 82.5L186.88 83.5L189.38 82.25L193.75 81.25L196.25 82.5L198.12 83.12L200 81.88L201.88 82.5L204.38 79.75L210 78.5L215 77.25L220 77.88L223.12 73.75L226.25 70.25L229.38 73.12L231.25 73.12L233.75 68.12L236.25 60L238.12 50L239.62 45.25L241 50L242.5 65L244.38 80L246.25 81.25L247.75 83.5L249.38 77.5L252.5 74.38L256.88 71.25L260 76.25L262.5 80L265 79.38L260 78.75L262.5 79.75L264.38 78.12L266.88 80L269.38 77.5L271.88 79.38L273.75 82.5L276.25 80.62L278.75 82.5L281.88 84.38L286.25 84L291.88 83.12L295.62 82.5L297.5 84.38L303.12 86L306 84.38L309.38 87.5L311.88 87.5L316.25 91.25L321.25 93.12L325 92.5L328.12 93.75L331.88 93.75L336.25 96L340 95L343.12 95.62L345.62 97.5L347.5 95L349.38 93.75L351.25 96.25L355 94.38L357.5 94.38L361.25 91L363.75 90.25L366.25 92.25L368.75 91.25L373.12 86.5L375.62 90L378.75 95L382.5 93.12L385 88.12L387.5 84.38L382.5 93.88L385.62 87L387.75 84.25L390.62 87L392.5 83.88L395.62 74.5L398.75 67.62L400.62 66.38L403.12 70.75L405.62 76.38L409.38 68.25L411.5 66.38L413.75 70.12L416.25 78.88L418.12 75.75L420 64.5L421.88 47L423.75 33.88L426.5 28.25L428.75 33.88L431.25 52L433.75 74.5L435.62 85.75L436.5 87.38L437.75 82L440 62L441.88 44.5L443.75 38.5L445.25 43.25L447.5 62L450 75.75L452.5 83.25L455 85.12L458.75 83.5L467.5 83L473.75 83.5L478.75 81.38L490 80.75L498.75 81L500 80.12L503.75 78.88L506.25 77.62L508.75 79.5L511.25 83.25L513.75 82L516.88 87.62L518.75 83.25L520.62 88.25L523.75 83.88L526.25 80.5L529.38 83.88L532.5 77L534.38 69.75L536.88 73.88L539.38 73.25L541.88 79.5L544.38 81.38L546.88 87L549.38 89.5L553.12 83.5L555.62 86.38L560 87.62L562.5 86.38L566.25 88.25L571.25 92L575 94.5L577.5 96.38L580 90.75L582.5 90.75L586.25 93.25L592.5 93.88L596.88 95.12L600 95.12L605 94.25L612.5 93.88L623.75 93L626.88 94.5L630.62 90.5L636.25 90.5L640 91L648.75 92.62L651.88 94.5L656.25 89.5L661.25 81.38L663.75 80.12L666.25 82.62L668.75 88.25L671.25 93.88L673.75 94.5L675.62 90.75L678.12 80.75L681.25 64.5L685 45.75L687.5 32.62L689.38 27L691.25 34.5L693.5 45.12L695.62 35.75L697.25 30.5L699.38 34.5L701.5 25.75L703.75 18.88" fill="none" stroke="#fff" stroke-width="1.0" stroke-linejoin="round" shape-rendering="crispEdges"/>
<path d="M143.91 130.44L145.47 140.59L146.56 158.56L147.81 182L149.38 207L150.62 185.12L152.19 152.31L153.75 169.5L155.31 208.56L156.88 182L158.44 158.56L160 142.94L161.41 137.47L162.66 169.5L163.75 192.94L165.31 172.62L166.88 147.62L168.12 133.56L169.38 130.44L170.47 153.88L172.03 182L173.59 197.62L175.16 213.25L176.72 203.88L178.28 191.38L179.84 199.19L181.41 208.56L183.75 214.81L186.88 213.25L190 208.56L193.91 206.22L197.81 208.56L200.94 214.03L204.06 215.59L208.75 214.81L213.44 214.81L218.12 215.59L222.81 215.59L225.16 214.81L228.28 205.44L231.41 201.22L234.53 207L237.66 211.69L239.22 203.88L240.78 185.12L242.34 161.69L243.44 141.38L244.38 128.56L245.47 150.75L246.56 185.12L247.81 211.69L248.59 191.38L250.16 172.62L251.25 185.12L252.5 183.56L254.06 180.44L256.41 186.69L258.75 199.19L261.09 211.69L262.66 215.59L265 207L266.56 202.31L269.69 197.62L272.81 198.41L275.94 196.84L279.84 199.97L283.75 196.06L287.66 199.97L290 196.84L292.34 196.06L295.47 190.59L297.81 197.62L300.16 207L303.28 196.06L305.62 180.44L307.5 174.19L309.06 182L311.09 197.62L313.12 196.06L314.22 188.25L316.56 194.5L318.91 199.97L322.03 192.16L324.38 194.5L327.5 189.81L330.31 183.56L332.5 192.94L334.53 205.44L336.88 214.81L338.12 188.25L339.22 169.5L340.31 165.59L341.56 182L342.81 191.38L344.38 167.94L345.47 182L347.03 196.06L348.59 185.12L349.69 166.38L350.94 146.06L352.5 137.47L353.75 158.56L355.31 178.88L356.88 169.5L358.44 150.75L360 133.56L361.88 125.44L363.75 138.25L366.25 153.09L368.12 149.19L370 135.91L371.56 147.62L373.59 125.44L375.16 136.69L376.72 147.62L378.28 158.56L379.84 175.75L381.41 194.5L382.97 211.69L384.22 194.5L385.62 169.5L386.88 153.88L388.12 172.62L389.22 194.5L390.31 211.69L391.56 197.62L392.81 185.12L394.38 196.06L396.25 213.25L397.81 207L399.38 186.69L400.94 182L402.19 194.5L403.28 210.12L404.84 197.62L406.41 182L407.97 166.38L410 156.69L411.56 161.69L413.44 172.62L415 189.81L416.25 200.75L417.34 182L418.44 158.56L419.69 140.59L420.94 174.19L422.5 210.12L424.06 188.25L425.16 169.5L425.94 147.62L427.19 139.81L428.28 164.81L429.84 200.75L431.41 182L432.5 157L434.06 141.38L436.09 126.53L437.66 153.88L439.22 185.12L440 213.25L441.25 207L442.34 182L443.91 153.88L445.94 142.62L447.03 161.69L448.12 182L449.38 200.75L450.62 210.12L452.19 202.31L453.75 207L455.62 214.81L458.75 210.91L462.66 205.44L465.78 209.34L469.69 214.81L472.03 207L473.59 201.53L475.62 207L478.28 210.91L482.19 213.25L486.09 211.38L490 214.03L493.91 216.38L498.59 214.03L502.5 216.38L507.19 214.81L511.88 213.25L516.56 214.81L520.47 214.81L522.03 207L523.59 200.75L525.62 207L527.5 204.66L529.84 203.88L531.41 200.75L532.97 196.06L534.53 188.25L536.09 177.31L537.66 166.38L539.69 156.69L541.25 164.81L542.81 172.62L544.38 166.38L545.47 160.91L547.03 175.75L548.59 186.69L549.69 194.5L550.94 178.09L552.19 194.5L553.75 210.12L555.62 200.75L557.5 208.56L559.53 199.19L560.62 192.62L562.19 203.88L564.22 213.25L566.25 214.81L567.81 207L568.91 197.62L570 207L571.25 188.25L572.5 179.66L574.06 196.06L575.62 210.12L577.19 213.25L579.06 207L580.62 200.75L582.19 196.53L583.75 203.88L585.62 213.25L587.66 202.31L589.22 197.62L590 200.75L592.34 200.75L594.69 196.06L597.5 189.03L599.06 196.06L600.62 207L602.19 194.5L604.38 178.09L605.94 186.69L607.97 199.19L610 202.31L611.88 194.5L613.75 180.44L616.25 169.5L617.81 175.75L619.69 182L621.56 179.66L623.59 188.25L625.62 180.44L627.19 199.19L628.75 210.12L629.84 182L630.94 167.94L632.97 160.44L635 163.25L636.88 171.06L639.22 170.28L641.25 175.75L642.81 191.38L644.38 207L646.56 212.47L648.12 203.88L650.16 194.5L651.72 182L652.81 169.5L654.06 149.19L655.31 132L656.88 144.5L658.75 142.16L661.09 137.47L663.12 128.09L664.69 135.12L666.25 147.62L667.81 172.62L668.91 194.5L670 210.12L670.94 182L672.03 163.25L673.12 151.53L674.38 182L675.62 203.88L676.72 186.69L678.75 185.12L680.94 189.81L682.97 178.88L685 169.5L687.19 164.81L689.22 160.12L690.78 146.06L691.88 136.69L693.12 147.62L694.38 169.5L695.94 188.25L697.5 210.91L698.59 194.5L700.16 172.62L701.72 155.44L702.81 144.5L703.75 139.03L704.84 153.88L705.94 178.88" fill="none" stroke="#f00" stroke-width="1" stroke-linejoin="round" shape-rendering="crispEdges"/>
<path d="M143.91 130.44L145.47 138.25L147.03 153.88L148.59 166.38L150.16 177.31L151.25 194.5L152.5 203.88L154.06 191.38L155.62 185.12L157.5 184.34L159.06 191.38L160.62 200.75L162.19 207L163.75 211.69L165.78 214.81L167.34 207L168.44 182L169.38 153.88L170.47 139.03L172.03 144.5L173.59 158.56L175.62 169.5L178.28 174.19L180.31 167.94L182.19 160.12L185.31 157L187.66 152.31L190 147.94L193.44 144.5L197.03 148.88L200.94 151.06L203.75 148.41L206.41 149.97L209.53 147.31L212.19 144.5L215.78 147.31L218.91 146.06L222.81 143.25L225.94 146.84L229.06 149.19L232.19 149.97L235.31 146.84L239.22 142.94L242.34 139.03L243.91 136.69L245 144.5L245.94 163.25L248.12 157.78L248.59 169.5L249.38 199.19L250.62 182L252.5 178.09L254.84 177.31L257.19 179.66L259.53 184.34L261.88 192.16L264.22 192.94L267.34 190.59L268.91 196.06L271.25 197.62L273.59 199.19L275.94 201.53L278.28 199.19L280.62 200.75L283.75 198.41L286.09 200.75L288.44 204.66L290 207L293.91 209.34L297.03 203.88L299.38 203.88L301.72 200.75L304.06 201.53L306.41 203.88L307.97 194.5L310.31 185.12L313.44 174.66L314.69 188.25L317.34 194.5L320.47 200.75L322.81 206.22L325.16 203.88L328.28 208.56L331.41 203.88L334.53 205.44L337.66 213.25L339.22 194.5L340.78 182L342.34 169.5L343.44 158.56L344.69 151.53L345.94 160.12L347.03 182L348.12 196.06L349.06 175.75L350.16 157L351.25 143.72L352.5 153.88L353.28 172.62L354.84 182.78L356.41 175.75L357.97 167.94L359.06 146.06L361.09 133.56L362.19 164.81L363.12 203.88L364.22 214.81L365.78 207L368.12 202.31L369.69 194.5L370.47 166.38L372.03 152.31L373.12 175.75L374.38 192.94L376.72 188.25L379.06 185.12L380.31 166.38L381.88 142.94L383.44 130.44L384.53 122.31L386.09 135.12L387.66 150.75L390 158.56L391.88 166.38L393.12 175.75L394.69 191.38L396.25 199.19L398.12 205.44L399.69 194.5L401.72 185.12L403.75 183.56L405.94 185.91L407.97 174.97L409.53 182L411.09 194.5L412.66 205.44L414.22 213.25L415.78 203.88L416.88 191.38L417.81 160.12L418.91 135.12L420 119.5L422.03 117.16L424.06 118.72L425.16 127.31L426.25 146.06L427.19 174.19L428.28 197.62L429.84 207L431.41 213.25L433.44 216.38L435 207L436.09 185.12L436.88 153.88L437.66 132.78L438.44 149.19L439.22 169.5L440 172.62L440.78 200.75L442.34 207L443.91 203.88L445 191.38L446.25 166.38L447.5 149.19L448.59 153.88L449.69 166.38L452.19 174.97L454.06 169.5L455.62 164.81L457.97 164.03L461.09 160.91L463.44 157L466.56 152.31L469.38 147.62L472.03 137.47L474.38 134.34L477.5 131.22L480.31 129.34L483.75 130.44L486.09 129.66L489.69 132.31L492.34 131.22L495.47 134.34L498.59 131.53L501.72 134.34L504.84 138.25L507.97 141.38L511.09 146.06L514.22 152.31L516.88 161.69L519.69 164.81L521.25 171.06L522.81 174.19L524.38 188.25L525.94 203.88L527.5 214.81L529.38 214.81L530.94 207L532.5 197.62L534.53 180.44L536.88 163.25L538.75 149.19L540.78 138.25L542.34 127.31L544.38 119.5L545.47 128.88L547.03 138.25L548.59 139.03L550.62 145.28L552.81 147.62L554.84 142.16L557.19 141.38L559.53 139.03L561.88 133.56L564.69 131.22L567.34 135.12L569.38 149.97L570.94 132.78L572.5 124.19L573.59 138.25L575.16 155.44L576.25 141.38L577.81 135.91L579.38 146.84L581.41 128.88L582.5 142.94L584.53 149.19L586.88 154.66L589.22 158.56L590 168.72L591.56 175.75L593.44 181.22L595.47 175.75L597.81 167.94L600.16 160.12L601.72 146.06L603.28 141.38L604.84 152.31L607.19 156.22L609.53 160.91L611.56 165.59L613.44 167.16L615 157L616.88 146.06L618.91 136.69L621.25 127.31L623.59 124.19L624.69 121.06L625.94 138.25L627.5 143.72L629.06 152.31L630.31 166.38L631.41 177.31L632.97 188.25L635 197.62L637.66 199.19L640 202.31L642.34 198.41L644.69 203.88L647.03 199.19L649.38 201.53L651.72 199.19L653.28 199.19L654.38 203.88L655.31 169.5L656.41 138.25L657.97 125.75L660.62 117.94L662.66 122.62L664.69 130.44L666.56 129.66L668.91 125.75L671.25 119.5L672.5 138.25L673.12 166.38L674.38 178.88L676.72 182L679.06 185.12L681.41 188.25L683.75 192.94L686.09 188.25L688.44 185.12L690.31 183.56L691.56 166.38L692.81 138.25L694.38 119.5L696.25 125.75L698.12 135.12L700.16 144.5L702.19 153.88L703.28 182L704.84 200.75L705.94 215.59" fill="none" stroke="#0f0" stroke-width="1" stroke-linejoin="round" shape-rendering="crispEdges"/>
<path d="M142.03 430.16L161.58 430.16L180.63 431.43L203.48 433.97L228.88 437.27L254.27 441.08L279.66 445.39L305.06 450.98L330.45 457.33L355.85 464.44L381.24 472.56L390 476.25L421.25 491.25L452.5 505.31L483.75 520L515 537.5L546.25 555.31L565 565.62L577.5 570.94L586.88 574.69L596.25 576.88L605.62 577.5L615 576.88L624.38 574.69L640 568.75L655.62 560.62L671.25 551.56L686.88 541.88L704.06 531.25" fill="none" stroke="#fff" stroke-width="1.0" stroke-linejoin="round" shape-rendering="crispEdges"/>
<path d="M142 13.5H704.5V98.5H142ZM144 106.6H706.5V217.8H144ZM142 300.6H705V392.5H142ZM142 395.4H705V581.6H142Z" fill="none" stroke="#fff" stroke-width="1.3"/>
<path d="M160.84 13.5V19M160.84 98.5V93M179.68 13.5V19M179.68 98.5V93M198.52 13.5V19M198.52 98.5V93M217.36 13.5V19M217.36 98.5V93M236.2 13.5V21.8M236.2 98.5V90.2M255.04 13.5V19M255.04 98.5V93M273.88 13.5V19M273.88 98.5V93M292.72 13.5V19M292.72 98.5V93M311.56 13.5V19M311.56 98.5V93M330.4 13.5V21.8M330.4 98.5V90.2M349.24 13.5V19M349.24 98.5V93M368.08 13.5V19M368.08 98.5V93M386.92 13.5V19M386.92 98.5V93M405.76 13.5V19M405.76 98.5V93M424.6 13.5V21.8M424.6 98.5V90.2M443.44 13.5V19M443.44 98.5V93M462.28 13.5V19M462.28 98.5V93M481.12 13.5V19M481.12 98.5V93M499.96 13.5V19M499.96 98.5V93M518.8 13.5V21.8M518.8 98.5V90.2M537.64 13.5V19M537.64 98.5V93M556.48 13.5V19M556.48 98.5V93M575.32 13.5V19M575.32 98.5V93M594.16 13.5V19M594.16 98.5V93M613 13.5V21.8M613 98.5V90.2M631.84 13.5V19M631.84 98.5V93M650.68 13.5V19M650.68 98.5V93M669.52 13.5V19M669.52 98.5V93M688.36 13.5V19M688.36 98.5V93M162.84 106.6V112.1M162.84 217.8V212.3M181.68 106.6V112.1M181.68 217.8V212.3M200.52 106.6V112.1M200.52 217.8V212.3M219.36 106.6V112.1M219.36 217.8V212.3M238.2 106.6V114.9M238.2 217.8V209.5M257.04 106.6V112.1M257.04 217.8V212.3M275.88 106.6V112.1M275.88 217.8V212.3M294.72 106.6V112.1M294.72 217.8V212.3M313.56 106.6V112.1M313.56 217.8V212.3M332.4 106.6V114.9M332.4 217.8V209.5M351.24 106.6V112.1M351.24 217.8V212.3M370.08 106.6V112.1M370.08 217.8V212.3M388.92 106.6V112.1M388.92 217.8V212.3M407.76 106.6V112.1M407.76 217.8V212.3M426.6 106.6V114.9M426.6 217.8V209.5M445.44 106.6V112.1M445.44 217.8V212.3M464.28 106.6V112.1M464.28 217.8V212.3M483.12 106.6V112.1M483.12 217.8V212.3M501.96 106.6V112.1M501.96 217.8V212.3M520.8 106.6V114.9M520.8 217.8V209.5M539.64 106.6V112.1M539.64 217.8V212.3M558.48 106.6V112.1M558.48 217.8V212.3M577.32 106.6V112.1M577.32 217.8V212.3M596.16 106.6V112.1M596.16 217.8V212.3M615 106.6V114.9M615 217.8V209.5M633.84 106.6V112.1M633.84 217.8V212.3M652.68 106.6V112.1M652.68 217.8V212.3M671.52 106.6V112.1M671.52 217.8V212.3M690.36 106.6V112.1M690.36 217.8V212.3M160.84 300.6V306.1M160.84 392.5V387M179.68 300.6V306.1M179.68 392.5V387M198.52 300.6V306.1M198.52 392.5V387M217.36 300.6V306.1M217.36 392.5V387M236.2 300.6V308.9M236.2 392.5V384.2M255.04 300.6V306.1M255.04 392.5V387M273.88 300.6V306.1M273.88 392.5V387M292.72 300.6V306.1M292.72 392.5V387M311.56 300.6V306.1M311.56 392.5V387M330.4 300.6V308.9M330.4 392.5V384.2M349.24 300.6V306.1M349.24 392.5V387M368.08 300.6V306.1M368.08 392.5V387M386.92 300.6V306.1M386.92 392.5V387M405.76 300.6V306.1M405.76 392.5V387M424.6 300.6V308.9M424.6 392.5V384.2M443.44 300.6V306.1M443.44 392.5V387M462.28 300.6V306.1M462.28 392.5V387M481.12 300.6V306.1M481.12 392.5V387M499.96 300.6V306.1M499.96 392.5V387M518.8 300.6V308.9M518.8 392.5V384.2M537.64 300.6V306.1M537.64 392.5V387M556.48 300.6V306.1M556.48 392.5V387M575.32 300.6V306.1M575.32 392.5V387M594.16 300.6V306.1M594.16 392.5V387M613 300.6V308.9M613 392.5V384.2M631.84 300.6V306.1M631.84 392.5V387M650.68 300.6V306.1M650.68 392.5V387M669.52 300.6V306.1M669.52 392.5V387M688.36 300.6V306.1M688.36 392.5V387M160.84 395.4V400.9M160.84 581.6V576.1M179.68 395.4V400.9M179.68 581.6V576.1M198.52 395.4V400.9M198.52 581.6V576.1M217.36 395.4V400.9M217.36 581.6V576.1M236.2 395.4V403.7M236.2 581.6V573.3M255.04 395.4V400.9M255.04 581.6V576.1M273.88 395.4V400.9M273.88 581.6V576.1M292.72 395.4V400.9M292.72 581.6V576.1M311.56 395.4V400.9M311.56 581.6V576.1M330.4 395.4V403.7M330.4 581.6V573.3M349.24 395.4V400.9M349.24 581.6V576.1M368.08 395.4V400.9M368.08 581.6V576.1M386.92 395.4V400.9M386.92 581.6V576.1M405.76 395.4V400.9M405.76 581.6V576.1M424.6 395.4V403.7M424.6 581.6V573.3M443.44 395.4V400.9M443.44 581.6V576.1M462.28 395.4V400.9M462.28 581.6V576.1M481.12 395.4V400.9M481.12 581.6V576.1M499.96 395.4V400.9M499.96 581.6V576.1M518.8 395.4V403.7M518.8 581.6V573.3M537.64 395.4V400.9M537.64 581.6V576.1M556.48 395.4V400.9M556.48 581.6V576.1M575.32 395.4V400.9M575.32 581.6V576.1M594.16 395.4V400.9M594.16 581.6V576.1M613 395.4V403.7M613 581.6V573.3M631.84 395.4V400.9M631.84 581.6V576.1M650.68 395.4V400.9M650.68 581.6V576.1M669.52 395.4V400.9M669.52 581.6V576.1M688.36 395.4V400.9M688.36 581.6V576.1M142 98.5H132M142 92.77H135.5M142 89.41H135.5M142 87.03H135.5M142 85.18H135.5M142 83.68H135.5M142 82.4H135.5M142 81.3H135.5M142 80.32H135.5M142 79.45H132M142 73.72H135.5M142 70.36H135.5M142 67.98H135.5M142 66.13H135.5M142 64.63H135.5M142 63.35H135.5M142 62.25H135.5M142 61.27H135.5M142 60.4H132M142 54.67H135.5M142 51.31H135.5M142 48.93H135.5M142 47.08H135.5M142 45.58H135.5M142 44.3H135.5M142 43.2H135.5M142 42.22H135.5M142 41.35H132M142 35.62H135.5M142 32.26H135.5M142 29.88H135.5M142 28.03H135.5M142 26.53H135.5M142 25.25H135.5M142 24.15H135.5M142 23.17H135.5M142 22.3H132M142 16.57H135.5M142 13.21H135.5M704.5 98.5H714M704.5 96.07H710M704.5 93.64H710M704.5 91.21H710M704.5 88.79H710M704.5 86.36H710M704.5 83.93H710M704.5 81.5H714M704.5 79.07H710M704.5 76.64H710M704.5 74.21H710M704.5 71.79H710M704.5 69.36H710M704.5 66.93H710M704.5 64.5H714M704.5 62.07H710M704.5 59.64H710M704.5 57.21H710M704.5 54.79H710M704.5 52.36H710M704.5 49.93H710M704.5 47.5H714M704.5 45.07H710M704.5 42.64H710M704.5 40.21H710M704.5 37.79H710M704.5 35.36H710M704.5 32.93H710M704.5 30.5H714M704.5 28.07H710M704.5 25.64H710M704.5 23.21H710M704.5 20.79H710M704.5 18.36H710M704.5 15.93H710M704.5 13.5H714M144 217.8H134M144 215.58H137.5M144 213.35H137.5M144 211.13H137.5M144 208.9H137.5M144 206.68H137.5M144 204.46H137.5M144 202.23H137.5M144 200.01H137.5M144 197.78H137.5M144 195.56H134M144 193.34H137.5M144 191.11H137.5M144 188.89H137.5M144 186.66H137.5M144 184.44H137.5M144 182.22H137.5M144 179.99H137.5M144 177.77H137.5M144 175.54H137.5M144 173.32H134M144 171.1H137.5M144 168.87H137.5M144 166.65H137.5M144 164.42H137.5M144 162.2H137.5M144 159.98H137.5M144 157.75H137.5M144 155.53H137.5M144 153.3H137.5M144 151.08H134M144 148.86H137.5M144 146.63H137.5M144 144.41H137.5M144 142.18H137.5M144 139.96H137.5M144 137.74H137.5M144 135.51H137.5M144 133.29H137.5M144 131.06H137.5M144 128.84H134M144 126.62H137.5M144 124.39H137.5M144 122.17H137.5M144 119.94H137.5M144 117.72H137.5M144 115.5H137.5M144 113.27H137.5M144 111.05H137.5M144 108.82H137.5M144 106.6H134M706.5 217.8H716M706.5 215.58H712.5M706.5 213.35H712.5M706.5 211.13H712.5M706.5 208.9H712.5M706.5 206.68H712.5M706.5 204.46H712.5M706.5 202.23H712.5M706.5 200.01H712.5M706.5 197.78H712.5M706.5 195.56H716M706.5 193.34H712.5M706.5 191.11H712.5M706.5 188.89H712.5M706.5 186.66H712.5M706.5 184.44H712.5M706.5 182.22H712.5M706.5 179.99H712.5M706.5 177.77H712.5M706.5 175.54H712.5M706.5 173.32H716M706.5 171.1H712.5M706.5 168.87H712.5M706.5 166.65H712.5M706.5 164.42H712.5M706.5 162.2H712.5M706.5 159.98H712.5M706.5 157.75H712.5M706.5 155.53H712.5M706.5 153.3H712.5M706.5 151.08H716M706.5 148.86H712.5M706.5 146.63H712.5M706.5 144.41H712.5M706.5 142.18H712.5M706.5 139.96H712.5M706.5 137.74H712.5M706.5 135.51H712.5M706.5 133.29H712.5M706.5 131.06H712.5M706.5 128.84H716M706.5 126.62H712.5M706.5 124.39H712.5M706.5 122.17H712.5M706.5 119.94H712.5M706.5 117.72H712.5M706.5 115.5H712.5M706.5 113.27H712.5M706.5 111.05H712.5M706.5 108.82H712.5M706.5 106.6H716M142 392.12H135.5M142 390.25H135.5M142 388.66H135.5M142 387.29H135.5M142 386.08H135.5M142 385H132M142 377.88H135.5M142 373.72H135.5M142 370.76H135.5M142 368.47H135.5M142 366.6H135.5M142 365.01H135.5M142 363.64H135.5M142 362.43H135.5M142 361.35H132M142 354.23H135.5M142 350.07H135.5M142 347.11H135.5M142 344.82H135.5M142 342.95H135.5M142 341.36H135.5M142 339.99H135.5M142 338.78H135.5M142 337.7H132M142 330.58H135.5M142 326.42H135.5M142 323.46H135.5M142 321.17H135.5M142 319.3H135.5M142 317.71H135.5M142 316.34H135.5M142 315.13H135.5M142 314.05H132M142 306.93H135.5M142 302.77H135.5M142 581.6H132M142 562.97H135.5M142 552.07H135.5M142 544.33H135.5M142 538.33H135.5M142 533.43H135.5M142 529.29H135.5M142 525.7H135.5M142 522.53H135.5M142 519.7H132M142 501.07H135.5M142 490.17H135.5M142 482.43H135.5M142 476.43H135.5M142 471.53H135.5M142 467.39H135.5M142 463.8H135.5M142 460.63H135.5M142 457.8H132M142 439.17H135.5M142 428.27H135.5M142 420.53H135.5M142 414.53H135.5M142 409.63H135.5M142 405.49H135.5M142 401.9H135.5M142 398.73H135.5M142 395.9H132M705 581.6H714.5M705 577.88H711M705 574.15H711M705 570.43H711M705 566.7H711M705 562.98H711M705 559.26H711M705 555.53H711M705 551.81H711M705 548.08H711M705 544.36H714.5M705 540.64H711M705 536.91H711M705 533.19H711M705 529.46H711M705 525.74H711M705 522.02H711M705 518.29H711M705 514.57H711M705 510.84H711M705 507.12H714.5M705 503.4H711M705 499.67H711M705 495.95H711M705 492.22H711M705 488.5H711M705 484.78H711M705 481.05H711M705 477.33H711M705 473.6H711M705 469.88H714.5M705 466.16H711M705 462.43H711M705 458.71H711M705 454.98H711M705 451.26H711M705 447.54H711M705 443.81H711M705 440.09H711M705 436.36H711M705 432.64H714.5M705 428.92H711M705 425.19H711M705 421.47H711M705 417.74H711M705 414.02H711M705 410.3H711M705 406.57H711M705 402.85H711M705 399.12H711M705 395.4H714.5" fill="none" stroke="#fff" stroke-width="1" shape-rendering="crispEdges"/>
<g fill="#fff" opacity="0.999">
<text x="142.2" y="10.3" font-size="11.6" textLength="11.2" lengthAdjust="spacingAndGlyphs" stroke="#fff" stroke-width="0.2">ER</text>
<text x="110.8" y="26.1" font-size="13" textLength="12.2" lengthAdjust="spacingAndGlyphs" stroke="#fff" stroke-width="0.2">10</text><text x="124.3" y="19.99" font-size="8.58" textLength="5.32" lengthAdjust="spacingAndGlyphs" stroke="#fff" stroke-width="0.3">4</text>
<text x="110.8" y="45.15" font-size="13" textLength="12.2" lengthAdjust="spacingAndGlyphs" stroke="#fff" stroke-width="0.2">10</text><text x="124.3" y="39.04" font-size="8.58" textLength="5.32" lengthAdjust="spacingAndGlyphs" stroke="#fff" stroke-width="0.3">3</text>
<text x="110.8" y="64.2" font-size="13" textLength="12.2" lengthAdjust="spacingAndGlyphs" stroke="#fff" stroke-width="0.2">10</text><text x="124.3" y="58.09" font-size="8.58" textLength="5.32" lengthAdjust="spacingAndGlyphs" stroke="#fff" stroke-width="0.3">2</text>
<text x="110.8" y="83.25" font-size="13" textLength="12.2" lengthAdjust="spacingAndGlyphs" stroke="#fff" stroke-width="0.2">10</text><text x="124.3" y="77.14" font-size="8.58" textLength="5.32" lengthAdjust="spacingAndGlyphs" stroke="#fff" stroke-width="0.3">1</text>
<text x="718" y="85.2" font-size="13" textLength="15" lengthAdjust="spacingAndGlyphs" stroke="#fff" stroke-width="0.2">30</text>
<text x="718" y="68.2" font-size="13" textLength="15" lengthAdjust="spacingAndGlyphs" stroke="#fff" stroke-width="0.2">60</text>
<text x="718" y="51.2" font-size="13" textLength="15" lengthAdjust="spacingAndGlyphs" stroke="#fff" stroke-width="0.2">90</text>
<text x="718" y="34.2" font-size="13" textLength="19.3" lengthAdjust="spacingAndGlyphs" stroke="#fff" stroke-width="0.2">120</text>
<text x="718" y="17.2" font-size="13" textLength="19.3" lengthAdjust="spacingAndGlyphs" stroke="#fff" stroke-width="0.2">150</text>
<text transform="translate(81.6 55.3) rotate(-90)" font-size="10.3" text-anchor="middle" textLength="67" lengthAdjust="spacingAndGlyphs" stroke="#fff" stroke-width="0.25">Electron Volts</text>
<text transform="translate(91 55.5) rotate(-90)" font-size="7.5" text-anchor="middle" textLength="10" lengthAdjust="spacingAndGlyphs" stroke="#fff" stroke-width="0.35">eV</text>
<text transform="translate(787 55.5) rotate(90)" font-size="13" text-anchor="middle" textLength="75" lengthAdjust="spacingAndGlyphs" stroke="#fff" stroke-width="0.2">Sensor Data</text>
<text transform="translate(776.2 55.5) rotate(90)" font-size="13" text-anchor="middle" textLength="36" lengthAdjust="spacingAndGlyphs" stroke="#fff" stroke-width="0.2">BTotal</text>
<text transform="translate(764 55.5) rotate(90)" font-size="13" text-anchor="middle" textLength="66" lengthAdjust="spacingAndGlyphs" stroke="#fff" stroke-width="0.2">Nanoteslas</text>
<text transform="translate(752.2 55.5) rotate(90)" font-size="13" text-anchor="middle" textLength="66" lengthAdjust="spacingAndGlyphs" stroke="#fff" stroke-width="0.2">Nanoteslas</text>
<text x="130" y="221.2" font-size="13" text-anchor="end" textLength="7" lengthAdjust="spacingAndGlyphs" stroke="#fff" stroke-width="0.2">0</text>
<text x="130" y="198.96" font-size="13" text-anchor="end" textLength="14.6" lengthAdjust="spacingAndGlyphs" stroke="#fff" stroke-width="0.2">20</text>
<text x="130" y="176.72" font-size="13" text-anchor="end" textLength="14.6" lengthAdjust="spacingAndGlyphs" stroke="#fff" stroke-width="0.2">40</text>
<text x="130" y="154.48" font-size="13" text-anchor="end" textLength="14.6" lengthAdjust="spacingAndGlyphs" stroke="#fff" stroke-width="0.2">60</text>
<text x="130" y="132.24" font-size="13" text-anchor="end" textLength="14.6" lengthAdjust="spacingAndGlyphs" stroke="#fff" stroke-width="0.2">80</text>
<text x="130" y="110" font-size="13" text-anchor="end" textLength="19.8" lengthAdjust="spacingAndGlyphs" stroke="#fff" stroke-width="0.2">100</text>
<text x="719.8" y="221.2" font-size="13" textLength="7.3" lengthAdjust="spacingAndGlyphs" stroke="#fff" stroke-width="0.2">0</text>
<text x="719.8" y="198.96" font-size="13" textLength="15.2" lengthAdjust="spacingAndGlyphs" stroke="#fff" stroke-width="0.2">40</text>
<text x="719.8" y="176.72" font-size="13" textLength="15.2" lengthAdjust="spacingAndGlyphs" stroke="#fff" stroke-width="0.2">80</text>
<text x="719.8" y="154.48" font-size="13" textLength="20.6" lengthAdjust="spacingAndGlyphs" stroke="#fff" stroke-width="0.2">120</text>
<text x="719.8" y="132.24" font-size="13" textLength="20.6" lengthAdjust="spacingAndGlyphs" stroke="#fff" stroke-width="0.2">160</text>
<text x="719.8" y="110" font-size="13" textLength="23.6" lengthAdjust="spacingAndGlyphs" stroke="#fff" stroke-width="0.2">200</text>
<text transform="translate(45.2 162.2) rotate(-90)" font-size="16.6" text-anchor="middle" textLength="96.7" lengthAdjust="spacingAndGlyphs" fill="#f00">Sensor Data</text>
<text transform="translate(60.3 162.2) rotate(-90)" font-size="16.6" text-anchor="middle" textLength="74.7" lengthAdjust="spacingAndGlyphs" fill="#f00">Tip Angle</text>
<text transform="translate(76 162.2) rotate(-90)" font-size="16.6" text-anchor="middle" textLength="61.7" lengthAdjust="spacingAndGlyphs" fill="#f00">Degrees</text>
<text transform="translate(91.5 162.2) rotate(-90)" font-size="16.6" text-anchor="middle" textLength="61.7" lengthAdjust="spacingAndGlyphs" fill="#f00">Degrees</text>
<text transform="translate(809.2 161.3) rotate(90)" font-size="16.6" text-anchor="middle" textLength="97" lengthAdjust="spacingAndGlyphs" fill="#0f0">Sensor Data</text>
<text transform="translate(793.4 162.2) rotate(90)" font-size="16.6" text-anchor="middle" textLength="94" lengthAdjust="spacingAndGlyphs" fill="#0f0">Clock Angle</text>
<text transform="translate(777.5 162.2) rotate(90)" font-size="16.6" text-anchor="middle" textLength="62" lengthAdjust="spacingAndGlyphs" fill="#0f0">Degrees</text>
<text transform="translate(762 162.2) rotate(90)" font-size="16.6" text-anchor="middle" textLength="62" lengthAdjust="spacingAndGlyphs" fill="#0f0">Degrees</text>
<text x="108.3" y="228.9" font-size="9.2" text-anchor="end" textLength="48.5" lengthAdjust="spacingAndGlyphs" stroke="#fff" stroke-width="0.35">2005/303</text>
<text x="144" y="228.9" font-size="9.2" text-anchor="middle" textLength="25.8" lengthAdjust="spacingAndGlyphs" stroke="#fff" stroke-width="0.35">06:57</text>
<text x="238.2" y="228.9" font-size="9.2" text-anchor="middle" textLength="25.8" lengthAdjust="spacingAndGlyphs" stroke="#fff" stroke-width="0.35">07:37</text>
<text x="332.4" y="228.9" font-size="9.2" text-anchor="middle" textLength="25.8" lengthAdjust="spacingAndGlyphs" stroke="#fff" stroke-width="0.35">08:17</text>
<text x="426.6" y="228.9" font-size="9.2" text-anchor="middle" textLength="25.8" lengthAdjust="spacingAndGlyphs" stroke="#fff" stroke-width="0.35">08:57</text>
<text x="520.8" y="228.9" font-size="9.2" text-anchor="middle" textLength="25.8" lengthAdjust="spacingAndGlyphs" stroke="#fff" stroke-width="0.35">09:37</text>
<text x="615" y="228.9" font-size="9.2" text-anchor="middle" textLength="25.8" lengthAdjust="spacingAndGlyphs" stroke="#fff" stroke-width="0.35">10:17</text>
<text x="108.3" y="240.9" font-size="9.2" text-anchor="end" textLength="48" lengthAdjust="spacingAndGlyphs" stroke="#fff" stroke-width="0.35">SZA (deg)</text>
<text x="144" y="240.9" font-size="9.2" text-anchor="middle" textLength="28.5" lengthAdjust="spacingAndGlyphs" stroke="#fff" stroke-width="0.35">115.96</text>
<text x="238.2" y="240.9" font-size="9.2" text-anchor="middle" textLength="25.8" lengthAdjust="spacingAndGlyphs" stroke="#fff" stroke-width="0.35">21.82</text>
<text x="332.4" y="240.9" font-size="9.2" text-anchor="middle" textLength="28.5" lengthAdjust="spacingAndGlyphs" stroke="#fff" stroke-width="0.35">124.22</text>
<text x="426.6" y="240.9" font-size="9.2" text-anchor="middle" textLength="28.5" lengthAdjust="spacingAndGlyphs" stroke="#fff" stroke-width="0.35">109.49</text>
<text x="520.8" y="240.9" font-size="9.2" text-anchor="middle" textLength="25.8" lengthAdjust="spacingAndGlyphs" stroke="#fff" stroke-width="0.35">24.50</text>
<text x="615" y="240.9" font-size="9.2" text-anchor="middle" textLength="28.5" lengthAdjust="spacingAndGlyphs" stroke="#fff" stroke-width="0.35">130.24</text>
<text x="108.3" y="252.7" font-size="9.2" text-anchor="end" textLength="33.5" lengthAdjust="spacingAndGlyphs" stroke="#fff" stroke-width="0.35">LT (hr)</text>
<text x="144" y="252.7" font-size="9.2" text-anchor="middle" textLength="39.8" lengthAdjust="spacingAndGlyphs" stroke="#fff" stroke-width="0.35">0.0e+00</text>
<text x="238.2" y="252.7" font-size="9.2" text-anchor="middle" textLength="39.8" lengthAdjust="spacingAndGlyphs" stroke="#fff" stroke-width="0.35">0.0e+00</text>
<text x="332.4" y="252.7" font-size="9.2" text-anchor="middle" textLength="39.8" lengthAdjust="spacingAndGlyphs" stroke="#fff" stroke-width="0.35">0.0e+00</text>
<text x="426.6" y="252.7" font-size="9.2" text-anchor="middle" textLength="39.8" lengthAdjust="spacingAndGlyphs" stroke="#fff" stroke-width="0.35">0.0e+00</text>
<text x="520.8" y="252.7" font-size="9.2" text-anchor="middle" textLength="39.8" lengthAdjust="spacingAndGlyphs" stroke="#fff" stroke-width="0.35">0.0e+00</text>
<text x="615" y="252.7" font-size="9.2" text-anchor="middle" textLength="39.8" lengthAdjust="spacingAndGlyphs" stroke="#fff" stroke-width="0.35">0.0e+00</text>
<text x="108.3" y="264.6" font-size="9.2" text-anchor="end" textLength="40" lengthAdjust="spacingAndGlyphs" stroke="#fff" stroke-width="0.35">Alt (km)</text>
<text x="144" y="264.6" font-size="9.2" text-anchor="middle" textLength="29.5" lengthAdjust="spacingAndGlyphs" stroke="#fff" stroke-width="0.35">366.66</text>
<text x="238.2" y="264.6" font-size="9.2" text-anchor="middle" textLength="29.5" lengthAdjust="spacingAndGlyphs" stroke="#fff" stroke-width="0.35">385.73</text>
<text x="332.4" y="264.6" font-size="9.2" text-anchor="middle" textLength="29.5" lengthAdjust="spacingAndGlyphs" stroke="#fff" stroke-width="0.35">422.72</text>
<text x="426.6" y="264.6" font-size="9.2" text-anchor="middle" textLength="29.5" lengthAdjust="spacingAndGlyphs" stroke="#fff" stroke-width="0.35">365.02</text>
<text x="520.8" y="264.6" font-size="9.2" text-anchor="middle" textLength="29.5" lengthAdjust="spacingAndGlyphs" stroke="#fff" stroke-width="0.35">390.54</text>
<text x="615" y="264.6" font-size="9.2" text-anchor="middle" textLength="29.5" lengthAdjust="spacingAndGlyphs" stroke="#fff" stroke-width="0.35">421.10</text>
<text x="108.3" y="276.4" font-size="9.2" text-anchor="end" textLength="53.5" lengthAdjust="spacingAndGlyphs" stroke="#fff" stroke-width="0.35">ELon (deg)</text>
<text x="144" y="276.4" font-size="9.2" text-anchor="middle" textLength="29.5" lengthAdjust="spacingAndGlyphs" stroke="#fff" stroke-width="0.35">227.21</text>
<text x="238.2" y="276.4" font-size="9.2" text-anchor="middle" textLength="25.8" lengthAdjust="spacingAndGlyphs" stroke="#fff" stroke-width="0.35">40.98</text>
<text x="332.4" y="276.4" font-size="9.2" text-anchor="middle" textLength="29.5" lengthAdjust="spacingAndGlyphs" stroke="#fff" stroke-width="0.35">218.91</text>
<text x="426.6" y="276.4" font-size="9.2" text-anchor="middle" textLength="28.5" lengthAdjust="spacingAndGlyphs" stroke="#fff" stroke-width="0.35">197.26</text>
<text x="520.8" y="276.4" font-size="9.2" text-anchor="middle" textLength="25.8" lengthAdjust="spacingAndGlyphs" stroke="#fff" stroke-width="0.35">11.42</text>
<text x="615" y="276.4" font-size="9.2" text-anchor="middle" textLength="28.5" lengthAdjust="spacingAndGlyphs" stroke="#fff" stroke-width="0.35">167.31</text>
<text x="142" y="296.7" font-size="10.9" textLength="58.5" lengthAdjust="spacingAndGlyphs" stroke="#fff" stroke-width="0.1">Azimuth 0</text>
<text x="110.8" y="317.55" font-size="12.6" textLength="12" lengthAdjust="spacingAndGlyphs" stroke="#fff" stroke-width="0.2">10</text><text x="124.1" y="311.63" font-size="8.32" textLength="5.16" lengthAdjust="spacingAndGlyphs" stroke="#fff" stroke-width="0.3">4</text>
<text x="110.8" y="341.2" font-size="12.6" textLength="12" lengthAdjust="spacingAndGlyphs" stroke="#fff" stroke-width="0.2">10</text><text x="124.1" y="335.28" font-size="8.32" textLength="5.16" lengthAdjust="spacingAndGlyphs" stroke="#fff" stroke-width="0.3">3</text>
<text x="110.8" y="364.85" font-size="12.6" textLength="12" lengthAdjust="spacingAndGlyphs" stroke="#fff" stroke-width="0.2">10</text><text x="124.1" y="358.93" font-size="8.32" textLength="5.16" lengthAdjust="spacingAndGlyphs" stroke="#fff" stroke-width="0.3">2</text>
<text transform="translate(79 345.6) rotate(-90)" font-size="10.6" text-anchor="middle" textLength="70.4" lengthAdjust="spacingAndGlyphs" stroke="#fff" stroke-width="0.15">Electron Volts</text>
<text transform="translate(89 345.7) rotate(-90)" font-size="7.8" text-anchor="middle" textLength="11.4" lengthAdjust="spacingAndGlyphs" stroke="#fff" stroke-width="0.35">eV</text>
<text x="111" y="461.8" font-size="12.5" textLength="12.2" lengthAdjust="spacingAndGlyphs" stroke="#fff" stroke-width="0.2">10</text><text x="124.5" y="455.93" font-size="8.25" textLength="5.12" lengthAdjust="spacingAndGlyphs" stroke="#fff" stroke-width="0.3">2</text>
<text x="111" y="523.7" font-size="12.5" textLength="12.2" lengthAdjust="spacingAndGlyphs" stroke="#fff" stroke-width="0.2">10</text><text x="124.5" y="517.83" font-size="8.25" textLength="5.12" lengthAdjust="spacingAndGlyphs" stroke="#fff" stroke-width="0.3">1</text>
<text x="111" y="585.6" font-size="12.5" textLength="12.2" lengthAdjust="spacingAndGlyphs" stroke="#fff" stroke-width="0.2">10</text><text x="124.5" y="579.73" font-size="8.25" textLength="5.12" lengthAdjust="spacingAndGlyphs" stroke="#fff" stroke-width="0.3">0</text>
<text transform="translate(76.2 487.8) rotate(-90)" font-size="16.2" text-anchor="middle" textLength="127.6" lengthAdjust="spacingAndGlyphs">Electron Energy</text>
<text transform="translate(92.6 488.6) rotate(-90)" font-size="12.5" text-anchor="middle" textLength="16.3" lengthAdjust="spacingAndGlyphs" stroke="#fff" stroke-width="0.2">eV</text>
<text x="718.3" y="584.9" font-size="12.8" textLength="6.5" lengthAdjust="spacingAndGlyphs" stroke="#fff" stroke-width="0.2">0</text>
<text x="718.3" y="547.66" font-size="12.8" textLength="31" lengthAdjust="spacingAndGlyphs" stroke="#fff" stroke-width="0.2">2500</text>
<text x="718.3" y="510.42" font-size="12.8" textLength="31" lengthAdjust="spacingAndGlyphs" stroke="#fff" stroke-width="0.2">5000</text>
<text x="718.3" y="473.18" font-size="12.8" textLength="31" lengthAdjust="spacingAndGlyphs" stroke="#fff" stroke-width="0.2">7500</text>
<text x="718.3" y="435.94" font-size="12.8" textLength="36" lengthAdjust="spacingAndGlyphs" stroke="#fff" stroke-width="0.2">10000</text>
<text transform="translate(820.8 488) rotate(90)" font-size="16" text-anchor="middle" textLength="98.8" lengthAdjust="spacingAndGlyphs">Sensor Data</text>
<text transform="translate(805 488) rotate(90)" font-size="16" text-anchor="middle" textLength="139.8" lengthAdjust="spacingAndGlyphs">MEx Alt/Mars/Pd</text>
<text transform="translate(789 488) rotate(90)" font-size="16" text-anchor="middle" textLength="66.3" lengthAdjust="spacingAndGlyphs">Distance</text>
<text transform="translate(772.8 488) rotate(90)" font-size="16" text-anchor="middle" textLength="24" lengthAdjust="spacingAndGlyphs">km</text>
<text x="113" y="594.6" font-size="10.8" text-anchor="end" textLength="55.8" lengthAdjust="spacingAndGlyphs" stroke="#fff" stroke-width="0.35">2005/303</text>
<text x="142" y="594.6" font-size="10.8" text-anchor="middle" textLength="30.2" lengthAdjust="spacingAndGlyphs" stroke="#fff" stroke-width="0.35">06:57</text>
<text x="236.2" y="594.6" font-size="10.8" text-anchor="middle" textLength="30.2" lengthAdjust="spacingAndGlyphs" stroke="#fff" stroke-width="0.35">07:37</text>
<text x="330.4" y="594.6" font-size="10.8" text-anchor="middle" textLength="30.2" lengthAdjust="spacingAndGlyphs" stroke="#fff" stroke-width="0.35">08:17</text>
<text x="424.6" y="594.6" font-size="10.8" text-anchor="middle" textLength="30.2" lengthAdjust="spacingAndGlyphs" stroke="#fff" stroke-width="0.35">08:57</text>
<text x="518.8" y="594.6" font-size="10.8" text-anchor="middle" textLength="30.2" lengthAdjust="spacingAndGlyphs" stroke="#fff" stroke-width="0.35">09:37</text>
<text x="613" y="594.6" font-size="10.8" text-anchor="middle" textLength="30.2" lengthAdjust="spacingAndGlyphs" stroke="#fff" stroke-width="0.35">10:17</text>
<text x="113" y="608.5" font-size="10.8" text-anchor="end" textLength="56" lengthAdjust="spacingAndGlyphs" stroke="#fff" stroke-width="0.35">SZA (deg)</text>
<text x="142" y="608.5" font-size="10.8" text-anchor="middle" textLength="35" lengthAdjust="spacingAndGlyphs" stroke="#fff" stroke-width="0.35">151.68</text>
<text x="236.2" y="608.5" font-size="10.8" text-anchor="middle" textLength="35" lengthAdjust="spacingAndGlyphs" stroke="#fff" stroke-width="0.35">163.73</text>
<text x="330.4" y="608.5" font-size="10.8" text-anchor="middle" textLength="35" lengthAdjust="spacingAndGlyphs" stroke="#fff" stroke-width="0.35">176.73</text>
<text x="424.6" y="608.5" font-size="10.8" text-anchor="middle" textLength="35" lengthAdjust="spacingAndGlyphs" stroke="#fff" stroke-width="0.35">162.87</text>
<text x="518.8" y="608.5" font-size="10.8" text-anchor="middle" textLength="35" lengthAdjust="spacingAndGlyphs" stroke="#fff" stroke-width="0.35">127.43</text>
<text x="613" y="608.5" font-size="10.8" text-anchor="middle" textLength="30.2" lengthAdjust="spacingAndGlyphs" stroke="#fff" stroke-width="0.35">16.31</text>
<text x="113" y="621.9" font-size="10.8" text-anchor="end" textLength="68.3" lengthAdjust="spacingAndGlyphs" stroke="#fff" stroke-width="0.35">SolLat (deg)</text>
<text x="142" y="621.9" font-size="10.8" text-anchor="middle" textLength="30.2" lengthAdjust="spacingAndGlyphs" stroke="#fff" stroke-width="0.35">25.28</text>
<text x="236.2" y="621.9" font-size="10.8" text-anchor="middle" textLength="30.2" lengthAdjust="spacingAndGlyphs" stroke="#fff" stroke-width="0.35">14.07</text>
<text x="330.4" y="621.9" font-size="10.8" text-anchor="middle" textLength="23.5" lengthAdjust="spacingAndGlyphs" stroke="#fff" stroke-width="0.35">1.07</text>
<text x="424.6" y="621.9" font-size="10.8" text-anchor="middle" textLength="35" lengthAdjust="spacingAndGlyphs" stroke="#fff" stroke-width="0.35">-16.67</text>
<text x="518.8" y="621.9" font-size="10.8" text-anchor="middle" textLength="35" lengthAdjust="spacingAndGlyphs" stroke="#fff" stroke-width="0.35">-48.55</text>
<text x="613" y="621.9" font-size="10.8" text-anchor="middle" textLength="35" lengthAdjust="spacingAndGlyphs" stroke="#fff" stroke-width="0.35">-14.09</text>
<text x="113" y="635.9" font-size="10.8" text-anchor="end" textLength="38.3" lengthAdjust="spacingAndGlyphs" stroke="#fff" stroke-width="0.35">LT (hr)</text>
<text x="142" y="635.9" font-size="10.8" text-anchor="middle" textLength="30.2" lengthAdjust="spacingAndGlyphs" stroke="#fff" stroke-width="0.35">23.12</text>
<text x="236.2" y="635.9" font-size="10.8" text-anchor="middle" textLength="30.2" lengthAdjust="spacingAndGlyphs" stroke="#fff" stroke-width="0.35">23.45</text>
<text x="330.4" y="635.9" font-size="10.8" text-anchor="middle" textLength="30.2" lengthAdjust="spacingAndGlyphs" stroke="#fff" stroke-width="0.35">23.79</text>
<text x="424.6" y="635.9" font-size="10.8" text-anchor="middle" textLength="23.5" lengthAdjust="spacingAndGlyphs" stroke="#fff" stroke-width="0.35">0.27</text>
<text x="518.8" y="635.9" font-size="10.8" text-anchor="middle" textLength="23.5" lengthAdjust="spacingAndGlyphs" stroke="#fff" stroke-width="0.35">1.56</text>
<text x="613" y="635.9" font-size="10.8" text-anchor="middle" textLength="30.2" lengthAdjust="spacingAndGlyphs" stroke="#fff" stroke-width="0.35">11.45</text>
<text x="113" y="649.5" font-size="10.8" text-anchor="end" textLength="68.3" lengthAdjust="spacingAndGlyphs" stroke="#fff" stroke-width="0.35">PdLon (deg)</text>
<text x="142" y="649.5" font-size="10.8" text-anchor="middle" textLength="37.5" lengthAdjust="spacingAndGlyphs" stroke="#fff" stroke-width="0.35">204.36</text>
<text x="236.2" y="649.5" font-size="10.8" text-anchor="middle" textLength="35" lengthAdjust="spacingAndGlyphs" stroke="#fff" stroke-width="0.35">195.81</text>
<text x="330.4" y="649.5" font-size="10.8" text-anchor="middle" textLength="35" lengthAdjust="spacingAndGlyphs" stroke="#fff" stroke-width="0.35">187.09</text>
<text x="424.6" y="649.5" font-size="10.8" text-anchor="middle" textLength="35" lengthAdjust="spacingAndGlyphs" stroke="#fff" stroke-width="0.35">178.51</text>
<text x="518.8" y="649.5" font-size="10.8" text-anchor="middle" textLength="35" lengthAdjust="spacingAndGlyphs" stroke="#fff" stroke-width="0.35">171.15</text>
<text x="613" y="649.5" font-size="10.8" text-anchor="middle" textLength="37.5" lengthAdjust="spacingAndGlyphs" stroke="#fff" stroke-width="0.35">336.82</text>
<rect x="858.2" y="20.2" width="20.6" height="68.6" fill="url(#rb)" stroke="#fff" stroke-width="1" shape-rendering="crispEdges"/>
<path d="M878.8 85.36H874.2M878.8 83.34H874.2M878.8 81.92H874.2M878.8 80.81H874.2M878.8 79.9H874.2M878.8 79.14H874.2M878.8 78.47H874.2M878.8 77.89H874.2M878.8 77.37H871.4M878.8 73.92H874.2M878.8 71.91H874.2M878.8 70.48H874.2M878.8 69.38H874.2M878.8 68.47H874.2M878.8 67.7H874.2M878.8 67.04H874.2M878.8 66.46H874.2M878.8 65.93H871.4M878.8 62.49H874.2M878.8 60.48H874.2M878.8 59.05H874.2M878.8 57.94H874.2M878.8 57.04H874.2M878.8 56.27H874.2M878.8 55.61H874.2M878.8 55.02H874.2M878.8 54.5H871.4M878.8 51.06H874.2M878.8 49.04H874.2M878.8 47.62H874.2M878.8 46.51H874.2M878.8 45.6H874.2M878.8 44.84H874.2M878.8 44.17H874.2M878.8 43.59H874.2M878.8 43.07H871.4M878.8 39.62H874.2M878.8 37.61H874.2M878.8 36.18H874.2M878.8 35.08H874.2M878.8 34.17H874.2M878.8 33.4H874.2M878.8 32.74H874.2M878.8 32.16H874.2M878.8 31.63H871.4M878.8 28.19H874.2M878.8 26.18H874.2M878.8 24.75H874.2M878.8 23.64H874.2M878.8 22.74H874.2M878.8 21.97H874.2M878.8 21.31H874.2M878.8 20.72H874.2" stroke="#fff" stroke-width="1" fill="none" shape-rendering="crispEdges"/>
<text x="868.6" y="17.9" font-size="9.2" text-anchor="middle" textLength="16.3" lengthAdjust="spacingAndGlyphs" font-weight="bold" stroke="#fff" stroke-width="0.35">DEF</text>
<text x="883.5" y="90.4" font-size="7.6" textLength="7.6" lengthAdjust="spacingAndGlyphs" stroke="#fff" stroke-width="0.35">10</text><text x="891.4" y="87.2" font-size="5.2" textLength="5.6" lengthAdjust="spacingAndGlyphs" font-weight="bold" stroke="#fff" stroke-width="0.35">-9</text>
<text x="883.5" y="78.97" font-size="7.6" textLength="7.6" lengthAdjust="spacingAndGlyphs" stroke="#fff" stroke-width="0.35">10</text><text x="891.4" y="75.77" font-size="5.2" textLength="5.6" lengthAdjust="spacingAndGlyphs" font-weight="bold" stroke="#fff" stroke-width="0.35">-8</text>
<text x="883.5" y="67.53" font-size="7.6" textLength="7.6" lengthAdjust="spacingAndGlyphs" stroke="#fff" stroke-width="0.35">10</text><text x="891.4" y="64.33" font-size="5.2" textLength="5.6" lengthAdjust="spacingAndGlyphs" font-weight="bold" stroke="#fff" stroke-width="0.35">-7</text>
<text x="883.5" y="56.1" font-size="7.6" textLength="7.6" lengthAdjust="spacingAndGlyphs" stroke="#fff" stroke-width="0.35">10</text><text x="891.4" y="52.9" font-size="5.2" textLength="5.6" lengthAdjust="spacingAndGlyphs" font-weight="bold" stroke="#fff" stroke-width="0.35">-6</text>
<text x="883.5" y="44.67" font-size="7.6" textLength="7.6" lengthAdjust="spacingAndGlyphs" stroke="#fff" stroke-width="0.35">10</text><text x="891.4" y="41.47" font-size="5.2" textLength="5.6" lengthAdjust="spacingAndGlyphs" font-weight="bold" stroke="#fff" stroke-width="0.35">-5</text>
<text x="883.5" y="33.23" font-size="7.6" textLength="7.6" lengthAdjust="spacingAndGlyphs" stroke="#fff" stroke-width="0.35">10</text><text x="891.4" y="30.03" font-size="5.2" textLength="5.6" lengthAdjust="spacingAndGlyphs" font-weight="bold" stroke="#fff" stroke-width="0.35">-4</text>
<text x="883.5" y="21.8" font-size="7.6" textLength="7.6" lengthAdjust="spacingAndGlyphs" stroke="#fff" stroke-width="0.35">10</text><text x="891.4" y="18.6" font-size="5.2" textLength="5.6" lengthAdjust="spacingAndGlyphs" font-weight="bold" stroke="#fff" stroke-width="0.35">-3</text>
<text transform="translate(914 54) rotate(90)" font-size="9.6" text-anchor="middle" textLength="98.6" lengthAdjust="spacingAndGlyphs" stroke="#fff" stroke-width="0.15">ergs/(cm**2 sr eV s)</text>
<rect x="736.6" y="307.3" width="20.2" height="75.4" fill="url(#rb)" stroke="#fff" stroke-width="1" shape-rendering="crispEdges"/>
<path d="M756.8 371.35H752.3M756.8 364.71H752.3M756.8 360H752.3M756.8 356.35H752.3M756.8 353.36H752.3M756.8 350.84H752.3M756.8 348.65H752.3M756.8 346.73H752.3M756.8 345H749.3M756.8 333.65H752.3M756.8 327.01H752.3M756.8 322.3H752.3M756.8 318.65H752.3M756.8 315.66H752.3M756.8 313.14H752.3M756.8 310.95H752.3M756.8 309.03H752.3" stroke="#fff" stroke-width="1" fill="none" shape-rendering="crispEdges"/>
<text x="747" y="304.1" font-size="9" text-anchor="middle" textLength="10.6" lengthAdjust="spacingAndGlyphs" font-weight="bold" stroke="#fff" stroke-width="0.35">Hz</text>
<text x="761" y="309.9" font-size="8" textLength="7.6" lengthAdjust="spacingAndGlyphs" stroke="#fff" stroke-width="0.35">10</text><text x="769" y="306.3" font-size="5.4" textLength="3.2" lengthAdjust="spacingAndGlyphs" font-weight="bold" stroke="#fff" stroke-width="0.35">4</text>
<text x="761" y="347.6" font-size="8" textLength="7.6" lengthAdjust="spacingAndGlyphs" stroke="#fff" stroke-width="0.35">10</text><text x="769" y="344" font-size="5.4" textLength="3.2" lengthAdjust="spacingAndGlyphs" font-weight="bold" stroke="#fff" stroke-width="0.35">2</text>
<text x="761" y="385.3" font-size="8" textLength="7.6" lengthAdjust="spacingAndGlyphs" stroke="#fff" stroke-width="0.35">10</text><text x="769" y="381.7" font-size="5.4" textLength="3.2" lengthAdjust="spacingAndGlyphs" font-weight="bold" stroke="#fff" stroke-width="0.35">0</text>
<text transform="translate(789.8 344.5) rotate(90)" font-size="9.6" text-anchor="middle" textLength="51" lengthAdjust="spacingAndGlyphs" stroke="#fff" stroke-width="0.15">counts/sec</text>
<rect x="860.3" y="402.3" width="20.5" height="170.4" fill="url(#rb)" stroke="#fff" stroke-width="1" shape-rendering="crispEdges"/>
<path d="M880.8 562.44H876.1M880.8 556.44H876.1M880.8 552.18H876.1M880.8 548.88H876.1M880.8 546.18H876.1M880.8 543.9H876.1M880.8 541.92H876.1M880.8 540.18H876.1M880.8 538.62H873M880.8 528.36H876.1M880.8 522.36H876.1M880.8 518.1H876.1M880.8 514.8H876.1M880.8 512.1H876.1M880.8 509.82H876.1M880.8 507.84H876.1M880.8 506.1H876.1M880.8 504.54H873M880.8 494.28H876.1M880.8 488.28H876.1M880.8 484.02H876.1M880.8 480.72H876.1M880.8 478.02H876.1M880.8 475.74H876.1M880.8 473.76H876.1M880.8 472.02H876.1M880.8 470.46H873M880.8 460.2H876.1M880.8 454.2H876.1M880.8 449.94H876.1M880.8 446.64H876.1M880.8 443.94H876.1M880.8 441.66H876.1M880.8 439.68H876.1M880.8 437.94H876.1M880.8 436.38H873M880.8 426.12H876.1M880.8 420.12H876.1M880.8 415.86H876.1M880.8 412.56H876.1M880.8 409.86H876.1M880.8 407.58H876.1M880.8 405.6H876.1M880.8 403.86H876.1" stroke="#fff" stroke-width="1" fill="none" shape-rendering="crispEdges"/>
<text x="885.7" y="574.9" font-size="8.2" textLength="7.6" lengthAdjust="spacingAndGlyphs" stroke="#fff" stroke-width="0.35">10</text><text x="893.6" y="571.1" font-size="5.6" textLength="3.4" lengthAdjust="spacingAndGlyphs" font-weight="bold" stroke="#fff" stroke-width="0.35">2</text>
<text x="885.7" y="540.82" font-size="8.2" textLength="7.6" lengthAdjust="spacingAndGlyphs" stroke="#fff" stroke-width="0.35">10</text><text x="893.6" y="537.02" font-size="5.6" textLength="3.4" lengthAdjust="spacingAndGlyphs" font-weight="bold" stroke="#fff" stroke-width="0.35">3</text>
<text x="885.7" y="506.74" font-size="8.2" textLength="7.6" lengthAdjust="spacingAndGlyphs" stroke="#fff" stroke-width="0.35">10</text><text x="893.6" y="502.94" font-size="5.6" textLength="3.4" lengthAdjust="spacingAndGlyphs" font-weight="bold" stroke="#fff" stroke-width="0.35">4</text>
<text x="885.7" y="472.66" font-size="8.2" textLength="7.6" lengthAdjust="spacingAndGlyphs" stroke="#fff" stroke-width="0.35">10</text><text x="893.6" y="468.86" font-size="5.6" textLength="3.4" lengthAdjust="spacingAndGlyphs" font-weight="bold" stroke="#fff" stroke-width="0.35">5</text>
<text x="885.7" y="438.58" font-size="8.2" textLength="7.6" lengthAdjust="spacingAndGlyphs" stroke="#fff" stroke-width="0.35">10</text><text x="893.6" y="434.78" font-size="5.6" textLength="3.4" lengthAdjust="spacingAndGlyphs" font-weight="bold" stroke="#fff" stroke-width="0.35">6</text>
<text x="885.7" y="404.5" font-size="8.2" textLength="7.6" lengthAdjust="spacingAndGlyphs" stroke="#fff" stroke-width="0.35">10</text><text x="893.6" y="400.7" font-size="5.6" textLength="3.4" lengthAdjust="spacingAndGlyphs" font-weight="bold" stroke="#fff" stroke-width="0.35">7</text>
<text transform="translate(919 487) rotate(90)" font-size="10.6" text-anchor="middle" textLength="132.5" lengthAdjust="spacingAndGlyphs" stroke="#fff" stroke-width="0.15">cnts/(cm**2-sr-sec-eV)</text>
</g>
</svg></body></html>
